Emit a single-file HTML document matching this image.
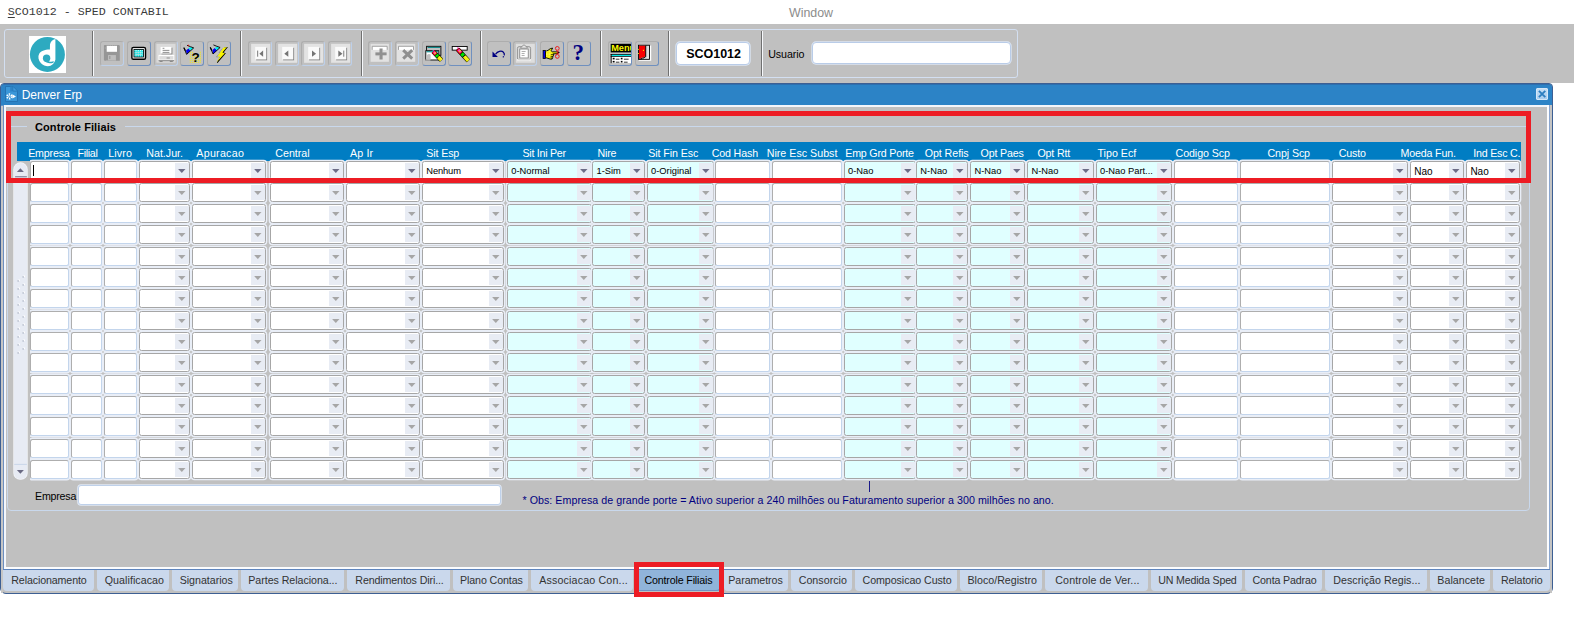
<!DOCTYPE html>
<html><head><meta charset="utf-8"><title>SCO1012 - SPED CONTABIL</title>
<style>
html,body{margin:0;padding:0;background:#fff}
body{width:1574px;height:630px;position:relative;overflow:hidden;font-family:"Liberation Sans",sans-serif}
.t{position:absolute;white-space:nowrap;line-height:20px;height:20px}
.s{font-family:"Liberation Sans",sans-serif}
.b{font-family:"Liberation Sans",sans-serif;font-weight:bold}
.m{font-family:"Liberation Mono",monospace}
</style></head><body>
<div class="t m" style="left:7.80px;top:1.91px;font-size:11.67px;color:#3a3a3a;"><u style="text-underline-offset:2px;text-decoration-thickness:1px">S</u>CO1012 - SPED CONTABIL</div>
<div class="t s" style="left:789.00px;top:2.72px;font-size:12.4px;color:#8c8c8c;">Window</div>
<div style="position:absolute;left:0.00px;top:24.00px;width:1574.00px;height:59.00px;background:#c0c0c0"></div>
<div style="position:absolute;left:3.70px;top:28.90px;width:1014.30px;height:49.00px;box-sizing:border-box;border:1.5px solid #d3dff1;border-radius:3px"></div>
<div style="position:absolute;left:29.00px;top:36.00px;width:37.00px;height:37.00px;"><svg width="37" height="37" viewBox="0 0 37 37" style="position:absolute;left:0;top:0">
<rect width="37" height="37" fill="#fff"/>
<circle cx="18.4" cy="18.4" r="17.5" fill="#2daac0"/>
<path d="M26.4 2.9 L26.4 23.8 C25.6 26.6 23.8 28.9 21.5 29.8 C18.4 30.9 14.6 29.9 12 27.2 C9.4 24.4 8.6 20.6 10.2 17.8 C11.8 15 15.2 13.6 20.9 13.5 L21 8.5 C21.3 5.8 23.4 3.6 26.4 2.9 Z" fill="#fff"/>
<circle cx="17.6" cy="22.3" r="3.7" fill="#2daac0"/>
<path d="M15.2 24.6 C17 27.6 21.5 27.6 24.4 26.7 L24.9 25.3 C22 26 20 25.7 18.6 24.4 Z" fill="#2daac0"/>
</svg></div>
<div style="position:absolute;left:91.50px;top:31.00px;width:1.00px;height:44.80px;background:#707070"></div>
<div style="position:absolute;left:92.50px;top:31.00px;width:1.20px;height:44.80px;background:#f6f8fb"></div>
<div style="position:absolute;left:239.70px;top:31.00px;width:1.00px;height:44.80px;background:#707070"></div>
<div style="position:absolute;left:240.70px;top:31.00px;width:1.20px;height:44.80px;background:#f6f8fb"></div>
<div style="position:absolute;left:360.70px;top:31.00px;width:1.00px;height:44.80px;background:#707070"></div>
<div style="position:absolute;left:361.70px;top:31.00px;width:1.20px;height:44.80px;background:#f6f8fb"></div>
<div style="position:absolute;left:480.00px;top:31.00px;width:1.00px;height:44.80px;background:#707070"></div>
<div style="position:absolute;left:481.00px;top:31.00px;width:1.20px;height:44.80px;background:#f6f8fb"></div>
<div style="position:absolute;left:600.00px;top:31.00px;width:1.00px;height:44.80px;background:#707070"></div>
<div style="position:absolute;left:601.00px;top:31.00px;width:1.20px;height:44.80px;background:#f6f8fb"></div>
<div style="position:absolute;left:667.80px;top:31.00px;width:1.00px;height:44.80px;background:#707070"></div>
<div style="position:absolute;left:668.80px;top:31.00px;width:1.20px;height:44.80px;background:#f6f8fb"></div>
<div style="position:absolute;left:760.80px;top:31.00px;width:1.00px;height:44.80px;background:#707070"></div>
<div style="position:absolute;left:761.80px;top:31.00px;width:1.20px;height:44.80px;background:#f6f8fb"></div>
<div style="position:absolute;left:100.20px;top:41.20px;width:24.00px;height:24.40px;box-sizing:border-box;border:1px solid #adadad;border-bottom-color:#bdd0ea;border-right-color:#bdd0ea;border-radius:3px;overflow:hidden"><svg width="22" height="22.4" viewBox="0 0 22 22.4" style="position:absolute;left:0;top:0"><path d="M3.6 2.9 H17.9 L18.8 3.8 V18.7 H3.6 L2.9 18 V3.6 Z" fill="#969696"/><path d="M5.6 3.2 H16.1" stroke="#c0c0c0" stroke-width="0.7" stroke-dasharray="0.9 0.9"/><rect x="5.7" y="3.9" width="10.3" height="5.9" fill="#fff"/><rect x="7" y="13.1" width="7.9" height="5.2" fill="#bdbdbd"/><rect x="8" y="14" width="1.5" height="3" fill="#a0a0a0"/><path d="M5.5 18.4 H15.5" stroke="#c0c0c0" stroke-width="0.8" stroke-dasharray="1 1"/><rect x="3.8" y="5.6" width="0.8" height="0.8" fill="#c6c6c6"/></svg></div>
<div style="position:absolute;left:126.80px;top:41.20px;width:24.00px;height:24.40px;box-sizing:border-box;border:1px solid #adadad;border-bottom-color:#6f90bf;border-right-color:#6f90bf;border-radius:3px;overflow:hidden"><svg width="22" height="22.4" viewBox="0 0 22 22.4" style="position:absolute;left:0;top:0"><rect x="3.85" y="5.35" width="13.7" height="11.9" rx="1.6" fill="#e4e4e4" stroke="#000" stroke-width="1.4"/><rect x="6.0" y="7.4" width="9.6" height="7.6" fill="#00e8e8" stroke="#000" stroke-width="0.8"/><rect x="6.60" y="8.00" width="0.9" height="0.9" fill="#fff"/><rect x="8.40" y="8.00" width="0.9" height="0.9" fill="#fff"/><rect x="10.20" y="8.00" width="0.9" height="0.9" fill="#fff"/><rect x="12.00" y="8.00" width="0.9" height="0.9" fill="#fff"/><rect x="13.80" y="8.00" width="0.9" height="0.9" fill="#fff"/><rect x="6.60" y="9.80" width="0.9" height="0.9" fill="#fff"/><rect x="8.40" y="9.80" width="0.9" height="0.9" fill="#fff"/><rect x="10.20" y="9.80" width="0.9" height="0.9" fill="#fff"/><rect x="12.00" y="9.80" width="0.9" height="0.9" fill="#fff"/><rect x="13.80" y="9.80" width="0.9" height="0.9" fill="#fff"/><rect x="6.60" y="11.60" width="0.9" height="0.9" fill="#fff"/><rect x="8.40" y="11.60" width="0.9" height="0.9" fill="#fff"/><rect x="10.20" y="11.60" width="0.9" height="0.9" fill="#fff"/><rect x="12.00" y="11.60" width="0.9" height="0.9" fill="#fff"/><rect x="13.80" y="11.60" width="0.9" height="0.9" fill="#fff"/><rect x="6.60" y="13.40" width="0.9" height="0.9" fill="#fff"/><rect x="8.40" y="13.40" width="0.9" height="0.9" fill="#fff"/><rect x="10.20" y="13.40" width="0.9" height="0.9" fill="#fff"/><rect x="12.00" y="13.40" width="0.9" height="0.9" fill="#fff"/><rect x="13.80" y="13.40" width="0.9" height="0.9" fill="#fff"/><path d="M7.4 10.2 H14 M7.4 12.4 H14" stroke="#c9d6d6" stroke-width="0.8"/></svg></div>
<div style="position:absolute;left:153.50px;top:41.20px;width:24.00px;height:24.40px;box-sizing:border-box;border:1px solid #adadad;border-bottom-color:#bdd0ea;border-right-color:#bdd0ea;border-radius:3px;overflow:hidden"><svg width="22" height="22.4" viewBox="0 0 22 22.4" style="position:absolute;left:0;top:0"><rect x="1.4" y="1.8" width="19.1" height="18.9" fill="#dadada"/><rect x="6.5" y="5.7" width="10.9" height="6.7" fill="#7e7e7e"/><rect x="5.6" y="4.9" width="10.9" height="6.7" fill="#fff"/><path d="M7.6 6.3 H9.4 M7.6 8.4 H14.4 M7.6 10.4 H14.4" stroke="#747474" stroke-width="0.8"/><rect x="3.5" y="12.9" width="15.7" height="5.4" fill="#fff"/><rect x="4.3" y="14.1" width="14.1" height="3.5" fill="#dcdcdc"/><path d="M11.6 16 h3.2" stroke="#8a8a8a" stroke-width="0.9"/><path d="M3.6 18.7 H19.1" stroke="#7e7e7e" stroke-width="0.9"/><path d="M4.6 19.5 h3 M14.8 19.5 h3" stroke="#8a8a8a" stroke-width="1"/></svg></div>
<div style="position:absolute;left:180.20px;top:41.20px;width:24.00px;height:24.40px;box-sizing:border-box;border:1px solid #adadad;border-bottom-color:#6f90bf;border-right-color:#6f90bf;border-radius:3px;overflow:hidden"><svg width="22" height="22.4" viewBox="0 0 22 22.4" style="position:absolute;left:0;top:0"><rect x="8.80" y="9.80" width="1.0" height="1.0" fill="#f8f000"/><rect x="10.80" y="9.80" width="1.0" height="1.0" fill="#f8f000"/><rect x="18.80" y="9.80" width="1.0" height="1.0" fill="#f8f000"/><rect x="8.80" y="11.80" width="1.0" height="1.0" fill="#f8f000"/><rect x="10.80" y="11.80" width="1.0" height="1.0" fill="#f8f000"/><rect x="12.80" y="11.80" width="1.0" height="1.0" fill="#f8f000"/><rect x="18.80" y="11.80" width="1.0" height="1.0" fill="#f8f000"/><rect x="8.80" y="13.80" width="1.0" height="1.0" fill="#f8f000"/><rect x="10.80" y="13.80" width="1.0" height="1.0" fill="#f8f000"/><rect x="12.80" y="13.80" width="1.0" height="1.0" fill="#f8f000"/><rect x="14.80" y="13.80" width="1.0" height="1.0" fill="#f8f000"/><rect x="16.80" y="13.80" width="1.0" height="1.0" fill="#f8f000"/><rect x="18.80" y="13.80" width="1.0" height="1.0" fill="#f8f000"/><rect x="8.80" y="15.80" width="1.0" height="1.0" fill="#f8f000"/><rect x="10.80" y="15.80" width="1.0" height="1.0" fill="#f8f000"/><rect x="12.80" y="15.80" width="1.0" height="1.0" fill="#f8f000"/><rect x="14.80" y="15.80" width="1.0" height="1.0" fill="#f8f000"/><rect x="16.80" y="15.80" width="1.0" height="1.0" fill="#f8f000"/><rect x="18.80" y="15.80" width="1.0" height="1.0" fill="#f8f000"/><rect x="8.80" y="17.80" width="1.0" height="1.0" fill="#f8f000"/><rect x="10.80" y="17.80" width="1.0" height="1.0" fill="#f8f000"/><rect x="12.80" y="17.80" width="1.0" height="1.0" fill="#f8f000"/><rect x="14.80" y="17.80" width="1.0" height="1.0" fill="#f8f000"/><rect x="16.80" y="17.80" width="1.0" height="1.0" fill="#f8f000"/><rect x="18.80" y="17.80" width="1.0" height="1.0" fill="#f8f000"/><rect x="8.80" y="19.80" width="1.0" height="1.0" fill="#f8f000"/><rect x="10.80" y="19.80" width="1.0" height="1.0" fill="#f8f000"/><rect x="12.80" y="19.80" width="1.0" height="1.0" fill="#f8f000"/><rect x="14.80" y="19.80" width="1.0" height="1.0" fill="#f8f000"/><rect x="16.80" y="19.80" width="1.0" height="1.0" fill="#f8f000"/><rect x="18.80" y="19.80" width="1.0" height="1.0" fill="#f8f000"/><g transform="translate(0,0)"><path d="M5 8.4 L5.7 12.3 L9.6 8.6 L7.4 6.4 Z" fill="#0000f0"/><path d="M7.4 6.4 L9.6 8.6 L12.4 6 L9.4 5.1 Z" fill="#00f0f0"/><path d="M2.9 5.6 L5.6 12.4 L12.7 5.9 L9.4 4.7 L6 3.3" fill="none" stroke="#000" stroke-width="0.9"/><path d="M2.9 5.8 L4.4 8.8" stroke="#000" stroke-width="1.2"/></g><rect x="6.8" y="2.8" width="1.3" height="1" fill="#f00000"/><text x="10.6" y="19.6" font-family="Liberation Sans" font-weight="bold" font-size="13.5" fill="#000">?</text></svg></div>
<div style="position:absolute;left:206.80px;top:41.20px;width:24.00px;height:24.40px;box-sizing:border-box;border:1px solid #adadad;border-bottom-color:#6f90bf;border-right-color:#6f90bf;border-radius:3px;overflow:hidden"><svg width="22" height="22.4" viewBox="0 0 22 22.4" style="position:absolute;left:0;top:0"><g transform="translate(-0.6,-0.4)"><path d="M5 8.4 L5.7 12.3 L9.6 8.6 L7.4 6.4 Z" fill="#0000f0"/><path d="M7.4 6.4 L9.6 8.6 L12.4 6 L9.4 5.1 Z" fill="#00f0f0"/><path d="M2.9 5.6 L5.6 12.4 L12.7 5.9 L9.4 4.7 L6 3.3" fill="none" stroke="#000" stroke-width="0.9"/><path d="M2.9 5.8 L4.4 8.8" stroke="#000" stroke-width="1.2"/></g><path d="M14.6 6.6 L11 10.6 L12.6 10.8 L8.4 14.8 L10.6 15" fill="none" stroke="#8f8f8f" stroke-width="0.9"/><path d="M16.6 5.6 L20 4.9 L15.6 10.6 L17.9 11.3 L9.5 20.9 L8.9 20.4 Z" fill="#000"/><path d="M15.4 5.7 L19 5.1 L14.4 10.6 L16.8 11.3 L8.5 20.6 L12 14.3 L9.3 14.5 Z" fill="#f8f400"/></svg></div>
<div style="position:absolute;left:247.80px;top:41.20px;width:24.00px;height:24.40px;box-sizing:border-box;border:1px solid #adadad;border-bottom-color:#bdd0ea;border-right-color:#bdd0ea;border-radius:3px;overflow:hidden"><svg width="22" height="22.4" viewBox="0 0 22 22.4" style="position:absolute;left:0;top:0"><rect x="2.1" y="1.8" width="19.1" height="19" fill="#e3e3e3"/><rect x="7.1" y="5.8" width="11" height="12.5" fill="#7a7a7a"/><rect x="6.2" y="4.9" width="11.1" height="12.6" fill="#fafafa"/><rect x="8.2" y="8.6" width="0.95" height="6.1" fill="#747474"/><path d="M10.4 11.65 L14.1 8.5 V14.8 Z" fill="#747474"/></svg></div>
<div style="position:absolute;left:274.50px;top:41.20px;width:24.00px;height:24.40px;box-sizing:border-box;border:1px solid #adadad;border-bottom-color:#bdd0ea;border-right-color:#bdd0ea;border-radius:3px;overflow:hidden"><svg width="22" height="22.4" viewBox="0 0 22 22.4" style="position:absolute;left:0;top:0"><rect x="2.1" y="1.8" width="19.1" height="19" fill="#e3e3e3"/><rect x="7.1" y="5.8" width="11" height="12.5" fill="#7a7a7a"/><rect x="6.2" y="4.9" width="11.1" height="12.6" fill="#fafafa"/><path d="M8.3 11.65 L12.3 8.5 V14.8 Z" fill="#747474"/></svg></div>
<div style="position:absolute;left:301.20px;top:41.20px;width:24.00px;height:24.40px;box-sizing:border-box;border:1px solid #adadad;border-bottom-color:#bdd0ea;border-right-color:#bdd0ea;border-radius:3px;overflow:hidden"><svg width="22" height="22.4" viewBox="0 0 22 22.4" style="position:absolute;left:0;top:0"><rect x="2.1" y="1.8" width="19.1" height="19" fill="#e3e3e3"/><rect x="7.1" y="5.8" width="11" height="12.5" fill="#7a7a7a"/><rect x="6.2" y="4.9" width="11.1" height="12.6" fill="#fafafa"/><path d="M14.1 11.65 L10 8.5 V14.8 Z" fill="#747474"/></svg></div>
<div style="position:absolute;left:327.80px;top:41.20px;width:24.00px;height:24.40px;box-sizing:border-box;border:1px solid #adadad;border-bottom-color:#bdd0ea;border-right-color:#bdd0ea;border-radius:3px;overflow:hidden"><svg width="22" height="22.4" viewBox="0 0 22 22.4" style="position:absolute;left:0;top:0"><rect x="2.1" y="1.8" width="19.1" height="19" fill="#e3e3e3"/><rect x="7.1" y="5.8" width="11" height="12.5" fill="#7a7a7a"/><rect x="6.2" y="4.9" width="11.1" height="12.6" fill="#fafafa"/><rect x="14.3" y="8.6" width="0.95" height="6.1" fill="#747474"/><path d="M13.5 11.65 L9.3 8.5 V14.8 Z" fill="#747474"/></svg></div>
<div style="position:absolute;left:368.30px;top:41.20px;width:24.00px;height:24.40px;box-sizing:border-box;border:1px solid #adadad;border-bottom-color:#bdd0ea;border-right-color:#bdd0ea;border-radius:3px;overflow:hidden"><svg width="22" height="22.4" viewBox="0 0 22 22.4" style="position:absolute;left:0;top:0"><rect x="1.6" y="1.8" width="18.3" height="18" fill="#e2e2e2"/><rect x="2.9" y="4" width="15.6" height="3.9" fill="#fff"/><path d="M3.2 7.9 V4.3 H18.2 V7.9" fill="none" stroke="#8c8c8c" stroke-width="0.8"/><rect x="10.5" y="6.5" width="3.1" height="11" fill="#909090"/><rect x="6.4" y="10.4" width="11.2" height="2.9" fill="#909090"/><path d="M13.6 7.2 V10.4 M6.8 13.6 H10.5" stroke="#bdbdbd" stroke-width="0.8"/></svg></div>
<div style="position:absolute;left:395.00px;top:41.20px;width:24.00px;height:24.40px;box-sizing:border-box;border:1px solid #adadad;border-bottom-color:#bdd0ea;border-right-color:#bdd0ea;border-radius:3px;overflow:hidden"><svg width="22" height="22.4" viewBox="0 0 22 22.4" style="position:absolute;left:0;top:0"><rect x="0.9" y="1.8" width="18.3" height="18" fill="#e2e2e2"/><rect x="2.2" y="4" width="15.6" height="3.9" fill="#fff"/><path d="M2.5 7.9 V4.3 H17.5 V7.9" fill="none" stroke="#8c8c8c" stroke-width="0.8"/><path d="M7.2 8.2 L16.2 16.6 M16.2 8.2 L7.2 16.6" stroke="#8e8e8e" stroke-width="3"/></svg></div>
<div style="position:absolute;left:421.70px;top:41.20px;width:24.00px;height:24.40px;box-sizing:border-box;border:1px solid #adadad;border-bottom-color:#6f90bf;border-right-color:#6f90bf;border-radius:3px;overflow:hidden"><svg width="22" height="22.4" viewBox="0 0 22 22.4" style="position:absolute;left:0;top:0"><rect x="3.6" y="4.3" width="14.3" height="9" fill="#c0c0c0" stroke="#000" stroke-width="0.9"/><rect x="4.6" y="4.9" width="12.4" height="1" fill="#008888"/><rect x="2.8" y="8.7" width="13" height="9.3" fill="#fff" stroke="#000" stroke-width="0.9"/><rect x="3.4" y="9.2" width="11.8" height="1.1" fill="#008888"/><path d="M3.4 17.4 V13.6 Q5 11 7.6 12.4 V17.4 Z" fill="#c0c0c0"/><rect x="2.4" y="17.4" width="5" height="1.2" fill="#c0c0c0"/><ellipse cx="10.6" cy="9.2" rx="2.2" ry="0.8" fill="#00e8e8"/><g transform="translate(10.2,9.6) rotate(46.4)"><rect x="-0.4" y="-2.3" width="12.48" height="4.6" rx="1" fill="#000"/><rect x="0" y="-1.8" width="3.92" height="3.6" fill="#f01010"/><rect x="0.71" y="-1.3" width="2.61" height="2.1" fill="#ff30e0"/><rect x="1.90" y="-1.5" width="1" height="2.3" fill="#f8e000"/><rect x="4.40" y="-1.8" width="2.38" height="3.6" fill="#00e000"/><rect x="7.37" y="-1.8" width="4.52" height="3.6" fill="#f4f000"/><path d="M7.60 -0.6000000000000001 H11.88" stroke="#fff8a0" stroke-width="0.7" stroke-dasharray="0.8 0.8"/></g><rect x="9.8" y="8.4" width="1.4" height="0.9" fill="#ff30e0"/></svg></div>
<div style="position:absolute;left:448.30px;top:41.20px;width:24.00px;height:24.40px;box-sizing:border-box;border:1px solid #adadad;border-bottom-color:#6f90bf;border-right-color:#6f90bf;border-radius:3px;overflow:hidden"><svg width="22" height="22.4" viewBox="0 0 22 22.4" style="position:absolute;left:0;top:0"><rect x="3.2" y="4.45" width="15" height="3.7" fill="#fff" stroke="#000" stroke-width="0.9"/><g transform="translate(8.6,7.2) rotate(47.3)"><rect x="-0.4" y="-2.3" width="16.38" height="4.6" rx="1" fill="#000"/><rect x="0" y="-1.8" width="5.21" height="3.6" fill="#f01010"/><rect x="0.95" y="-1.3" width="3.47" height="2.1" fill="#ff30e0"/><rect x="2.53" y="-1.5" width="1" height="2.3" fill="#f8e000"/><rect x="5.84" y="-1.8" width="3.16" height="3.6" fill="#00e000"/><rect x="9.78" y="-1.8" width="6.00" height="3.6" fill="#f4f000"/><path d="M10.10 -0.6000000000000001 H15.78" stroke="#fff8a0" stroke-width="0.7" stroke-dasharray="0.8 0.8"/></g><rect x="8" y="5.4" width="1.5" height="0.9" fill="#ff30e0"/></svg></div>
<div style="position:absolute;left:486.50px;top:41.20px;width:24.00px;height:24.40px;box-sizing:border-box;border:1px solid #adadad;border-bottom-color:#6f90bf;border-right-color:#6f90bf;border-radius:3px;overflow:hidden"><svg width="22" height="22.4" viewBox="0 0 22 22.4" style="position:absolute;left:0;top:0"><path d="M4.5 9.6 V15 H9.9 Z" fill="#000080"/><path d="M7.6 12.2 C9.5 9.6 13.2 8.2 15.4 10.2 C16.6 11.4 16.5 12.6 16.1 13.4" fill="none" stroke="#000080" stroke-width="1.25"/><path d="M15.6 14.2 L15.2 15.4" stroke="#000080" stroke-width="1.3"/></svg></div>
<div style="position:absolute;left:513.20px;top:41.20px;width:24.00px;height:24.40px;box-sizing:border-box;border:1px solid #adadad;border-bottom-color:#bdd0ea;border-right-color:#bdd0ea;border-radius:3px;overflow:hidden"><svg width="22" height="22.4" viewBox="0 0 22 22.4" style="position:absolute;left:0;top:0"><rect x="1.8" y="1.8" width="19" height="19" fill="#dedede"/><rect x="3.4" y="4.7" width="13.2" height="12.9" rx="1.6" fill="#dcdcdc" stroke="#8c8c8c" stroke-width="0.9"/><path d="M3 17.9 H17" stroke="#fff" stroke-width="1"/><path d="M6.6 6.2 Q6.6 4.6 8.2 4.5 Q8.6 3 10 3 Q11.4 3 11.8 4.5 Q13.4 4.6 13.4 6.2 Z" fill="#e6e6e6" stroke="#8c8c8c" stroke-width="0.8"/><rect x="5.7" y="7" width="8.6" height="9" fill="#e8e8e8" stroke="#8f8f8f" stroke-width="0.9"/><rect x="6.6" y="7.9" width="6.8" height="7.3" fill="#fff"/><path d="M7.6 9.5 H11.6 M7.6 11.5 H10.6 M7.6 13.5 H10.6" stroke="#9a9a9a" stroke-width="0.8"/></svg></div>
<div style="position:absolute;left:540.00px;top:41.20px;width:24.00px;height:24.40px;box-sizing:border-box;border:1px solid #adadad;border-bottom-color:#6f90bf;border-right-color:#6f90bf;border-radius:3px;overflow:hidden"><svg width="22" height="22.4" viewBox="0 0 22 22.4" style="position:absolute;left:0;top:0"><rect x="2.1" y="8.5" width="2.3" height="8" fill="#0000f8" stroke="#000" stroke-width="0.8"/><path d="M4.5 9.6 L7.2 8.2 L9.4 6.6 L11.6 6.1 L11 7.6 L9.8 8.6 L11.2 9.8 L16.8 9.9 L16.8 11.6 L12 11.9 L12.6 12.6 L12.4 13.8 L11.9 14.2 L12 15.4 L11.3 15.9 L11.2 17 L9.6 17.2 L7 16.4 L4.5 15.6 Z" fill="#f6ee00" stroke="#000" stroke-width="0.9" stroke-linejoin="round"/><rect x="5.20" y="9.40" width="0.7" height="0.7" fill="#fff8c0"/><rect x="6.65" y="9.40" width="0.7" height="0.7" fill="#fff8c0"/><rect x="8.10" y="9.40" width="0.7" height="0.7" fill="#fff8c0"/><rect x="9.55" y="9.40" width="0.7" height="0.7" fill="#fff8c0"/><rect x="5.20" y="10.85" width="0.7" height="0.7" fill="#fff8c0"/><rect x="6.65" y="10.85" width="0.7" height="0.7" fill="#fff8c0"/><rect x="8.10" y="10.85" width="0.7" height="0.7" fill="#fff8c0"/><rect x="9.55" y="10.85" width="0.7" height="0.7" fill="#fff8c0"/><rect x="5.20" y="12.30" width="0.7" height="0.7" fill="#fff8c0"/><rect x="6.65" y="12.30" width="0.7" height="0.7" fill="#fff8c0"/><rect x="8.10" y="12.30" width="0.7" height="0.7" fill="#fff8c0"/><rect x="9.55" y="12.30" width="0.7" height="0.7" fill="#fff8c0"/><rect x="5.20" y="13.75" width="0.7" height="0.7" fill="#fff8c0"/><rect x="6.65" y="13.75" width="0.7" height="0.7" fill="#fff8c0"/><rect x="8.10" y="13.75" width="0.7" height="0.7" fill="#fff8c0"/><rect x="9.55" y="13.75" width="0.7" height="0.7" fill="#fff8c0"/><path d="M9.8 12.6 H12.4 M9.6 14.4 H12 M9.4 16 H11.2" stroke="#000" stroke-width="0.7"/><circle cx="16.3" cy="6.4" r="1.9" fill="none" stroke="#f01010" stroke-width="0.9"/><circle cx="16.3" cy="14.4" r="1.9" fill="none" stroke="#f01010" stroke-width="0.9"/><path d="M15.4 8.2 L17.8 12.2 M15.4 12.6 L17.8 8.6" stroke="#f01010" stroke-width="0.8"/><path d="M17 10.4 L18.6 10.4" stroke="#000" stroke-width="0.9"/></svg></div>
<div style="position:absolute;left:566.70px;top:41.20px;width:24.00px;height:24.40px;box-sizing:border-box;border:1px solid #adadad;border-bottom-color:#6f90bf;border-right-color:#6f90bf;border-radius:3px;overflow:hidden"><svg width="22" height="22.4" viewBox="0 0 22 22.4" style="position:absolute;left:0;top:0"><text x="4.6" y="18.4" font-family="Liberation Serif" font-weight="bold" font-size="23" fill="#000080">?</text></svg></div>
<div style="position:absolute;left:608.30px;top:41.20px;width:24.00px;height:24.40px;box-sizing:border-box;border:1px solid #adadad;border-bottom-color:#6f90bf;border-right-color:#6f90bf;border-radius:3px;overflow:hidden"><svg width="22" height="22.4" viewBox="0 0 22 22.4" style="position:absolute;left:0;top:0"><rect x="1.7" y="1.8" width="20.3" height="8.6" fill="#000"/><text x="2.2" y="9.3" font-family="Liberation Sans" font-weight="bold" font-size="9.6" fill="#f8f800" textLength="24" lengthAdjust="spacingAndGlyphs">Menu</text><rect x="1.7" y="12" width="20.3" height="0.9" fill="#000"/><rect x="2.5" y="12.8" width="19.5" height="1.4" fill="#00e8e8"/><rect x="1.7" y="14.1" width="20.3" height="0.8" fill="#000"/><rect x="2.5" y="14.9" width="19.5" height="6.2" fill="#fff"/><rect x="1.7" y="12" width="0.9" height="9.2" fill="#000"/><rect x="3.7" y="15.8" width="1.9" height="1.6" fill="#000"/><rect x="11.8" y="15.8" width="1.7" height="1.6" fill="#000"/><rect x="3.7" y="18.9" width="1.9" height="1.6" fill="#000"/><rect x="11.8" y="18.9" width="1.7" height="1.6" fill="#000"/><path d="M6.8 17.2 H10.4 M14.9 17.2 H19.6 M6.8 20.2 H10.4 M14.9 20.2 H18.6" stroke="#000" stroke-width="0.8"/></svg></div>
<div style="position:absolute;left:635.00px;top:41.20px;width:24.00px;height:24.40px;box-sizing:border-box;border:1px solid #adadad;border-bottom-color:#6f90bf;border-right-color:#6f90bf;border-radius:3px;overflow:hidden"><svg width="22" height="22.4" viewBox="0 0 22 22.4" style="position:absolute;left:0;top:0"><rect x="2.8" y="3.6" width="12.4" height="15.2" fill="#fff"/><rect x="2.45" y="3.25" width="11.1" height="14.1" fill="#c0c0c0" stroke="#000" stroke-width="0.9"/><rect x="11.4" y="3.9" width="1.3" height="12.4" fill="#eee"/><path d="M6 15.9 H12.6" stroke="#eee" stroke-width="0.9"/><path d="M9.6 3.7 V14.6 H9 V15.3 H8 V16 H5.6 V17 H2.9" fill="none" stroke="#000" stroke-width="1"/><path d="M3 3.7 H9.2 V14.2 H8.6 V14.9 H7.6 V15.6 H5.4 V16.4 H3 Z" fill="#f80000"/><rect x="6.9" y="7.8" width="1.1" height="1.1" fill="#f8e000"/><rect x="2" y="6.9" width="1" height="0.9" fill="#f8e000"/><rect x="2" y="11" width="1" height="0.9" fill="#f8e000"/></svg></div>
<div style="position:absolute;left:675.70px;top:41.50px;width:74.40px;height:23.00px;box-sizing:border-box;background:#fff;border:1.5px solid #b9cce8;border-radius:4px;box-shadow:0 0 0 0.7px #dbe5f3"></div>
<div class="t b" style="left:686.30px;top:43.69px;font-size:12.5px;color:#000;letter-spacing:-0.042px;">SCO1012</div>
<div class="t s" style="left:768.20px;top:44.32px;font-size:10.67px;color:#000;letter-spacing:-0.067px;">Usuario</div>
<div style="position:absolute;left:812.00px;top:41.80px;width:199.00px;height:21.80px;box-sizing:border-box;background:#fff;border:1.5px solid #b9cce8;border-radius:4px;box-shadow:0 0 0 0.7px #dbe5f3"></div>
<div style="position:absolute;left:0.00px;top:83.00px;width:1553.00px;height:511.00px;box-sizing:border-box;background:#c0c0c0;border:1px solid #3d5f93;border-radius:4px 4px 6px 6px"></div>
<div style="position:absolute;left:0.80px;top:83.80px;width:1551.00px;height:21.00px;background:#2c83c6;border-radius:3px 3px 0 0;border-top:1px solid #2d6fae;box-sizing:border-box"></div>
<div style="position:absolute;left:5.20px;top:86.00px;width:13.00px;height:16.00px;"><svg width="13" height="16" viewBox="0 0 13 16" style="position:absolute;left:0;top:0">
<path d="M0.5 0.5 H8 L12.5 5 V15.5 H0.5 Z" fill="#3a96d8" stroke="#2573b3" stroke-width="1"/>
<path d="M5.2 0.5 H8 V5 H12.5 V5.6 H5.2 Z" fill="#2c83c6" />
<path d="M8 0.5 L12.5 5 H8 Z" fill="#3f9add" stroke="#2573b3" stroke-width="0.6"/>
<circle cx="4.3" cy="10.4" r="2.3" fill="none" stroke="#fff" stroke-width="1.5" stroke-dasharray="1.3 1.0"/>
<circle cx="4.3" cy="10.4" r="1.1" fill="#fff"/>
<circle cx="4.3" cy="10.4" r="0.5" fill="#2c83c6"/>
<path d="M7.3 8.3 L11 10.4 L7.3 12.5 Z" fill="#fff"/>
</svg></div>
<div class="t s" style="left:21.70px;top:84.86px;font-size:12px;color:#fff;letter-spacing:-0.039px;">Denver Erp</div>
<div style="position:absolute;left:1536.00px;top:88.10px;width:12.20px;height:12.00px;box-sizing:border-box;background:linear-gradient(#c6dff5,#a9cdee);border:1px solid #d4e7f8;border-radius:1px"><svg width="10.2" height="10" viewBox="0 0 10 10" style="position:absolute;left:0;top:0"><path d="M1.8 1.8 L8.2 8.2 M8.2 1.8 L1.8 8.2" stroke="#2e7fc0" stroke-width="1.9"/></svg></div>
<div style="position:absolute;left:1.00px;top:105.00px;width:1551.00px;height:0.60px;background:#5f95c9"></div>
<div style="position:absolute;left:1.00px;top:105.50px;width:2.20px;height:487.00px;background:#c6c6c6"></div>
<div style="position:absolute;left:3.10px;top:105.50px;width:1.00px;height:464.50px;background:#6d8fc0"></div>
<div style="position:absolute;left:4.00px;top:105.30px;width:1543.00px;height:1.70px;background:#f3f6fb"></div>
<div style="position:absolute;left:4.00px;top:105.30px;width:1.80px;height:464.00px;background:#f3f6fb"></div>
<div style="position:absolute;left:1546.80px;top:105.30px;width:2.10px;height:464.00px;background:#fbfcfe"></div>
<div style="position:absolute;left:4.00px;top:566.90px;width:1545.00px;height:2.20px;background:#fbfcfe"></div>
<div style="position:absolute;left:1548.90px;top:105.30px;width:0.90px;height:465.00px;background:#8aa6cf"></div>
<div style="position:absolute;left:1549.80px;top:105.30px;width:2.20px;height:487.50px;background:#c4c4c4"></div>
<div style="position:absolute;left:3.10px;top:569.10px;width:1547.00px;height:0.90px;background:#5d84bd"></div>
<div style="position:absolute;left:7.00px;top:126.30px;width:1522.50px;height:384.60px;box-sizing:border-box;border:1.2px solid #c9d8ec;border-radius:4px"></div>
<div style="position:absolute;left:27.00px;top:120.00px;width:97.50px;height:12.00px;background:#c0c0c0"></div>
<div class="t b" style="left:35.00px;top:117.21px;font-size:11px;color:#000;letter-spacing:0.097px;">Controle Filiais</div>
<div style="position:absolute;left:17.10px;top:142.00px;width:1504.30px;height:18.80px;background:#007dc3"></div>
<div class="t s" style="left:28.20px;top:143.32px;font-size:10.67px;color:#fff;letter-spacing:-0.185px;">Empresa</div>
<div class="t s" style="left:77.50px;top:143.32px;font-size:10.67px;color:#fff;letter-spacing:-0.322px;">Filial</div>
<div class="t s" style="left:108.30px;top:143.32px;font-size:10.67px;color:#fff;letter-spacing:0.115px;">Livro</div>
<div class="t s" style="left:146.30px;top:143.32px;font-size:10.67px;color:#fff;letter-spacing:-0.008px;">Nat.Jur.</div>
<div class="t s" style="left:196.30px;top:143.32px;font-size:10.67px;color:#fff;letter-spacing:0.278px;">Apuracao</div>
<div class="t s" style="left:275.30px;top:143.32px;font-size:10.67px;color:#fff;letter-spacing:0.001px;">Central</div>
<div class="t s" style="left:350.00px;top:143.32px;font-size:10.67px;color:#fff;letter-spacing:0.153px;">Ap Ir</div>
<div class="t s" style="left:426.30px;top:143.32px;font-size:10.67px;color:#fff;letter-spacing:-0.129px;">Sit Esp</div>
<div class="t s" style="left:522.50px;top:143.32px;font-size:10.67px;color:#fff;letter-spacing:-0.269px;">Sit Ini Per</div>
<div class="t s" style="left:597.50px;top:143.32px;font-size:10.67px;color:#fff;letter-spacing:-0.216px;">Nire</div>
<div class="t s" style="left:648.30px;top:143.32px;font-size:10.67px;color:#fff;letter-spacing:-0.090px;">Sit Fin Esc</div>
<div class="t s" style="left:711.70px;top:143.32px;font-size:10.67px;color:#fff;letter-spacing:-0.143px;">Cod Hash</div>
<div class="t s" style="left:766.70px;top:143.32px;font-size:10.67px;color:#fff;letter-spacing:0.017px;">Nire Esc Subst</div>
<div class="t s" style="left:845.30px;top:143.32px;font-size:10.67px;color:#fff;letter-spacing:-0.204px;">Emp Grd Porte</div>
<div class="t s" style="left:924.70px;top:143.32px;font-size:10.67px;color:#fff;letter-spacing:-0.052px;">Opt Refis</div>
<div class="t s" style="left:980.50px;top:143.32px;font-size:10.67px;color:#fff;letter-spacing:-0.148px;">Opt Paes</div>
<div class="t s" style="left:1037.50px;top:143.32px;font-size:10.67px;color:#fff;letter-spacing:-0.185px;">Opt Rtt</div>
<div class="t s" style="left:1097.50px;top:143.32px;font-size:10.67px;color:#fff;letter-spacing:0.007px;">Tipo Ecf</div>
<div class="t s" style="left:1175.50px;top:143.32px;font-size:10.67px;color:#fff;letter-spacing:-0.066px;">Codigo Scp</div>
<div class="t s" style="left:1267.50px;top:143.32px;font-size:10.67px;color:#fff;letter-spacing:-0.099px;">Cnpj Scp</div>
<div class="t s" style="left:1338.70px;top:143.32px;font-size:10.67px;color:#fff;letter-spacing:-0.155px;">Custo</div>
<div class="t s" style="left:1400.50px;top:143.32px;font-size:10.67px;color:#fff;letter-spacing:-0.164px;">Moeda Fun.</div>
<div class="t s" style="left:1473.30px;top:143.32px;font-size:10.67px;color:#fff;letter-spacing:-0.222px;">Ind Esc C.</div>
<div style="position:absolute;left:14.20px;top:162.70px;width:13.20px;height:316.50px;background:#e7ebf4;border-radius:6.5px 6.5px 6px 6px;box-shadow:0 0 0 0.7px #f4f6fa"></div>
<svg style="position:absolute;left:14.2px;top:162.7px" width="13.2" height="18" viewBox="0 0 13.2 18"><path d="M2.9 9.1 L6.4 5.2 L9.9 9.1 Z" fill="#6a6a84"/><path d="M1.1 13.8 H12.9" stroke="#6a6a84" stroke-width="0.95"/></svg>
<svg style="position:absolute;left:14.2px;top:461.2px" width="13.2" height="18" viewBox="0 0 13.2 18"><path d="M2.9 9.1 L9.9 9.1 L6.4 12.8 Z" fill="#6a6a84"/><path d="M0.3 3.4 H12.9" stroke="#c5d2e6" stroke-width="0.9"/></svg>
<svg style="position:absolute;left:14.3px;top:255px" width="13" height="110" viewBox="0 0 13 110"><rect x="9.3" y="20.5" width="1.6" height="1.6" fill="#fff"/><rect x="8.6" y="21.4" width="1.1" height="1.1" fill="#8d97ab"/><rect x="4.3" y="24.5" width="1.6" height="1.6" fill="#fff"/><rect x="3.6" y="25.4" width="1.1" height="1.1" fill="#8d97ab"/><rect x="9.3" y="28.5" width="1.6" height="1.6" fill="#fff"/><rect x="8.6" y="29.4" width="1.1" height="1.1" fill="#8d97ab"/><rect x="4.3" y="32.5" width="1.6" height="1.6" fill="#fff"/><rect x="3.6" y="33.4" width="1.1" height="1.1" fill="#8d97ab"/><rect x="9.3" y="36.5" width="1.6" height="1.6" fill="#fff"/><rect x="8.6" y="37.4" width="1.1" height="1.1" fill="#8d97ab"/><rect x="4.3" y="40.5" width="1.6" height="1.6" fill="#fff"/><rect x="3.6" y="41.4" width="1.1" height="1.1" fill="#8d97ab"/><rect x="9.3" y="44.5" width="1.6" height="1.6" fill="#fff"/><rect x="8.6" y="45.4" width="1.1" height="1.1" fill="#8d97ab"/><rect x="4.3" y="48.5" width="1.6" height="1.6" fill="#fff"/><rect x="3.6" y="49.4" width="1.1" height="1.1" fill="#8d97ab"/><rect x="9.3" y="52.5" width="1.6" height="1.6" fill="#fff"/><rect x="8.6" y="53.4" width="1.1" height="1.1" fill="#8d97ab"/><rect x="4.3" y="56.5" width="1.6" height="1.6" fill="#fff"/><rect x="3.6" y="57.4" width="1.1" height="1.1" fill="#8d97ab"/><rect x="9.3" y="60.5" width="1.6" height="1.6" fill="#fff"/><rect x="8.6" y="61.4" width="1.1" height="1.1" fill="#8d97ab"/><rect x="4.3" y="64.5" width="1.6" height="1.6" fill="#fff"/><rect x="3.6" y="65.4" width="1.1" height="1.1" fill="#8d97ab"/><rect x="9.3" y="68.5" width="1.6" height="1.6" fill="#fff"/><rect x="8.6" y="69.4" width="1.1" height="1.1" fill="#8d97ab"/><rect x="4.3" y="72.5" width="1.6" height="1.6" fill="#fff"/><rect x="3.6" y="73.4" width="1.1" height="1.1" fill="#8d97ab"/><rect x="9.3" y="76.5" width="1.6" height="1.6" fill="#fff"/><rect x="8.6" y="77.4" width="1.1" height="1.1" fill="#8d97ab"/><rect x="4.3" y="80.5" width="1.6" height="1.6" fill="#fff"/><rect x="3.6" y="81.4" width="1.1" height="1.1" fill="#8d97ab"/><rect x="9.3" y="84.5" width="1.6" height="1.6" fill="#fff"/><rect x="8.6" y="85.4" width="1.1" height="1.1" fill="#8d97ab"/><rect x="4.3" y="88.5" width="1.6" height="1.6" fill="#fff"/><rect x="3.6" y="89.4" width="1.1" height="1.1" fill="#8d97ab"/><rect x="9.3" y="92.5" width="1.6" height="1.6" fill="#fff"/><rect x="8.6" y="93.4" width="1.1" height="1.1" fill="#8d97ab"/><rect x="4.3" y="96.5" width="1.6" height="1.6" fill="#fff"/><rect x="3.6" y="97.4" width="1.1" height="1.1" fill="#8d97ab"/></svg>
<div style="position:absolute;left:30.30px;top:161.30px;width:38.60px;height:19.10px;box-sizing:border-box;background:#fff;border:1px solid #aeaeae;border-right-color:#c3d5ec;border-bottom-color:#c3d5ec;border-radius:2.5px;box-shadow:0 0 0 1.5px #e9eef7;clip-path:inset(-2px -2px -2px -0.3px)"></div>
<div style="position:absolute;left:70.80px;top:161.30px;width:31.10px;height:19.10px;box-sizing:border-box;background:#fff;border:1px solid #aeaeae;border-right-color:#c3d5ec;border-bottom-color:#c3d5ec;border-radius:2.5px;box-shadow:0 0 0 1.5px #e9eef7"></div>
<div style="position:absolute;left:103.70px;top:161.30px;width:33.20px;height:19.10px;box-sizing:border-box;background:#fff;border:1px solid #aeaeae;border-right-color:#c3d5ec;border-bottom-color:#c3d5ec;border-radius:2.5px;box-shadow:0 0 0 1.5px #e9eef7"></div>
<div style="position:absolute;left:138.90px;top:161.30px;width:51.10px;height:19.10px;box-sizing:border-box;background:#fff;border:1px solid #a6a6a6;border-radius:2.5px;box-shadow:0 0 0 1.3px #e9eef7;overflow:hidden"><div style="position:absolute;right:0;top:1px;width:13.8px;bottom:1px;background:#e8ecf4"><svg width="13.8" height="15" viewBox="0 0 13.8 15" style="position:absolute;left:0;top:0"><path d="M3.1 6.0 L10.5 6.0 L6.8 9.9 Z" fill="#6c6c86"/></svg></div></div>
<div style="position:absolute;left:191.70px;top:161.30px;width:74.60px;height:19.10px;box-sizing:border-box;background:#fff;border:1px solid #a6a6a6;border-radius:2.5px;box-shadow:0 0 0 1.3px #e9eef7;overflow:hidden"><div style="position:absolute;right:0;top:1px;width:13.8px;bottom:1px;background:#e8ecf4"><svg width="13.8" height="15" viewBox="0 0 13.8 15" style="position:absolute;left:0;top:0"><path d="M3.1 6.0 L10.5 6.0 L6.8 9.9 Z" fill="#6c6c86"/></svg></div></div>
<div style="position:absolute;left:269.70px;top:161.30px;width:74.10px;height:19.10px;box-sizing:border-box;background:#fff;border:1px solid #a6a6a6;border-radius:2.5px;box-shadow:0 0 0 1.3px #e9eef7;overflow:hidden"><div style="position:absolute;right:0;top:1px;width:13.8px;bottom:1px;background:#e8ecf4"><svg width="13.8" height="15" viewBox="0 0 13.8 15" style="position:absolute;left:0;top:0"><path d="M3.1 6.0 L10.5 6.0 L6.8 9.9 Z" fill="#6c6c86"/></svg></div></div>
<div style="position:absolute;left:345.90px;top:161.30px;width:74.10px;height:19.10px;box-sizing:border-box;background:#fff;border:1px solid #a6a6a6;border-radius:2.5px;box-shadow:0 0 0 1.3px #e9eef7;overflow:hidden"><div style="position:absolute;right:0;top:1px;width:13.8px;bottom:1px;background:#e8ecf4"><svg width="13.8" height="15" viewBox="0 0 13.8 15" style="position:absolute;left:0;top:0"><path d="M3.1 6.0 L10.5 6.0 L6.8 9.9 Z" fill="#6c6c86"/></svg></div></div>
<div style="position:absolute;left:421.70px;top:161.30px;width:82.10px;height:19.10px;box-sizing:border-box;background:#fff;border:1px solid #a6a6a6;border-radius:2.5px;box-shadow:0 0 0 1.3px #e9eef7;overflow:hidden"><div style="position:absolute;right:0;top:1px;width:13.8px;bottom:1px;background:#e8ecf4"><svg width="13.8" height="15" viewBox="0 0 13.8 15" style="position:absolute;left:0;top:0"><path d="M3.1 6.0 L10.5 6.0 L6.8 9.9 Z" fill="#6c6c86"/></svg></div></div>
<div style="position:absolute;left:506.90px;top:161.30px;width:85.10px;height:19.10px;box-sizing:border-box;background:#e0ffff;border:1px solid #a6a6a6;border-radius:2.5px;box-shadow:0 0 0 1.3px #e9eef7;overflow:hidden"><div style="position:absolute;right:0;top:1px;width:13.8px;bottom:1px;background:#e8ecf4"><svg width="13.8" height="15" viewBox="0 0 13.8 15" style="position:absolute;left:0;top:0"><path d="M3.1 6.0 L10.5 6.0 L6.8 9.9 Z" fill="#6c6c86"/></svg></div></div>
<div style="position:absolute;left:592.00px;top:161.30px;width:53.20px;height:19.10px;box-sizing:border-box;background:#e0ffff;border:1px solid #a6a6a6;border-radius:2.5px;box-shadow:0 0 0 1.3px #e9eef7;overflow:hidden"><div style="position:absolute;right:0;top:1px;width:13.8px;bottom:1px;background:#e8ecf4"><svg width="13.8" height="15" viewBox="0 0 13.8 15" style="position:absolute;left:0;top:0"><path d="M3.1 6.0 L10.5 6.0 L6.8 9.9 Z" fill="#6c6c86"/></svg></div></div>
<div style="position:absolute;left:646.90px;top:161.30px;width:66.90px;height:19.10px;box-sizing:border-box;background:#e0ffff;border:1px solid #a6a6a6;border-radius:2.5px;box-shadow:0 0 0 1.3px #e9eef7;overflow:hidden"><div style="position:absolute;right:0;top:1px;width:13.8px;bottom:1px;background:#e8ecf4"><svg width="13.8" height="15" viewBox="0 0 13.8 15" style="position:absolute;left:0;top:0"><path d="M3.1 6.0 L10.5 6.0 L6.8 9.9 Z" fill="#6c6c86"/></svg></div></div>
<div style="position:absolute;left:714.80px;top:161.30px;width:55.10px;height:19.10px;box-sizing:border-box;background:#fff;border:1px solid #aeaeae;border-right-color:#c3d5ec;border-bottom-color:#c3d5ec;border-radius:2.5px;box-shadow:0 0 0 1.5px #e9eef7"></div>
<div style="position:absolute;left:771.70px;top:161.30px;width:70.50px;height:19.10px;box-sizing:border-box;background:#fff;border:1px solid #aeaeae;border-right-color:#c3d5ec;border-bottom-color:#c3d5ec;border-radius:2.5px;box-shadow:0 0 0 1.5px #e9eef7"></div>
<div style="position:absolute;left:844.00px;top:161.30px;width:72.10px;height:19.10px;box-sizing:border-box;background:#e0ffff;border:1px solid #a6a6a6;border-radius:2.5px;box-shadow:0 0 0 1.3px #e9eef7;overflow:hidden"><div style="position:absolute;right:0;top:1px;width:13.8px;bottom:1px;background:#e8ecf4"><svg width="13.8" height="15" viewBox="0 0 13.8 15" style="position:absolute;left:0;top:0"><path d="M3.1 6.0 L10.5 6.0 L6.8 9.9 Z" fill="#6c6c86"/></svg></div></div>
<div style="position:absolute;left:916.10px;top:161.30px;width:51.90px;height:19.10px;box-sizing:border-box;background:#e0ffff;border:1px solid #a6a6a6;border-radius:2.5px;box-shadow:0 0 0 1.3px #e9eef7;overflow:hidden"><div style="position:absolute;right:0;top:1px;width:13.8px;bottom:1px;background:#e8ecf4"><svg width="13.8" height="15" viewBox="0 0 13.8 15" style="position:absolute;left:0;top:0"><path d="M3.1 6.0 L10.5 6.0 L6.8 9.9 Z" fill="#6c6c86"/></svg></div></div>
<div style="position:absolute;left:970.20px;top:161.30px;width:55.00px;height:19.10px;box-sizing:border-box;background:#e0ffff;border:1px solid #a6a6a6;border-radius:2.5px;box-shadow:0 0 0 1.3px #e9eef7;overflow:hidden"><div style="position:absolute;right:0;top:1px;width:13.8px;bottom:1px;background:#e8ecf4"><svg width="13.8" height="15" viewBox="0 0 13.8 15" style="position:absolute;left:0;top:0"><path d="M3.1 6.0 L10.5 6.0 L6.8 9.9 Z" fill="#6c6c86"/></svg></div></div>
<div style="position:absolute;left:1027.20px;top:161.30px;width:67.00px;height:19.10px;box-sizing:border-box;background:#e0ffff;border:1px solid #a6a6a6;border-radius:2.5px;box-shadow:0 0 0 1.3px #e9eef7;overflow:hidden"><div style="position:absolute;right:0;top:1px;width:13.8px;bottom:1px;background:#e8ecf4"><svg width="13.8" height="15" viewBox="0 0 13.8 15" style="position:absolute;left:0;top:0"><path d="M3.1 6.0 L10.5 6.0 L6.8 9.9 Z" fill="#6c6c86"/></svg></div></div>
<div style="position:absolute;left:1096.00px;top:161.30px;width:75.80px;height:19.10px;box-sizing:border-box;background:#e0ffff;border:1px solid #a6a6a6;border-radius:2.5px;box-shadow:0 0 0 1.3px #e9eef7;overflow:hidden"><div style="position:absolute;right:0;top:1px;width:13.8px;bottom:1px;background:#e8ecf4"><svg width="13.8" height="15" viewBox="0 0 13.8 15" style="position:absolute;left:0;top:0"><path d="M3.1 6.0 L10.5 6.0 L6.8 9.9 Z" fill="#6c6c86"/></svg></div></div>
<div style="position:absolute;left:1173.70px;top:161.30px;width:64.00px;height:19.10px;box-sizing:border-box;background:#fff;border:1px solid #aeaeae;border-right-color:#c3d5ec;border-bottom-color:#c3d5ec;border-radius:2.5px;box-shadow:0 0 0 1.5px #e9eef7"></div>
<div style="position:absolute;left:1239.80px;top:161.30px;width:90.10px;height:19.10px;box-sizing:border-box;background:#fff;border:1px solid #aeaeae;border-right-color:#c3d5ec;border-bottom-color:#c3d5ec;border-radius:2.5px;box-shadow:0 0 0 1.5px #e9eef7"></div>
<div style="position:absolute;left:1332.20px;top:161.30px;width:75.50px;height:19.10px;box-sizing:border-box;background:#fff;border:1px solid #a6a6a6;border-radius:2.5px;box-shadow:0 0 0 1.3px #e9eef7;overflow:hidden"><div style="position:absolute;right:0;top:1px;width:13.8px;bottom:1px;background:#e8ecf4"><svg width="13.8" height="15" viewBox="0 0 13.8 15" style="position:absolute;left:0;top:0"><path d="M3.1 6.0 L10.5 6.0 L6.8 9.9 Z" fill="#6c6c86"/></svg></div></div>
<div style="position:absolute;left:1409.70px;top:161.30px;width:54.10px;height:19.10px;box-sizing:border-box;background:#fff;border:1px solid #a6a6a6;border-radius:2.5px;box-shadow:0 0 0 1.3px #e9eef7;overflow:hidden"><div style="position:absolute;right:0;top:1px;width:13.8px;bottom:1px;background:#e8ecf4"><svg width="13.8" height="15" viewBox="0 0 13.8 15" style="position:absolute;left:0;top:0"><path d="M3.1 6.0 L10.5 6.0 L6.8 9.9 Z" fill="#6c6c86"/></svg></div></div>
<div style="position:absolute;left:1465.90px;top:161.30px;width:54.30px;height:19.10px;box-sizing:border-box;background:#fff;border:1px solid #a6a6a6;border-radius:2.5px;box-shadow:0 0 0 1.3px #e9eef7;overflow:hidden"><div style="position:absolute;right:0;top:1px;width:13.8px;bottom:1px;background:#e8ecf4"><svg width="13.8" height="15" viewBox="0 0 13.8 15" style="position:absolute;left:0;top:0"><path d="M3.1 6.0 L10.5 6.0 L6.8 9.9 Z" fill="#6c6c86"/></svg></div></div>
<div style="position:absolute;left:30.30px;top:182.63px;width:38.60px;height:19.10px;box-sizing:border-box;background:#fff;border:1px solid #aeaeae;border-right-color:#c3d5ec;border-bottom-color:#c3d5ec;border-radius:2.5px;box-shadow:0 0 0 1.5px #e9eef7;clip-path:inset(-2px -2px -2px -0.3px)"></div>
<div style="position:absolute;left:70.80px;top:182.63px;width:31.10px;height:19.10px;box-sizing:border-box;background:#fff;border:1px solid #aeaeae;border-right-color:#c3d5ec;border-bottom-color:#c3d5ec;border-radius:2.5px;box-shadow:0 0 0 1.5px #e9eef7"></div>
<div style="position:absolute;left:103.70px;top:182.63px;width:33.20px;height:19.10px;box-sizing:border-box;background:#fff;border:1px solid #aeaeae;border-right-color:#c3d5ec;border-bottom-color:#c3d5ec;border-radius:2.5px;box-shadow:0 0 0 1.5px #e9eef7"></div>
<div style="position:absolute;left:138.90px;top:182.63px;width:51.10px;height:19.10px;box-sizing:border-box;background:#fff;border:1px solid #a6a6a6;border-radius:2.5px;box-shadow:0 0 0 1.3px #e9eef7;overflow:hidden"><div style="position:absolute;right:0;top:1px;width:13.8px;bottom:1px;background:#e8ecf4"><svg width="13.8" height="15" viewBox="0 0 13.8 15" style="position:absolute;left:0;top:0"><path d="M3.1 6.0 L10.5 6.0 L6.8 9.9 Z" fill="#a6a6a6"/></svg></div></div>
<div style="position:absolute;left:191.70px;top:182.63px;width:74.60px;height:19.10px;box-sizing:border-box;background:#fff;border:1px solid #a6a6a6;border-radius:2.5px;box-shadow:0 0 0 1.3px #e9eef7;overflow:hidden"><div style="position:absolute;right:0;top:1px;width:13.8px;bottom:1px;background:#e8ecf4"><svg width="13.8" height="15" viewBox="0 0 13.8 15" style="position:absolute;left:0;top:0"><path d="M3.1 6.0 L10.5 6.0 L6.8 9.9 Z" fill="#a6a6a6"/></svg></div></div>
<div style="position:absolute;left:269.70px;top:182.63px;width:74.10px;height:19.10px;box-sizing:border-box;background:#fff;border:1px solid #a6a6a6;border-radius:2.5px;box-shadow:0 0 0 1.3px #e9eef7;overflow:hidden"><div style="position:absolute;right:0;top:1px;width:13.8px;bottom:1px;background:#e8ecf4"><svg width="13.8" height="15" viewBox="0 0 13.8 15" style="position:absolute;left:0;top:0"><path d="M3.1 6.0 L10.5 6.0 L6.8 9.9 Z" fill="#a6a6a6"/></svg></div></div>
<div style="position:absolute;left:345.90px;top:182.63px;width:74.10px;height:19.10px;box-sizing:border-box;background:#fff;border:1px solid #a6a6a6;border-radius:2.5px;box-shadow:0 0 0 1.3px #e9eef7;overflow:hidden"><div style="position:absolute;right:0;top:1px;width:13.8px;bottom:1px;background:#e8ecf4"><svg width="13.8" height="15" viewBox="0 0 13.8 15" style="position:absolute;left:0;top:0"><path d="M3.1 6.0 L10.5 6.0 L6.8 9.9 Z" fill="#a6a6a6"/></svg></div></div>
<div style="position:absolute;left:421.70px;top:182.63px;width:82.10px;height:19.10px;box-sizing:border-box;background:#fff;border:1px solid #a6a6a6;border-radius:2.5px;box-shadow:0 0 0 1.3px #e9eef7;overflow:hidden"><div style="position:absolute;right:0;top:1px;width:13.8px;bottom:1px;background:#e8ecf4"><svg width="13.8" height="15" viewBox="0 0 13.8 15" style="position:absolute;left:0;top:0"><path d="M3.1 6.0 L10.5 6.0 L6.8 9.9 Z" fill="#a6a6a6"/></svg></div></div>
<div style="position:absolute;left:506.90px;top:182.63px;width:85.10px;height:19.10px;box-sizing:border-box;background:#e0ffff;border:1px solid #a6a6a6;border-radius:2.5px;box-shadow:0 0 0 1.3px #e9eef7;overflow:hidden"><div style="position:absolute;right:0;top:1px;width:13.8px;bottom:1px;background:#e8ecf4"><svg width="13.8" height="15" viewBox="0 0 13.8 15" style="position:absolute;left:0;top:0"><path d="M3.1 6.0 L10.5 6.0 L6.8 9.9 Z" fill="#a6a6a6"/></svg></div></div>
<div style="position:absolute;left:592.00px;top:182.63px;width:53.20px;height:19.10px;box-sizing:border-box;background:#e0ffff;border:1px solid #a6a6a6;border-radius:2.5px;box-shadow:0 0 0 1.3px #e9eef7;overflow:hidden"><div style="position:absolute;right:0;top:1px;width:13.8px;bottom:1px;background:#e8ecf4"><svg width="13.8" height="15" viewBox="0 0 13.8 15" style="position:absolute;left:0;top:0"><path d="M3.1 6.0 L10.5 6.0 L6.8 9.9 Z" fill="#a6a6a6"/></svg></div></div>
<div style="position:absolute;left:646.90px;top:182.63px;width:66.90px;height:19.10px;box-sizing:border-box;background:#e0ffff;border:1px solid #a6a6a6;border-radius:2.5px;box-shadow:0 0 0 1.3px #e9eef7;overflow:hidden"><div style="position:absolute;right:0;top:1px;width:13.8px;bottom:1px;background:#e8ecf4"><svg width="13.8" height="15" viewBox="0 0 13.8 15" style="position:absolute;left:0;top:0"><path d="M3.1 6.0 L10.5 6.0 L6.8 9.9 Z" fill="#a6a6a6"/></svg></div></div>
<div style="position:absolute;left:714.80px;top:182.63px;width:55.10px;height:19.10px;box-sizing:border-box;background:#fff;border:1px solid #aeaeae;border-right-color:#c3d5ec;border-bottom-color:#c3d5ec;border-radius:2.5px;box-shadow:0 0 0 1.5px #e9eef7"></div>
<div style="position:absolute;left:771.70px;top:182.63px;width:70.50px;height:19.10px;box-sizing:border-box;background:#fff;border:1px solid #aeaeae;border-right-color:#c3d5ec;border-bottom-color:#c3d5ec;border-radius:2.5px;box-shadow:0 0 0 1.5px #e9eef7"></div>
<div style="position:absolute;left:844.00px;top:182.63px;width:72.10px;height:19.10px;box-sizing:border-box;background:#e0ffff;border:1px solid #a6a6a6;border-radius:2.5px;box-shadow:0 0 0 1.3px #e9eef7;overflow:hidden"><div style="position:absolute;right:0;top:1px;width:13.8px;bottom:1px;background:#e8ecf4"><svg width="13.8" height="15" viewBox="0 0 13.8 15" style="position:absolute;left:0;top:0"><path d="M3.1 6.0 L10.5 6.0 L6.8 9.9 Z" fill="#a6a6a6"/></svg></div></div>
<div style="position:absolute;left:916.10px;top:182.63px;width:51.90px;height:19.10px;box-sizing:border-box;background:#e0ffff;border:1px solid #a6a6a6;border-radius:2.5px;box-shadow:0 0 0 1.3px #e9eef7;overflow:hidden"><div style="position:absolute;right:0;top:1px;width:13.8px;bottom:1px;background:#e8ecf4"><svg width="13.8" height="15" viewBox="0 0 13.8 15" style="position:absolute;left:0;top:0"><path d="M3.1 6.0 L10.5 6.0 L6.8 9.9 Z" fill="#a6a6a6"/></svg></div></div>
<div style="position:absolute;left:970.20px;top:182.63px;width:55.00px;height:19.10px;box-sizing:border-box;background:#e0ffff;border:1px solid #a6a6a6;border-radius:2.5px;box-shadow:0 0 0 1.3px #e9eef7;overflow:hidden"><div style="position:absolute;right:0;top:1px;width:13.8px;bottom:1px;background:#e8ecf4"><svg width="13.8" height="15" viewBox="0 0 13.8 15" style="position:absolute;left:0;top:0"><path d="M3.1 6.0 L10.5 6.0 L6.8 9.9 Z" fill="#a6a6a6"/></svg></div></div>
<div style="position:absolute;left:1027.20px;top:182.63px;width:67.00px;height:19.10px;box-sizing:border-box;background:#e0ffff;border:1px solid #a6a6a6;border-radius:2.5px;box-shadow:0 0 0 1.3px #e9eef7;overflow:hidden"><div style="position:absolute;right:0;top:1px;width:13.8px;bottom:1px;background:#e8ecf4"><svg width="13.8" height="15" viewBox="0 0 13.8 15" style="position:absolute;left:0;top:0"><path d="M3.1 6.0 L10.5 6.0 L6.8 9.9 Z" fill="#a6a6a6"/></svg></div></div>
<div style="position:absolute;left:1096.00px;top:182.63px;width:75.80px;height:19.10px;box-sizing:border-box;background:#e0ffff;border:1px solid #a6a6a6;border-radius:2.5px;box-shadow:0 0 0 1.3px #e9eef7;overflow:hidden"><div style="position:absolute;right:0;top:1px;width:13.8px;bottom:1px;background:#e8ecf4"><svg width="13.8" height="15" viewBox="0 0 13.8 15" style="position:absolute;left:0;top:0"><path d="M3.1 6.0 L10.5 6.0 L6.8 9.9 Z" fill="#a6a6a6"/></svg></div></div>
<div style="position:absolute;left:1173.70px;top:182.63px;width:64.00px;height:19.10px;box-sizing:border-box;background:#fff;border:1px solid #aeaeae;border-right-color:#c3d5ec;border-bottom-color:#c3d5ec;border-radius:2.5px;box-shadow:0 0 0 1.5px #e9eef7"></div>
<div style="position:absolute;left:1239.80px;top:182.63px;width:90.10px;height:19.10px;box-sizing:border-box;background:#fff;border:1px solid #aeaeae;border-right-color:#c3d5ec;border-bottom-color:#c3d5ec;border-radius:2.5px;box-shadow:0 0 0 1.5px #e9eef7"></div>
<div style="position:absolute;left:1332.20px;top:182.63px;width:75.50px;height:19.10px;box-sizing:border-box;background:#fff;border:1px solid #a6a6a6;border-radius:2.5px;box-shadow:0 0 0 1.3px #e9eef7;overflow:hidden"><div style="position:absolute;right:0;top:1px;width:13.8px;bottom:1px;background:#e8ecf4"><svg width="13.8" height="15" viewBox="0 0 13.8 15" style="position:absolute;left:0;top:0"><path d="M3.1 6.0 L10.5 6.0 L6.8 9.9 Z" fill="#a6a6a6"/></svg></div></div>
<div style="position:absolute;left:1409.70px;top:182.63px;width:54.10px;height:19.10px;box-sizing:border-box;background:#fff;border:1px solid #a6a6a6;border-radius:2.5px;box-shadow:0 0 0 1.3px #e9eef7;overflow:hidden"><div style="position:absolute;right:0;top:1px;width:13.8px;bottom:1px;background:#e8ecf4"><svg width="13.8" height="15" viewBox="0 0 13.8 15" style="position:absolute;left:0;top:0"><path d="M3.1 6.0 L10.5 6.0 L6.8 9.9 Z" fill="#a6a6a6"/></svg></div></div>
<div style="position:absolute;left:1465.90px;top:182.63px;width:54.30px;height:19.10px;box-sizing:border-box;background:#fff;border:1px solid #a6a6a6;border-radius:2.5px;box-shadow:0 0 0 1.3px #e9eef7;overflow:hidden"><div style="position:absolute;right:0;top:1px;width:13.8px;bottom:1px;background:#e8ecf4"><svg width="13.8" height="15" viewBox="0 0 13.8 15" style="position:absolute;left:0;top:0"><path d="M3.1 6.0 L10.5 6.0 L6.8 9.9 Z" fill="#a6a6a6"/></svg></div></div>
<div style="position:absolute;left:30.30px;top:203.97px;width:38.60px;height:19.10px;box-sizing:border-box;background:#fff;border:1px solid #aeaeae;border-right-color:#c3d5ec;border-bottom-color:#c3d5ec;border-radius:2.5px;box-shadow:0 0 0 1.5px #e9eef7;clip-path:inset(-2px -2px -2px -0.3px)"></div>
<div style="position:absolute;left:70.80px;top:203.97px;width:31.10px;height:19.10px;box-sizing:border-box;background:#fff;border:1px solid #aeaeae;border-right-color:#c3d5ec;border-bottom-color:#c3d5ec;border-radius:2.5px;box-shadow:0 0 0 1.5px #e9eef7"></div>
<div style="position:absolute;left:103.70px;top:203.97px;width:33.20px;height:19.10px;box-sizing:border-box;background:#fff;border:1px solid #aeaeae;border-right-color:#c3d5ec;border-bottom-color:#c3d5ec;border-radius:2.5px;box-shadow:0 0 0 1.5px #e9eef7"></div>
<div style="position:absolute;left:138.90px;top:203.97px;width:51.10px;height:19.10px;box-sizing:border-box;background:#fff;border:1px solid #a6a6a6;border-radius:2.5px;box-shadow:0 0 0 1.3px #e9eef7;overflow:hidden"><div style="position:absolute;right:0;top:1px;width:13.8px;bottom:1px;background:#e8ecf4"><svg width="13.8" height="15" viewBox="0 0 13.8 15" style="position:absolute;left:0;top:0"><path d="M3.1 6.0 L10.5 6.0 L6.8 9.9 Z" fill="#a6a6a6"/></svg></div></div>
<div style="position:absolute;left:191.70px;top:203.97px;width:74.60px;height:19.10px;box-sizing:border-box;background:#fff;border:1px solid #a6a6a6;border-radius:2.5px;box-shadow:0 0 0 1.3px #e9eef7;overflow:hidden"><div style="position:absolute;right:0;top:1px;width:13.8px;bottom:1px;background:#e8ecf4"><svg width="13.8" height="15" viewBox="0 0 13.8 15" style="position:absolute;left:0;top:0"><path d="M3.1 6.0 L10.5 6.0 L6.8 9.9 Z" fill="#a6a6a6"/></svg></div></div>
<div style="position:absolute;left:269.70px;top:203.97px;width:74.10px;height:19.10px;box-sizing:border-box;background:#fff;border:1px solid #a6a6a6;border-radius:2.5px;box-shadow:0 0 0 1.3px #e9eef7;overflow:hidden"><div style="position:absolute;right:0;top:1px;width:13.8px;bottom:1px;background:#e8ecf4"><svg width="13.8" height="15" viewBox="0 0 13.8 15" style="position:absolute;left:0;top:0"><path d="M3.1 6.0 L10.5 6.0 L6.8 9.9 Z" fill="#a6a6a6"/></svg></div></div>
<div style="position:absolute;left:345.90px;top:203.97px;width:74.10px;height:19.10px;box-sizing:border-box;background:#fff;border:1px solid #a6a6a6;border-radius:2.5px;box-shadow:0 0 0 1.3px #e9eef7;overflow:hidden"><div style="position:absolute;right:0;top:1px;width:13.8px;bottom:1px;background:#e8ecf4"><svg width="13.8" height="15" viewBox="0 0 13.8 15" style="position:absolute;left:0;top:0"><path d="M3.1 6.0 L10.5 6.0 L6.8 9.9 Z" fill="#a6a6a6"/></svg></div></div>
<div style="position:absolute;left:421.70px;top:203.97px;width:82.10px;height:19.10px;box-sizing:border-box;background:#fff;border:1px solid #a6a6a6;border-radius:2.5px;box-shadow:0 0 0 1.3px #e9eef7;overflow:hidden"><div style="position:absolute;right:0;top:1px;width:13.8px;bottom:1px;background:#e8ecf4"><svg width="13.8" height="15" viewBox="0 0 13.8 15" style="position:absolute;left:0;top:0"><path d="M3.1 6.0 L10.5 6.0 L6.8 9.9 Z" fill="#a6a6a6"/></svg></div></div>
<div style="position:absolute;left:506.90px;top:203.97px;width:85.10px;height:19.10px;box-sizing:border-box;background:#e0ffff;border:1px solid #a6a6a6;border-radius:2.5px;box-shadow:0 0 0 1.3px #e9eef7;overflow:hidden"><div style="position:absolute;right:0;top:1px;width:13.8px;bottom:1px;background:#e8ecf4"><svg width="13.8" height="15" viewBox="0 0 13.8 15" style="position:absolute;left:0;top:0"><path d="M3.1 6.0 L10.5 6.0 L6.8 9.9 Z" fill="#a6a6a6"/></svg></div></div>
<div style="position:absolute;left:592.00px;top:203.97px;width:53.20px;height:19.10px;box-sizing:border-box;background:#e0ffff;border:1px solid #a6a6a6;border-radius:2.5px;box-shadow:0 0 0 1.3px #e9eef7;overflow:hidden"><div style="position:absolute;right:0;top:1px;width:13.8px;bottom:1px;background:#e8ecf4"><svg width="13.8" height="15" viewBox="0 0 13.8 15" style="position:absolute;left:0;top:0"><path d="M3.1 6.0 L10.5 6.0 L6.8 9.9 Z" fill="#a6a6a6"/></svg></div></div>
<div style="position:absolute;left:646.90px;top:203.97px;width:66.90px;height:19.10px;box-sizing:border-box;background:#e0ffff;border:1px solid #a6a6a6;border-radius:2.5px;box-shadow:0 0 0 1.3px #e9eef7;overflow:hidden"><div style="position:absolute;right:0;top:1px;width:13.8px;bottom:1px;background:#e8ecf4"><svg width="13.8" height="15" viewBox="0 0 13.8 15" style="position:absolute;left:0;top:0"><path d="M3.1 6.0 L10.5 6.0 L6.8 9.9 Z" fill="#a6a6a6"/></svg></div></div>
<div style="position:absolute;left:714.80px;top:203.97px;width:55.10px;height:19.10px;box-sizing:border-box;background:#fff;border:1px solid #aeaeae;border-right-color:#c3d5ec;border-bottom-color:#c3d5ec;border-radius:2.5px;box-shadow:0 0 0 1.5px #e9eef7"></div>
<div style="position:absolute;left:771.70px;top:203.97px;width:70.50px;height:19.10px;box-sizing:border-box;background:#fff;border:1px solid #aeaeae;border-right-color:#c3d5ec;border-bottom-color:#c3d5ec;border-radius:2.5px;box-shadow:0 0 0 1.5px #e9eef7"></div>
<div style="position:absolute;left:844.00px;top:203.97px;width:72.10px;height:19.10px;box-sizing:border-box;background:#e0ffff;border:1px solid #a6a6a6;border-radius:2.5px;box-shadow:0 0 0 1.3px #e9eef7;overflow:hidden"><div style="position:absolute;right:0;top:1px;width:13.8px;bottom:1px;background:#e8ecf4"><svg width="13.8" height="15" viewBox="0 0 13.8 15" style="position:absolute;left:0;top:0"><path d="M3.1 6.0 L10.5 6.0 L6.8 9.9 Z" fill="#a6a6a6"/></svg></div></div>
<div style="position:absolute;left:916.10px;top:203.97px;width:51.90px;height:19.10px;box-sizing:border-box;background:#e0ffff;border:1px solid #a6a6a6;border-radius:2.5px;box-shadow:0 0 0 1.3px #e9eef7;overflow:hidden"><div style="position:absolute;right:0;top:1px;width:13.8px;bottom:1px;background:#e8ecf4"><svg width="13.8" height="15" viewBox="0 0 13.8 15" style="position:absolute;left:0;top:0"><path d="M3.1 6.0 L10.5 6.0 L6.8 9.9 Z" fill="#a6a6a6"/></svg></div></div>
<div style="position:absolute;left:970.20px;top:203.97px;width:55.00px;height:19.10px;box-sizing:border-box;background:#e0ffff;border:1px solid #a6a6a6;border-radius:2.5px;box-shadow:0 0 0 1.3px #e9eef7;overflow:hidden"><div style="position:absolute;right:0;top:1px;width:13.8px;bottom:1px;background:#e8ecf4"><svg width="13.8" height="15" viewBox="0 0 13.8 15" style="position:absolute;left:0;top:0"><path d="M3.1 6.0 L10.5 6.0 L6.8 9.9 Z" fill="#a6a6a6"/></svg></div></div>
<div style="position:absolute;left:1027.20px;top:203.97px;width:67.00px;height:19.10px;box-sizing:border-box;background:#e0ffff;border:1px solid #a6a6a6;border-radius:2.5px;box-shadow:0 0 0 1.3px #e9eef7;overflow:hidden"><div style="position:absolute;right:0;top:1px;width:13.8px;bottom:1px;background:#e8ecf4"><svg width="13.8" height="15" viewBox="0 0 13.8 15" style="position:absolute;left:0;top:0"><path d="M3.1 6.0 L10.5 6.0 L6.8 9.9 Z" fill="#a6a6a6"/></svg></div></div>
<div style="position:absolute;left:1096.00px;top:203.97px;width:75.80px;height:19.10px;box-sizing:border-box;background:#e0ffff;border:1px solid #a6a6a6;border-radius:2.5px;box-shadow:0 0 0 1.3px #e9eef7;overflow:hidden"><div style="position:absolute;right:0;top:1px;width:13.8px;bottom:1px;background:#e8ecf4"><svg width="13.8" height="15" viewBox="0 0 13.8 15" style="position:absolute;left:0;top:0"><path d="M3.1 6.0 L10.5 6.0 L6.8 9.9 Z" fill="#a6a6a6"/></svg></div></div>
<div style="position:absolute;left:1173.70px;top:203.97px;width:64.00px;height:19.10px;box-sizing:border-box;background:#fff;border:1px solid #aeaeae;border-right-color:#c3d5ec;border-bottom-color:#c3d5ec;border-radius:2.5px;box-shadow:0 0 0 1.5px #e9eef7"></div>
<div style="position:absolute;left:1239.80px;top:203.97px;width:90.10px;height:19.10px;box-sizing:border-box;background:#fff;border:1px solid #aeaeae;border-right-color:#c3d5ec;border-bottom-color:#c3d5ec;border-radius:2.5px;box-shadow:0 0 0 1.5px #e9eef7"></div>
<div style="position:absolute;left:1332.20px;top:203.97px;width:75.50px;height:19.10px;box-sizing:border-box;background:#fff;border:1px solid #a6a6a6;border-radius:2.5px;box-shadow:0 0 0 1.3px #e9eef7;overflow:hidden"><div style="position:absolute;right:0;top:1px;width:13.8px;bottom:1px;background:#e8ecf4"><svg width="13.8" height="15" viewBox="0 0 13.8 15" style="position:absolute;left:0;top:0"><path d="M3.1 6.0 L10.5 6.0 L6.8 9.9 Z" fill="#a6a6a6"/></svg></div></div>
<div style="position:absolute;left:1409.70px;top:203.97px;width:54.10px;height:19.10px;box-sizing:border-box;background:#fff;border:1px solid #a6a6a6;border-radius:2.5px;box-shadow:0 0 0 1.3px #e9eef7;overflow:hidden"><div style="position:absolute;right:0;top:1px;width:13.8px;bottom:1px;background:#e8ecf4"><svg width="13.8" height="15" viewBox="0 0 13.8 15" style="position:absolute;left:0;top:0"><path d="M3.1 6.0 L10.5 6.0 L6.8 9.9 Z" fill="#a6a6a6"/></svg></div></div>
<div style="position:absolute;left:1465.90px;top:203.97px;width:54.30px;height:19.10px;box-sizing:border-box;background:#fff;border:1px solid #a6a6a6;border-radius:2.5px;box-shadow:0 0 0 1.3px #e9eef7;overflow:hidden"><div style="position:absolute;right:0;top:1px;width:13.8px;bottom:1px;background:#e8ecf4"><svg width="13.8" height="15" viewBox="0 0 13.8 15" style="position:absolute;left:0;top:0"><path d="M3.1 6.0 L10.5 6.0 L6.8 9.9 Z" fill="#a6a6a6"/></svg></div></div>
<div style="position:absolute;left:30.30px;top:225.30px;width:38.60px;height:19.10px;box-sizing:border-box;background:#fff;border:1px solid #aeaeae;border-right-color:#c3d5ec;border-bottom-color:#c3d5ec;border-radius:2.5px;box-shadow:0 0 0 1.5px #e9eef7;clip-path:inset(-2px -2px -2px -0.3px)"></div>
<div style="position:absolute;left:70.80px;top:225.30px;width:31.10px;height:19.10px;box-sizing:border-box;background:#fff;border:1px solid #aeaeae;border-right-color:#c3d5ec;border-bottom-color:#c3d5ec;border-radius:2.5px;box-shadow:0 0 0 1.5px #e9eef7"></div>
<div style="position:absolute;left:103.70px;top:225.30px;width:33.20px;height:19.10px;box-sizing:border-box;background:#fff;border:1px solid #aeaeae;border-right-color:#c3d5ec;border-bottom-color:#c3d5ec;border-radius:2.5px;box-shadow:0 0 0 1.5px #e9eef7"></div>
<div style="position:absolute;left:138.90px;top:225.30px;width:51.10px;height:19.10px;box-sizing:border-box;background:#fff;border:1px solid #a6a6a6;border-radius:2.5px;box-shadow:0 0 0 1.3px #e9eef7;overflow:hidden"><div style="position:absolute;right:0;top:1px;width:13.8px;bottom:1px;background:#e8ecf4"><svg width="13.8" height="15" viewBox="0 0 13.8 15" style="position:absolute;left:0;top:0"><path d="M3.1 6.0 L10.5 6.0 L6.8 9.9 Z" fill="#a6a6a6"/></svg></div></div>
<div style="position:absolute;left:191.70px;top:225.30px;width:74.60px;height:19.10px;box-sizing:border-box;background:#fff;border:1px solid #a6a6a6;border-radius:2.5px;box-shadow:0 0 0 1.3px #e9eef7;overflow:hidden"><div style="position:absolute;right:0;top:1px;width:13.8px;bottom:1px;background:#e8ecf4"><svg width="13.8" height="15" viewBox="0 0 13.8 15" style="position:absolute;left:0;top:0"><path d="M3.1 6.0 L10.5 6.0 L6.8 9.9 Z" fill="#a6a6a6"/></svg></div></div>
<div style="position:absolute;left:269.70px;top:225.30px;width:74.10px;height:19.10px;box-sizing:border-box;background:#fff;border:1px solid #a6a6a6;border-radius:2.5px;box-shadow:0 0 0 1.3px #e9eef7;overflow:hidden"><div style="position:absolute;right:0;top:1px;width:13.8px;bottom:1px;background:#e8ecf4"><svg width="13.8" height="15" viewBox="0 0 13.8 15" style="position:absolute;left:0;top:0"><path d="M3.1 6.0 L10.5 6.0 L6.8 9.9 Z" fill="#a6a6a6"/></svg></div></div>
<div style="position:absolute;left:345.90px;top:225.30px;width:74.10px;height:19.10px;box-sizing:border-box;background:#fff;border:1px solid #a6a6a6;border-radius:2.5px;box-shadow:0 0 0 1.3px #e9eef7;overflow:hidden"><div style="position:absolute;right:0;top:1px;width:13.8px;bottom:1px;background:#e8ecf4"><svg width="13.8" height="15" viewBox="0 0 13.8 15" style="position:absolute;left:0;top:0"><path d="M3.1 6.0 L10.5 6.0 L6.8 9.9 Z" fill="#a6a6a6"/></svg></div></div>
<div style="position:absolute;left:421.70px;top:225.30px;width:82.10px;height:19.10px;box-sizing:border-box;background:#fff;border:1px solid #a6a6a6;border-radius:2.5px;box-shadow:0 0 0 1.3px #e9eef7;overflow:hidden"><div style="position:absolute;right:0;top:1px;width:13.8px;bottom:1px;background:#e8ecf4"><svg width="13.8" height="15" viewBox="0 0 13.8 15" style="position:absolute;left:0;top:0"><path d="M3.1 6.0 L10.5 6.0 L6.8 9.9 Z" fill="#a6a6a6"/></svg></div></div>
<div style="position:absolute;left:506.90px;top:225.30px;width:85.10px;height:19.10px;box-sizing:border-box;background:#e0ffff;border:1px solid #a6a6a6;border-radius:2.5px;box-shadow:0 0 0 1.3px #e9eef7;overflow:hidden"><div style="position:absolute;right:0;top:1px;width:13.8px;bottom:1px;background:#e8ecf4"><svg width="13.8" height="15" viewBox="0 0 13.8 15" style="position:absolute;left:0;top:0"><path d="M3.1 6.0 L10.5 6.0 L6.8 9.9 Z" fill="#a6a6a6"/></svg></div></div>
<div style="position:absolute;left:592.00px;top:225.30px;width:53.20px;height:19.10px;box-sizing:border-box;background:#e0ffff;border:1px solid #a6a6a6;border-radius:2.5px;box-shadow:0 0 0 1.3px #e9eef7;overflow:hidden"><div style="position:absolute;right:0;top:1px;width:13.8px;bottom:1px;background:#e8ecf4"><svg width="13.8" height="15" viewBox="0 0 13.8 15" style="position:absolute;left:0;top:0"><path d="M3.1 6.0 L10.5 6.0 L6.8 9.9 Z" fill="#a6a6a6"/></svg></div></div>
<div style="position:absolute;left:646.90px;top:225.30px;width:66.90px;height:19.10px;box-sizing:border-box;background:#e0ffff;border:1px solid #a6a6a6;border-radius:2.5px;box-shadow:0 0 0 1.3px #e9eef7;overflow:hidden"><div style="position:absolute;right:0;top:1px;width:13.8px;bottom:1px;background:#e8ecf4"><svg width="13.8" height="15" viewBox="0 0 13.8 15" style="position:absolute;left:0;top:0"><path d="M3.1 6.0 L10.5 6.0 L6.8 9.9 Z" fill="#a6a6a6"/></svg></div></div>
<div style="position:absolute;left:714.80px;top:225.30px;width:55.10px;height:19.10px;box-sizing:border-box;background:#fff;border:1px solid #aeaeae;border-right-color:#c3d5ec;border-bottom-color:#c3d5ec;border-radius:2.5px;box-shadow:0 0 0 1.5px #e9eef7"></div>
<div style="position:absolute;left:771.70px;top:225.30px;width:70.50px;height:19.10px;box-sizing:border-box;background:#fff;border:1px solid #aeaeae;border-right-color:#c3d5ec;border-bottom-color:#c3d5ec;border-radius:2.5px;box-shadow:0 0 0 1.5px #e9eef7"></div>
<div style="position:absolute;left:844.00px;top:225.30px;width:72.10px;height:19.10px;box-sizing:border-box;background:#e0ffff;border:1px solid #a6a6a6;border-radius:2.5px;box-shadow:0 0 0 1.3px #e9eef7;overflow:hidden"><div style="position:absolute;right:0;top:1px;width:13.8px;bottom:1px;background:#e8ecf4"><svg width="13.8" height="15" viewBox="0 0 13.8 15" style="position:absolute;left:0;top:0"><path d="M3.1 6.0 L10.5 6.0 L6.8 9.9 Z" fill="#a6a6a6"/></svg></div></div>
<div style="position:absolute;left:916.10px;top:225.30px;width:51.90px;height:19.10px;box-sizing:border-box;background:#e0ffff;border:1px solid #a6a6a6;border-radius:2.5px;box-shadow:0 0 0 1.3px #e9eef7;overflow:hidden"><div style="position:absolute;right:0;top:1px;width:13.8px;bottom:1px;background:#e8ecf4"><svg width="13.8" height="15" viewBox="0 0 13.8 15" style="position:absolute;left:0;top:0"><path d="M3.1 6.0 L10.5 6.0 L6.8 9.9 Z" fill="#a6a6a6"/></svg></div></div>
<div style="position:absolute;left:970.20px;top:225.30px;width:55.00px;height:19.10px;box-sizing:border-box;background:#e0ffff;border:1px solid #a6a6a6;border-radius:2.5px;box-shadow:0 0 0 1.3px #e9eef7;overflow:hidden"><div style="position:absolute;right:0;top:1px;width:13.8px;bottom:1px;background:#e8ecf4"><svg width="13.8" height="15" viewBox="0 0 13.8 15" style="position:absolute;left:0;top:0"><path d="M3.1 6.0 L10.5 6.0 L6.8 9.9 Z" fill="#a6a6a6"/></svg></div></div>
<div style="position:absolute;left:1027.20px;top:225.30px;width:67.00px;height:19.10px;box-sizing:border-box;background:#e0ffff;border:1px solid #a6a6a6;border-radius:2.5px;box-shadow:0 0 0 1.3px #e9eef7;overflow:hidden"><div style="position:absolute;right:0;top:1px;width:13.8px;bottom:1px;background:#e8ecf4"><svg width="13.8" height="15" viewBox="0 0 13.8 15" style="position:absolute;left:0;top:0"><path d="M3.1 6.0 L10.5 6.0 L6.8 9.9 Z" fill="#a6a6a6"/></svg></div></div>
<div style="position:absolute;left:1096.00px;top:225.30px;width:75.80px;height:19.10px;box-sizing:border-box;background:#e0ffff;border:1px solid #a6a6a6;border-radius:2.5px;box-shadow:0 0 0 1.3px #e9eef7;overflow:hidden"><div style="position:absolute;right:0;top:1px;width:13.8px;bottom:1px;background:#e8ecf4"><svg width="13.8" height="15" viewBox="0 0 13.8 15" style="position:absolute;left:0;top:0"><path d="M3.1 6.0 L10.5 6.0 L6.8 9.9 Z" fill="#a6a6a6"/></svg></div></div>
<div style="position:absolute;left:1173.70px;top:225.30px;width:64.00px;height:19.10px;box-sizing:border-box;background:#fff;border:1px solid #aeaeae;border-right-color:#c3d5ec;border-bottom-color:#c3d5ec;border-radius:2.5px;box-shadow:0 0 0 1.5px #e9eef7"></div>
<div style="position:absolute;left:1239.80px;top:225.30px;width:90.10px;height:19.10px;box-sizing:border-box;background:#fff;border:1px solid #aeaeae;border-right-color:#c3d5ec;border-bottom-color:#c3d5ec;border-radius:2.5px;box-shadow:0 0 0 1.5px #e9eef7"></div>
<div style="position:absolute;left:1332.20px;top:225.30px;width:75.50px;height:19.10px;box-sizing:border-box;background:#fff;border:1px solid #a6a6a6;border-radius:2.5px;box-shadow:0 0 0 1.3px #e9eef7;overflow:hidden"><div style="position:absolute;right:0;top:1px;width:13.8px;bottom:1px;background:#e8ecf4"><svg width="13.8" height="15" viewBox="0 0 13.8 15" style="position:absolute;left:0;top:0"><path d="M3.1 6.0 L10.5 6.0 L6.8 9.9 Z" fill="#a6a6a6"/></svg></div></div>
<div style="position:absolute;left:1409.70px;top:225.30px;width:54.10px;height:19.10px;box-sizing:border-box;background:#fff;border:1px solid #a6a6a6;border-radius:2.5px;box-shadow:0 0 0 1.3px #e9eef7;overflow:hidden"><div style="position:absolute;right:0;top:1px;width:13.8px;bottom:1px;background:#e8ecf4"><svg width="13.8" height="15" viewBox="0 0 13.8 15" style="position:absolute;left:0;top:0"><path d="M3.1 6.0 L10.5 6.0 L6.8 9.9 Z" fill="#a6a6a6"/></svg></div></div>
<div style="position:absolute;left:1465.90px;top:225.30px;width:54.30px;height:19.10px;box-sizing:border-box;background:#fff;border:1px solid #a6a6a6;border-radius:2.5px;box-shadow:0 0 0 1.3px #e9eef7;overflow:hidden"><div style="position:absolute;right:0;top:1px;width:13.8px;bottom:1px;background:#e8ecf4"><svg width="13.8" height="15" viewBox="0 0 13.8 15" style="position:absolute;left:0;top:0"><path d="M3.1 6.0 L10.5 6.0 L6.8 9.9 Z" fill="#a6a6a6"/></svg></div></div>
<div style="position:absolute;left:30.30px;top:246.63px;width:38.60px;height:19.10px;box-sizing:border-box;background:#fff;border:1px solid #aeaeae;border-right-color:#c3d5ec;border-bottom-color:#c3d5ec;border-radius:2.5px;box-shadow:0 0 0 1.5px #e9eef7;clip-path:inset(-2px -2px -2px -0.3px)"></div>
<div style="position:absolute;left:70.80px;top:246.63px;width:31.10px;height:19.10px;box-sizing:border-box;background:#fff;border:1px solid #aeaeae;border-right-color:#c3d5ec;border-bottom-color:#c3d5ec;border-radius:2.5px;box-shadow:0 0 0 1.5px #e9eef7"></div>
<div style="position:absolute;left:103.70px;top:246.63px;width:33.20px;height:19.10px;box-sizing:border-box;background:#fff;border:1px solid #aeaeae;border-right-color:#c3d5ec;border-bottom-color:#c3d5ec;border-radius:2.5px;box-shadow:0 0 0 1.5px #e9eef7"></div>
<div style="position:absolute;left:138.90px;top:246.63px;width:51.10px;height:19.10px;box-sizing:border-box;background:#fff;border:1px solid #a6a6a6;border-radius:2.5px;box-shadow:0 0 0 1.3px #e9eef7;overflow:hidden"><div style="position:absolute;right:0;top:1px;width:13.8px;bottom:1px;background:#e8ecf4"><svg width="13.8" height="15" viewBox="0 0 13.8 15" style="position:absolute;left:0;top:0"><path d="M3.1 6.0 L10.5 6.0 L6.8 9.9 Z" fill="#a6a6a6"/></svg></div></div>
<div style="position:absolute;left:191.70px;top:246.63px;width:74.60px;height:19.10px;box-sizing:border-box;background:#fff;border:1px solid #a6a6a6;border-radius:2.5px;box-shadow:0 0 0 1.3px #e9eef7;overflow:hidden"><div style="position:absolute;right:0;top:1px;width:13.8px;bottom:1px;background:#e8ecf4"><svg width="13.8" height="15" viewBox="0 0 13.8 15" style="position:absolute;left:0;top:0"><path d="M3.1 6.0 L10.5 6.0 L6.8 9.9 Z" fill="#a6a6a6"/></svg></div></div>
<div style="position:absolute;left:269.70px;top:246.63px;width:74.10px;height:19.10px;box-sizing:border-box;background:#fff;border:1px solid #a6a6a6;border-radius:2.5px;box-shadow:0 0 0 1.3px #e9eef7;overflow:hidden"><div style="position:absolute;right:0;top:1px;width:13.8px;bottom:1px;background:#e8ecf4"><svg width="13.8" height="15" viewBox="0 0 13.8 15" style="position:absolute;left:0;top:0"><path d="M3.1 6.0 L10.5 6.0 L6.8 9.9 Z" fill="#a6a6a6"/></svg></div></div>
<div style="position:absolute;left:345.90px;top:246.63px;width:74.10px;height:19.10px;box-sizing:border-box;background:#fff;border:1px solid #a6a6a6;border-radius:2.5px;box-shadow:0 0 0 1.3px #e9eef7;overflow:hidden"><div style="position:absolute;right:0;top:1px;width:13.8px;bottom:1px;background:#e8ecf4"><svg width="13.8" height="15" viewBox="0 0 13.8 15" style="position:absolute;left:0;top:0"><path d="M3.1 6.0 L10.5 6.0 L6.8 9.9 Z" fill="#a6a6a6"/></svg></div></div>
<div style="position:absolute;left:421.70px;top:246.63px;width:82.10px;height:19.10px;box-sizing:border-box;background:#fff;border:1px solid #a6a6a6;border-radius:2.5px;box-shadow:0 0 0 1.3px #e9eef7;overflow:hidden"><div style="position:absolute;right:0;top:1px;width:13.8px;bottom:1px;background:#e8ecf4"><svg width="13.8" height="15" viewBox="0 0 13.8 15" style="position:absolute;left:0;top:0"><path d="M3.1 6.0 L10.5 6.0 L6.8 9.9 Z" fill="#a6a6a6"/></svg></div></div>
<div style="position:absolute;left:506.90px;top:246.63px;width:85.10px;height:19.10px;box-sizing:border-box;background:#e0ffff;border:1px solid #a6a6a6;border-radius:2.5px;box-shadow:0 0 0 1.3px #e9eef7;overflow:hidden"><div style="position:absolute;right:0;top:1px;width:13.8px;bottom:1px;background:#e8ecf4"><svg width="13.8" height="15" viewBox="0 0 13.8 15" style="position:absolute;left:0;top:0"><path d="M3.1 6.0 L10.5 6.0 L6.8 9.9 Z" fill="#a6a6a6"/></svg></div></div>
<div style="position:absolute;left:592.00px;top:246.63px;width:53.20px;height:19.10px;box-sizing:border-box;background:#e0ffff;border:1px solid #a6a6a6;border-radius:2.5px;box-shadow:0 0 0 1.3px #e9eef7;overflow:hidden"><div style="position:absolute;right:0;top:1px;width:13.8px;bottom:1px;background:#e8ecf4"><svg width="13.8" height="15" viewBox="0 0 13.8 15" style="position:absolute;left:0;top:0"><path d="M3.1 6.0 L10.5 6.0 L6.8 9.9 Z" fill="#a6a6a6"/></svg></div></div>
<div style="position:absolute;left:646.90px;top:246.63px;width:66.90px;height:19.10px;box-sizing:border-box;background:#e0ffff;border:1px solid #a6a6a6;border-radius:2.5px;box-shadow:0 0 0 1.3px #e9eef7;overflow:hidden"><div style="position:absolute;right:0;top:1px;width:13.8px;bottom:1px;background:#e8ecf4"><svg width="13.8" height="15" viewBox="0 0 13.8 15" style="position:absolute;left:0;top:0"><path d="M3.1 6.0 L10.5 6.0 L6.8 9.9 Z" fill="#a6a6a6"/></svg></div></div>
<div style="position:absolute;left:714.80px;top:246.63px;width:55.10px;height:19.10px;box-sizing:border-box;background:#fff;border:1px solid #aeaeae;border-right-color:#c3d5ec;border-bottom-color:#c3d5ec;border-radius:2.5px;box-shadow:0 0 0 1.5px #e9eef7"></div>
<div style="position:absolute;left:771.70px;top:246.63px;width:70.50px;height:19.10px;box-sizing:border-box;background:#fff;border:1px solid #aeaeae;border-right-color:#c3d5ec;border-bottom-color:#c3d5ec;border-radius:2.5px;box-shadow:0 0 0 1.5px #e9eef7"></div>
<div style="position:absolute;left:844.00px;top:246.63px;width:72.10px;height:19.10px;box-sizing:border-box;background:#e0ffff;border:1px solid #a6a6a6;border-radius:2.5px;box-shadow:0 0 0 1.3px #e9eef7;overflow:hidden"><div style="position:absolute;right:0;top:1px;width:13.8px;bottom:1px;background:#e8ecf4"><svg width="13.8" height="15" viewBox="0 0 13.8 15" style="position:absolute;left:0;top:0"><path d="M3.1 6.0 L10.5 6.0 L6.8 9.9 Z" fill="#a6a6a6"/></svg></div></div>
<div style="position:absolute;left:916.10px;top:246.63px;width:51.90px;height:19.10px;box-sizing:border-box;background:#e0ffff;border:1px solid #a6a6a6;border-radius:2.5px;box-shadow:0 0 0 1.3px #e9eef7;overflow:hidden"><div style="position:absolute;right:0;top:1px;width:13.8px;bottom:1px;background:#e8ecf4"><svg width="13.8" height="15" viewBox="0 0 13.8 15" style="position:absolute;left:0;top:0"><path d="M3.1 6.0 L10.5 6.0 L6.8 9.9 Z" fill="#a6a6a6"/></svg></div></div>
<div style="position:absolute;left:970.20px;top:246.63px;width:55.00px;height:19.10px;box-sizing:border-box;background:#e0ffff;border:1px solid #a6a6a6;border-radius:2.5px;box-shadow:0 0 0 1.3px #e9eef7;overflow:hidden"><div style="position:absolute;right:0;top:1px;width:13.8px;bottom:1px;background:#e8ecf4"><svg width="13.8" height="15" viewBox="0 0 13.8 15" style="position:absolute;left:0;top:0"><path d="M3.1 6.0 L10.5 6.0 L6.8 9.9 Z" fill="#a6a6a6"/></svg></div></div>
<div style="position:absolute;left:1027.20px;top:246.63px;width:67.00px;height:19.10px;box-sizing:border-box;background:#e0ffff;border:1px solid #a6a6a6;border-radius:2.5px;box-shadow:0 0 0 1.3px #e9eef7;overflow:hidden"><div style="position:absolute;right:0;top:1px;width:13.8px;bottom:1px;background:#e8ecf4"><svg width="13.8" height="15" viewBox="0 0 13.8 15" style="position:absolute;left:0;top:0"><path d="M3.1 6.0 L10.5 6.0 L6.8 9.9 Z" fill="#a6a6a6"/></svg></div></div>
<div style="position:absolute;left:1096.00px;top:246.63px;width:75.80px;height:19.10px;box-sizing:border-box;background:#e0ffff;border:1px solid #a6a6a6;border-radius:2.5px;box-shadow:0 0 0 1.3px #e9eef7;overflow:hidden"><div style="position:absolute;right:0;top:1px;width:13.8px;bottom:1px;background:#e8ecf4"><svg width="13.8" height="15" viewBox="0 0 13.8 15" style="position:absolute;left:0;top:0"><path d="M3.1 6.0 L10.5 6.0 L6.8 9.9 Z" fill="#a6a6a6"/></svg></div></div>
<div style="position:absolute;left:1173.70px;top:246.63px;width:64.00px;height:19.10px;box-sizing:border-box;background:#fff;border:1px solid #aeaeae;border-right-color:#c3d5ec;border-bottom-color:#c3d5ec;border-radius:2.5px;box-shadow:0 0 0 1.5px #e9eef7"></div>
<div style="position:absolute;left:1239.80px;top:246.63px;width:90.10px;height:19.10px;box-sizing:border-box;background:#fff;border:1px solid #aeaeae;border-right-color:#c3d5ec;border-bottom-color:#c3d5ec;border-radius:2.5px;box-shadow:0 0 0 1.5px #e9eef7"></div>
<div style="position:absolute;left:1332.20px;top:246.63px;width:75.50px;height:19.10px;box-sizing:border-box;background:#fff;border:1px solid #a6a6a6;border-radius:2.5px;box-shadow:0 0 0 1.3px #e9eef7;overflow:hidden"><div style="position:absolute;right:0;top:1px;width:13.8px;bottom:1px;background:#e8ecf4"><svg width="13.8" height="15" viewBox="0 0 13.8 15" style="position:absolute;left:0;top:0"><path d="M3.1 6.0 L10.5 6.0 L6.8 9.9 Z" fill="#a6a6a6"/></svg></div></div>
<div style="position:absolute;left:1409.70px;top:246.63px;width:54.10px;height:19.10px;box-sizing:border-box;background:#fff;border:1px solid #a6a6a6;border-radius:2.5px;box-shadow:0 0 0 1.3px #e9eef7;overflow:hidden"><div style="position:absolute;right:0;top:1px;width:13.8px;bottom:1px;background:#e8ecf4"><svg width="13.8" height="15" viewBox="0 0 13.8 15" style="position:absolute;left:0;top:0"><path d="M3.1 6.0 L10.5 6.0 L6.8 9.9 Z" fill="#a6a6a6"/></svg></div></div>
<div style="position:absolute;left:1465.90px;top:246.63px;width:54.30px;height:19.10px;box-sizing:border-box;background:#fff;border:1px solid #a6a6a6;border-radius:2.5px;box-shadow:0 0 0 1.3px #e9eef7;overflow:hidden"><div style="position:absolute;right:0;top:1px;width:13.8px;bottom:1px;background:#e8ecf4"><svg width="13.8" height="15" viewBox="0 0 13.8 15" style="position:absolute;left:0;top:0"><path d="M3.1 6.0 L10.5 6.0 L6.8 9.9 Z" fill="#a6a6a6"/></svg></div></div>
<div style="position:absolute;left:30.30px;top:267.97px;width:38.60px;height:19.10px;box-sizing:border-box;background:#fff;border:1px solid #aeaeae;border-right-color:#c3d5ec;border-bottom-color:#c3d5ec;border-radius:2.5px;box-shadow:0 0 0 1.5px #e9eef7;clip-path:inset(-2px -2px -2px -0.3px)"></div>
<div style="position:absolute;left:70.80px;top:267.97px;width:31.10px;height:19.10px;box-sizing:border-box;background:#fff;border:1px solid #aeaeae;border-right-color:#c3d5ec;border-bottom-color:#c3d5ec;border-radius:2.5px;box-shadow:0 0 0 1.5px #e9eef7"></div>
<div style="position:absolute;left:103.70px;top:267.97px;width:33.20px;height:19.10px;box-sizing:border-box;background:#fff;border:1px solid #aeaeae;border-right-color:#c3d5ec;border-bottom-color:#c3d5ec;border-radius:2.5px;box-shadow:0 0 0 1.5px #e9eef7"></div>
<div style="position:absolute;left:138.90px;top:267.97px;width:51.10px;height:19.10px;box-sizing:border-box;background:#fff;border:1px solid #a6a6a6;border-radius:2.5px;box-shadow:0 0 0 1.3px #e9eef7;overflow:hidden"><div style="position:absolute;right:0;top:1px;width:13.8px;bottom:1px;background:#e8ecf4"><svg width="13.8" height="15" viewBox="0 0 13.8 15" style="position:absolute;left:0;top:0"><path d="M3.1 6.0 L10.5 6.0 L6.8 9.9 Z" fill="#a6a6a6"/></svg></div></div>
<div style="position:absolute;left:191.70px;top:267.97px;width:74.60px;height:19.10px;box-sizing:border-box;background:#fff;border:1px solid #a6a6a6;border-radius:2.5px;box-shadow:0 0 0 1.3px #e9eef7;overflow:hidden"><div style="position:absolute;right:0;top:1px;width:13.8px;bottom:1px;background:#e8ecf4"><svg width="13.8" height="15" viewBox="0 0 13.8 15" style="position:absolute;left:0;top:0"><path d="M3.1 6.0 L10.5 6.0 L6.8 9.9 Z" fill="#a6a6a6"/></svg></div></div>
<div style="position:absolute;left:269.70px;top:267.97px;width:74.10px;height:19.10px;box-sizing:border-box;background:#fff;border:1px solid #a6a6a6;border-radius:2.5px;box-shadow:0 0 0 1.3px #e9eef7;overflow:hidden"><div style="position:absolute;right:0;top:1px;width:13.8px;bottom:1px;background:#e8ecf4"><svg width="13.8" height="15" viewBox="0 0 13.8 15" style="position:absolute;left:0;top:0"><path d="M3.1 6.0 L10.5 6.0 L6.8 9.9 Z" fill="#a6a6a6"/></svg></div></div>
<div style="position:absolute;left:345.90px;top:267.97px;width:74.10px;height:19.10px;box-sizing:border-box;background:#fff;border:1px solid #a6a6a6;border-radius:2.5px;box-shadow:0 0 0 1.3px #e9eef7;overflow:hidden"><div style="position:absolute;right:0;top:1px;width:13.8px;bottom:1px;background:#e8ecf4"><svg width="13.8" height="15" viewBox="0 0 13.8 15" style="position:absolute;left:0;top:0"><path d="M3.1 6.0 L10.5 6.0 L6.8 9.9 Z" fill="#a6a6a6"/></svg></div></div>
<div style="position:absolute;left:421.70px;top:267.97px;width:82.10px;height:19.10px;box-sizing:border-box;background:#fff;border:1px solid #a6a6a6;border-radius:2.5px;box-shadow:0 0 0 1.3px #e9eef7;overflow:hidden"><div style="position:absolute;right:0;top:1px;width:13.8px;bottom:1px;background:#e8ecf4"><svg width="13.8" height="15" viewBox="0 0 13.8 15" style="position:absolute;left:0;top:0"><path d="M3.1 6.0 L10.5 6.0 L6.8 9.9 Z" fill="#a6a6a6"/></svg></div></div>
<div style="position:absolute;left:506.90px;top:267.97px;width:85.10px;height:19.10px;box-sizing:border-box;background:#e0ffff;border:1px solid #a6a6a6;border-radius:2.5px;box-shadow:0 0 0 1.3px #e9eef7;overflow:hidden"><div style="position:absolute;right:0;top:1px;width:13.8px;bottom:1px;background:#e8ecf4"><svg width="13.8" height="15" viewBox="0 0 13.8 15" style="position:absolute;left:0;top:0"><path d="M3.1 6.0 L10.5 6.0 L6.8 9.9 Z" fill="#a6a6a6"/></svg></div></div>
<div style="position:absolute;left:592.00px;top:267.97px;width:53.20px;height:19.10px;box-sizing:border-box;background:#e0ffff;border:1px solid #a6a6a6;border-radius:2.5px;box-shadow:0 0 0 1.3px #e9eef7;overflow:hidden"><div style="position:absolute;right:0;top:1px;width:13.8px;bottom:1px;background:#e8ecf4"><svg width="13.8" height="15" viewBox="0 0 13.8 15" style="position:absolute;left:0;top:0"><path d="M3.1 6.0 L10.5 6.0 L6.8 9.9 Z" fill="#a6a6a6"/></svg></div></div>
<div style="position:absolute;left:646.90px;top:267.97px;width:66.90px;height:19.10px;box-sizing:border-box;background:#e0ffff;border:1px solid #a6a6a6;border-radius:2.5px;box-shadow:0 0 0 1.3px #e9eef7;overflow:hidden"><div style="position:absolute;right:0;top:1px;width:13.8px;bottom:1px;background:#e8ecf4"><svg width="13.8" height="15" viewBox="0 0 13.8 15" style="position:absolute;left:0;top:0"><path d="M3.1 6.0 L10.5 6.0 L6.8 9.9 Z" fill="#a6a6a6"/></svg></div></div>
<div style="position:absolute;left:714.80px;top:267.97px;width:55.10px;height:19.10px;box-sizing:border-box;background:#fff;border:1px solid #aeaeae;border-right-color:#c3d5ec;border-bottom-color:#c3d5ec;border-radius:2.5px;box-shadow:0 0 0 1.5px #e9eef7"></div>
<div style="position:absolute;left:771.70px;top:267.97px;width:70.50px;height:19.10px;box-sizing:border-box;background:#fff;border:1px solid #aeaeae;border-right-color:#c3d5ec;border-bottom-color:#c3d5ec;border-radius:2.5px;box-shadow:0 0 0 1.5px #e9eef7"></div>
<div style="position:absolute;left:844.00px;top:267.97px;width:72.10px;height:19.10px;box-sizing:border-box;background:#e0ffff;border:1px solid #a6a6a6;border-radius:2.5px;box-shadow:0 0 0 1.3px #e9eef7;overflow:hidden"><div style="position:absolute;right:0;top:1px;width:13.8px;bottom:1px;background:#e8ecf4"><svg width="13.8" height="15" viewBox="0 0 13.8 15" style="position:absolute;left:0;top:0"><path d="M3.1 6.0 L10.5 6.0 L6.8 9.9 Z" fill="#a6a6a6"/></svg></div></div>
<div style="position:absolute;left:916.10px;top:267.97px;width:51.90px;height:19.10px;box-sizing:border-box;background:#e0ffff;border:1px solid #a6a6a6;border-radius:2.5px;box-shadow:0 0 0 1.3px #e9eef7;overflow:hidden"><div style="position:absolute;right:0;top:1px;width:13.8px;bottom:1px;background:#e8ecf4"><svg width="13.8" height="15" viewBox="0 0 13.8 15" style="position:absolute;left:0;top:0"><path d="M3.1 6.0 L10.5 6.0 L6.8 9.9 Z" fill="#a6a6a6"/></svg></div></div>
<div style="position:absolute;left:970.20px;top:267.97px;width:55.00px;height:19.10px;box-sizing:border-box;background:#e0ffff;border:1px solid #a6a6a6;border-radius:2.5px;box-shadow:0 0 0 1.3px #e9eef7;overflow:hidden"><div style="position:absolute;right:0;top:1px;width:13.8px;bottom:1px;background:#e8ecf4"><svg width="13.8" height="15" viewBox="0 0 13.8 15" style="position:absolute;left:0;top:0"><path d="M3.1 6.0 L10.5 6.0 L6.8 9.9 Z" fill="#a6a6a6"/></svg></div></div>
<div style="position:absolute;left:1027.20px;top:267.97px;width:67.00px;height:19.10px;box-sizing:border-box;background:#e0ffff;border:1px solid #a6a6a6;border-radius:2.5px;box-shadow:0 0 0 1.3px #e9eef7;overflow:hidden"><div style="position:absolute;right:0;top:1px;width:13.8px;bottom:1px;background:#e8ecf4"><svg width="13.8" height="15" viewBox="0 0 13.8 15" style="position:absolute;left:0;top:0"><path d="M3.1 6.0 L10.5 6.0 L6.8 9.9 Z" fill="#a6a6a6"/></svg></div></div>
<div style="position:absolute;left:1096.00px;top:267.97px;width:75.80px;height:19.10px;box-sizing:border-box;background:#e0ffff;border:1px solid #a6a6a6;border-radius:2.5px;box-shadow:0 0 0 1.3px #e9eef7;overflow:hidden"><div style="position:absolute;right:0;top:1px;width:13.8px;bottom:1px;background:#e8ecf4"><svg width="13.8" height="15" viewBox="0 0 13.8 15" style="position:absolute;left:0;top:0"><path d="M3.1 6.0 L10.5 6.0 L6.8 9.9 Z" fill="#a6a6a6"/></svg></div></div>
<div style="position:absolute;left:1173.70px;top:267.97px;width:64.00px;height:19.10px;box-sizing:border-box;background:#fff;border:1px solid #aeaeae;border-right-color:#c3d5ec;border-bottom-color:#c3d5ec;border-radius:2.5px;box-shadow:0 0 0 1.5px #e9eef7"></div>
<div style="position:absolute;left:1239.80px;top:267.97px;width:90.10px;height:19.10px;box-sizing:border-box;background:#fff;border:1px solid #aeaeae;border-right-color:#c3d5ec;border-bottom-color:#c3d5ec;border-radius:2.5px;box-shadow:0 0 0 1.5px #e9eef7"></div>
<div style="position:absolute;left:1332.20px;top:267.97px;width:75.50px;height:19.10px;box-sizing:border-box;background:#fff;border:1px solid #a6a6a6;border-radius:2.5px;box-shadow:0 0 0 1.3px #e9eef7;overflow:hidden"><div style="position:absolute;right:0;top:1px;width:13.8px;bottom:1px;background:#e8ecf4"><svg width="13.8" height="15" viewBox="0 0 13.8 15" style="position:absolute;left:0;top:0"><path d="M3.1 6.0 L10.5 6.0 L6.8 9.9 Z" fill="#a6a6a6"/></svg></div></div>
<div style="position:absolute;left:1409.70px;top:267.97px;width:54.10px;height:19.10px;box-sizing:border-box;background:#fff;border:1px solid #a6a6a6;border-radius:2.5px;box-shadow:0 0 0 1.3px #e9eef7;overflow:hidden"><div style="position:absolute;right:0;top:1px;width:13.8px;bottom:1px;background:#e8ecf4"><svg width="13.8" height="15" viewBox="0 0 13.8 15" style="position:absolute;left:0;top:0"><path d="M3.1 6.0 L10.5 6.0 L6.8 9.9 Z" fill="#a6a6a6"/></svg></div></div>
<div style="position:absolute;left:1465.90px;top:267.97px;width:54.30px;height:19.10px;box-sizing:border-box;background:#fff;border:1px solid #a6a6a6;border-radius:2.5px;box-shadow:0 0 0 1.3px #e9eef7;overflow:hidden"><div style="position:absolute;right:0;top:1px;width:13.8px;bottom:1px;background:#e8ecf4"><svg width="13.8" height="15" viewBox="0 0 13.8 15" style="position:absolute;left:0;top:0"><path d="M3.1 6.0 L10.5 6.0 L6.8 9.9 Z" fill="#a6a6a6"/></svg></div></div>
<div style="position:absolute;left:30.30px;top:289.30px;width:38.60px;height:19.10px;box-sizing:border-box;background:#fff;border:1px solid #aeaeae;border-right-color:#c3d5ec;border-bottom-color:#c3d5ec;border-radius:2.5px;box-shadow:0 0 0 1.5px #e9eef7;clip-path:inset(-2px -2px -2px -0.3px)"></div>
<div style="position:absolute;left:70.80px;top:289.30px;width:31.10px;height:19.10px;box-sizing:border-box;background:#fff;border:1px solid #aeaeae;border-right-color:#c3d5ec;border-bottom-color:#c3d5ec;border-radius:2.5px;box-shadow:0 0 0 1.5px #e9eef7"></div>
<div style="position:absolute;left:103.70px;top:289.30px;width:33.20px;height:19.10px;box-sizing:border-box;background:#fff;border:1px solid #aeaeae;border-right-color:#c3d5ec;border-bottom-color:#c3d5ec;border-radius:2.5px;box-shadow:0 0 0 1.5px #e9eef7"></div>
<div style="position:absolute;left:138.90px;top:289.30px;width:51.10px;height:19.10px;box-sizing:border-box;background:#fff;border:1px solid #a6a6a6;border-radius:2.5px;box-shadow:0 0 0 1.3px #e9eef7;overflow:hidden"><div style="position:absolute;right:0;top:1px;width:13.8px;bottom:1px;background:#e8ecf4"><svg width="13.8" height="15" viewBox="0 0 13.8 15" style="position:absolute;left:0;top:0"><path d="M3.1 6.0 L10.5 6.0 L6.8 9.9 Z" fill="#a6a6a6"/></svg></div></div>
<div style="position:absolute;left:191.70px;top:289.30px;width:74.60px;height:19.10px;box-sizing:border-box;background:#fff;border:1px solid #a6a6a6;border-radius:2.5px;box-shadow:0 0 0 1.3px #e9eef7;overflow:hidden"><div style="position:absolute;right:0;top:1px;width:13.8px;bottom:1px;background:#e8ecf4"><svg width="13.8" height="15" viewBox="0 0 13.8 15" style="position:absolute;left:0;top:0"><path d="M3.1 6.0 L10.5 6.0 L6.8 9.9 Z" fill="#a6a6a6"/></svg></div></div>
<div style="position:absolute;left:269.70px;top:289.30px;width:74.10px;height:19.10px;box-sizing:border-box;background:#fff;border:1px solid #a6a6a6;border-radius:2.5px;box-shadow:0 0 0 1.3px #e9eef7;overflow:hidden"><div style="position:absolute;right:0;top:1px;width:13.8px;bottom:1px;background:#e8ecf4"><svg width="13.8" height="15" viewBox="0 0 13.8 15" style="position:absolute;left:0;top:0"><path d="M3.1 6.0 L10.5 6.0 L6.8 9.9 Z" fill="#a6a6a6"/></svg></div></div>
<div style="position:absolute;left:345.90px;top:289.30px;width:74.10px;height:19.10px;box-sizing:border-box;background:#fff;border:1px solid #a6a6a6;border-radius:2.5px;box-shadow:0 0 0 1.3px #e9eef7;overflow:hidden"><div style="position:absolute;right:0;top:1px;width:13.8px;bottom:1px;background:#e8ecf4"><svg width="13.8" height="15" viewBox="0 0 13.8 15" style="position:absolute;left:0;top:0"><path d="M3.1 6.0 L10.5 6.0 L6.8 9.9 Z" fill="#a6a6a6"/></svg></div></div>
<div style="position:absolute;left:421.70px;top:289.30px;width:82.10px;height:19.10px;box-sizing:border-box;background:#fff;border:1px solid #a6a6a6;border-radius:2.5px;box-shadow:0 0 0 1.3px #e9eef7;overflow:hidden"><div style="position:absolute;right:0;top:1px;width:13.8px;bottom:1px;background:#e8ecf4"><svg width="13.8" height="15" viewBox="0 0 13.8 15" style="position:absolute;left:0;top:0"><path d="M3.1 6.0 L10.5 6.0 L6.8 9.9 Z" fill="#a6a6a6"/></svg></div></div>
<div style="position:absolute;left:506.90px;top:289.30px;width:85.10px;height:19.10px;box-sizing:border-box;background:#e0ffff;border:1px solid #a6a6a6;border-radius:2.5px;box-shadow:0 0 0 1.3px #e9eef7;overflow:hidden"><div style="position:absolute;right:0;top:1px;width:13.8px;bottom:1px;background:#e8ecf4"><svg width="13.8" height="15" viewBox="0 0 13.8 15" style="position:absolute;left:0;top:0"><path d="M3.1 6.0 L10.5 6.0 L6.8 9.9 Z" fill="#a6a6a6"/></svg></div></div>
<div style="position:absolute;left:592.00px;top:289.30px;width:53.20px;height:19.10px;box-sizing:border-box;background:#e0ffff;border:1px solid #a6a6a6;border-radius:2.5px;box-shadow:0 0 0 1.3px #e9eef7;overflow:hidden"><div style="position:absolute;right:0;top:1px;width:13.8px;bottom:1px;background:#e8ecf4"><svg width="13.8" height="15" viewBox="0 0 13.8 15" style="position:absolute;left:0;top:0"><path d="M3.1 6.0 L10.5 6.0 L6.8 9.9 Z" fill="#a6a6a6"/></svg></div></div>
<div style="position:absolute;left:646.90px;top:289.30px;width:66.90px;height:19.10px;box-sizing:border-box;background:#e0ffff;border:1px solid #a6a6a6;border-radius:2.5px;box-shadow:0 0 0 1.3px #e9eef7;overflow:hidden"><div style="position:absolute;right:0;top:1px;width:13.8px;bottom:1px;background:#e8ecf4"><svg width="13.8" height="15" viewBox="0 0 13.8 15" style="position:absolute;left:0;top:0"><path d="M3.1 6.0 L10.5 6.0 L6.8 9.9 Z" fill="#a6a6a6"/></svg></div></div>
<div style="position:absolute;left:714.80px;top:289.30px;width:55.10px;height:19.10px;box-sizing:border-box;background:#fff;border:1px solid #aeaeae;border-right-color:#c3d5ec;border-bottom-color:#c3d5ec;border-radius:2.5px;box-shadow:0 0 0 1.5px #e9eef7"></div>
<div style="position:absolute;left:771.70px;top:289.30px;width:70.50px;height:19.10px;box-sizing:border-box;background:#fff;border:1px solid #aeaeae;border-right-color:#c3d5ec;border-bottom-color:#c3d5ec;border-radius:2.5px;box-shadow:0 0 0 1.5px #e9eef7"></div>
<div style="position:absolute;left:844.00px;top:289.30px;width:72.10px;height:19.10px;box-sizing:border-box;background:#e0ffff;border:1px solid #a6a6a6;border-radius:2.5px;box-shadow:0 0 0 1.3px #e9eef7;overflow:hidden"><div style="position:absolute;right:0;top:1px;width:13.8px;bottom:1px;background:#e8ecf4"><svg width="13.8" height="15" viewBox="0 0 13.8 15" style="position:absolute;left:0;top:0"><path d="M3.1 6.0 L10.5 6.0 L6.8 9.9 Z" fill="#a6a6a6"/></svg></div></div>
<div style="position:absolute;left:916.10px;top:289.30px;width:51.90px;height:19.10px;box-sizing:border-box;background:#e0ffff;border:1px solid #a6a6a6;border-radius:2.5px;box-shadow:0 0 0 1.3px #e9eef7;overflow:hidden"><div style="position:absolute;right:0;top:1px;width:13.8px;bottom:1px;background:#e8ecf4"><svg width="13.8" height="15" viewBox="0 0 13.8 15" style="position:absolute;left:0;top:0"><path d="M3.1 6.0 L10.5 6.0 L6.8 9.9 Z" fill="#a6a6a6"/></svg></div></div>
<div style="position:absolute;left:970.20px;top:289.30px;width:55.00px;height:19.10px;box-sizing:border-box;background:#e0ffff;border:1px solid #a6a6a6;border-radius:2.5px;box-shadow:0 0 0 1.3px #e9eef7;overflow:hidden"><div style="position:absolute;right:0;top:1px;width:13.8px;bottom:1px;background:#e8ecf4"><svg width="13.8" height="15" viewBox="0 0 13.8 15" style="position:absolute;left:0;top:0"><path d="M3.1 6.0 L10.5 6.0 L6.8 9.9 Z" fill="#a6a6a6"/></svg></div></div>
<div style="position:absolute;left:1027.20px;top:289.30px;width:67.00px;height:19.10px;box-sizing:border-box;background:#e0ffff;border:1px solid #a6a6a6;border-radius:2.5px;box-shadow:0 0 0 1.3px #e9eef7;overflow:hidden"><div style="position:absolute;right:0;top:1px;width:13.8px;bottom:1px;background:#e8ecf4"><svg width="13.8" height="15" viewBox="0 0 13.8 15" style="position:absolute;left:0;top:0"><path d="M3.1 6.0 L10.5 6.0 L6.8 9.9 Z" fill="#a6a6a6"/></svg></div></div>
<div style="position:absolute;left:1096.00px;top:289.30px;width:75.80px;height:19.10px;box-sizing:border-box;background:#e0ffff;border:1px solid #a6a6a6;border-radius:2.5px;box-shadow:0 0 0 1.3px #e9eef7;overflow:hidden"><div style="position:absolute;right:0;top:1px;width:13.8px;bottom:1px;background:#e8ecf4"><svg width="13.8" height="15" viewBox="0 0 13.8 15" style="position:absolute;left:0;top:0"><path d="M3.1 6.0 L10.5 6.0 L6.8 9.9 Z" fill="#a6a6a6"/></svg></div></div>
<div style="position:absolute;left:1173.70px;top:289.30px;width:64.00px;height:19.10px;box-sizing:border-box;background:#fff;border:1px solid #aeaeae;border-right-color:#c3d5ec;border-bottom-color:#c3d5ec;border-radius:2.5px;box-shadow:0 0 0 1.5px #e9eef7"></div>
<div style="position:absolute;left:1239.80px;top:289.30px;width:90.10px;height:19.10px;box-sizing:border-box;background:#fff;border:1px solid #aeaeae;border-right-color:#c3d5ec;border-bottom-color:#c3d5ec;border-radius:2.5px;box-shadow:0 0 0 1.5px #e9eef7"></div>
<div style="position:absolute;left:1332.20px;top:289.30px;width:75.50px;height:19.10px;box-sizing:border-box;background:#fff;border:1px solid #a6a6a6;border-radius:2.5px;box-shadow:0 0 0 1.3px #e9eef7;overflow:hidden"><div style="position:absolute;right:0;top:1px;width:13.8px;bottom:1px;background:#e8ecf4"><svg width="13.8" height="15" viewBox="0 0 13.8 15" style="position:absolute;left:0;top:0"><path d="M3.1 6.0 L10.5 6.0 L6.8 9.9 Z" fill="#a6a6a6"/></svg></div></div>
<div style="position:absolute;left:1409.70px;top:289.30px;width:54.10px;height:19.10px;box-sizing:border-box;background:#fff;border:1px solid #a6a6a6;border-radius:2.5px;box-shadow:0 0 0 1.3px #e9eef7;overflow:hidden"><div style="position:absolute;right:0;top:1px;width:13.8px;bottom:1px;background:#e8ecf4"><svg width="13.8" height="15" viewBox="0 0 13.8 15" style="position:absolute;left:0;top:0"><path d="M3.1 6.0 L10.5 6.0 L6.8 9.9 Z" fill="#a6a6a6"/></svg></div></div>
<div style="position:absolute;left:1465.90px;top:289.30px;width:54.30px;height:19.10px;box-sizing:border-box;background:#fff;border:1px solid #a6a6a6;border-radius:2.5px;box-shadow:0 0 0 1.3px #e9eef7;overflow:hidden"><div style="position:absolute;right:0;top:1px;width:13.8px;bottom:1px;background:#e8ecf4"><svg width="13.8" height="15" viewBox="0 0 13.8 15" style="position:absolute;left:0;top:0"><path d="M3.1 6.0 L10.5 6.0 L6.8 9.9 Z" fill="#a6a6a6"/></svg></div></div>
<div style="position:absolute;left:30.30px;top:310.63px;width:38.60px;height:19.10px;box-sizing:border-box;background:#fff;border:1px solid #aeaeae;border-right-color:#c3d5ec;border-bottom-color:#c3d5ec;border-radius:2.5px;box-shadow:0 0 0 1.5px #e9eef7;clip-path:inset(-2px -2px -2px -0.3px)"></div>
<div style="position:absolute;left:70.80px;top:310.63px;width:31.10px;height:19.10px;box-sizing:border-box;background:#fff;border:1px solid #aeaeae;border-right-color:#c3d5ec;border-bottom-color:#c3d5ec;border-radius:2.5px;box-shadow:0 0 0 1.5px #e9eef7"></div>
<div style="position:absolute;left:103.70px;top:310.63px;width:33.20px;height:19.10px;box-sizing:border-box;background:#fff;border:1px solid #aeaeae;border-right-color:#c3d5ec;border-bottom-color:#c3d5ec;border-radius:2.5px;box-shadow:0 0 0 1.5px #e9eef7"></div>
<div style="position:absolute;left:138.90px;top:310.63px;width:51.10px;height:19.10px;box-sizing:border-box;background:#fff;border:1px solid #a6a6a6;border-radius:2.5px;box-shadow:0 0 0 1.3px #e9eef7;overflow:hidden"><div style="position:absolute;right:0;top:1px;width:13.8px;bottom:1px;background:#e8ecf4"><svg width="13.8" height="15" viewBox="0 0 13.8 15" style="position:absolute;left:0;top:0"><path d="M3.1 6.0 L10.5 6.0 L6.8 9.9 Z" fill="#a6a6a6"/></svg></div></div>
<div style="position:absolute;left:191.70px;top:310.63px;width:74.60px;height:19.10px;box-sizing:border-box;background:#fff;border:1px solid #a6a6a6;border-radius:2.5px;box-shadow:0 0 0 1.3px #e9eef7;overflow:hidden"><div style="position:absolute;right:0;top:1px;width:13.8px;bottom:1px;background:#e8ecf4"><svg width="13.8" height="15" viewBox="0 0 13.8 15" style="position:absolute;left:0;top:0"><path d="M3.1 6.0 L10.5 6.0 L6.8 9.9 Z" fill="#a6a6a6"/></svg></div></div>
<div style="position:absolute;left:269.70px;top:310.63px;width:74.10px;height:19.10px;box-sizing:border-box;background:#fff;border:1px solid #a6a6a6;border-radius:2.5px;box-shadow:0 0 0 1.3px #e9eef7;overflow:hidden"><div style="position:absolute;right:0;top:1px;width:13.8px;bottom:1px;background:#e8ecf4"><svg width="13.8" height="15" viewBox="0 0 13.8 15" style="position:absolute;left:0;top:0"><path d="M3.1 6.0 L10.5 6.0 L6.8 9.9 Z" fill="#a6a6a6"/></svg></div></div>
<div style="position:absolute;left:345.90px;top:310.63px;width:74.10px;height:19.10px;box-sizing:border-box;background:#fff;border:1px solid #a6a6a6;border-radius:2.5px;box-shadow:0 0 0 1.3px #e9eef7;overflow:hidden"><div style="position:absolute;right:0;top:1px;width:13.8px;bottom:1px;background:#e8ecf4"><svg width="13.8" height="15" viewBox="0 0 13.8 15" style="position:absolute;left:0;top:0"><path d="M3.1 6.0 L10.5 6.0 L6.8 9.9 Z" fill="#a6a6a6"/></svg></div></div>
<div style="position:absolute;left:421.70px;top:310.63px;width:82.10px;height:19.10px;box-sizing:border-box;background:#fff;border:1px solid #a6a6a6;border-radius:2.5px;box-shadow:0 0 0 1.3px #e9eef7;overflow:hidden"><div style="position:absolute;right:0;top:1px;width:13.8px;bottom:1px;background:#e8ecf4"><svg width="13.8" height="15" viewBox="0 0 13.8 15" style="position:absolute;left:0;top:0"><path d="M3.1 6.0 L10.5 6.0 L6.8 9.9 Z" fill="#a6a6a6"/></svg></div></div>
<div style="position:absolute;left:506.90px;top:310.63px;width:85.10px;height:19.10px;box-sizing:border-box;background:#e0ffff;border:1px solid #a6a6a6;border-radius:2.5px;box-shadow:0 0 0 1.3px #e9eef7;overflow:hidden"><div style="position:absolute;right:0;top:1px;width:13.8px;bottom:1px;background:#e8ecf4"><svg width="13.8" height="15" viewBox="0 0 13.8 15" style="position:absolute;left:0;top:0"><path d="M3.1 6.0 L10.5 6.0 L6.8 9.9 Z" fill="#a6a6a6"/></svg></div></div>
<div style="position:absolute;left:592.00px;top:310.63px;width:53.20px;height:19.10px;box-sizing:border-box;background:#e0ffff;border:1px solid #a6a6a6;border-radius:2.5px;box-shadow:0 0 0 1.3px #e9eef7;overflow:hidden"><div style="position:absolute;right:0;top:1px;width:13.8px;bottom:1px;background:#e8ecf4"><svg width="13.8" height="15" viewBox="0 0 13.8 15" style="position:absolute;left:0;top:0"><path d="M3.1 6.0 L10.5 6.0 L6.8 9.9 Z" fill="#a6a6a6"/></svg></div></div>
<div style="position:absolute;left:646.90px;top:310.63px;width:66.90px;height:19.10px;box-sizing:border-box;background:#e0ffff;border:1px solid #a6a6a6;border-radius:2.5px;box-shadow:0 0 0 1.3px #e9eef7;overflow:hidden"><div style="position:absolute;right:0;top:1px;width:13.8px;bottom:1px;background:#e8ecf4"><svg width="13.8" height="15" viewBox="0 0 13.8 15" style="position:absolute;left:0;top:0"><path d="M3.1 6.0 L10.5 6.0 L6.8 9.9 Z" fill="#a6a6a6"/></svg></div></div>
<div style="position:absolute;left:714.80px;top:310.63px;width:55.10px;height:19.10px;box-sizing:border-box;background:#fff;border:1px solid #aeaeae;border-right-color:#c3d5ec;border-bottom-color:#c3d5ec;border-radius:2.5px;box-shadow:0 0 0 1.5px #e9eef7"></div>
<div style="position:absolute;left:771.70px;top:310.63px;width:70.50px;height:19.10px;box-sizing:border-box;background:#fff;border:1px solid #aeaeae;border-right-color:#c3d5ec;border-bottom-color:#c3d5ec;border-radius:2.5px;box-shadow:0 0 0 1.5px #e9eef7"></div>
<div style="position:absolute;left:844.00px;top:310.63px;width:72.10px;height:19.10px;box-sizing:border-box;background:#e0ffff;border:1px solid #a6a6a6;border-radius:2.5px;box-shadow:0 0 0 1.3px #e9eef7;overflow:hidden"><div style="position:absolute;right:0;top:1px;width:13.8px;bottom:1px;background:#e8ecf4"><svg width="13.8" height="15" viewBox="0 0 13.8 15" style="position:absolute;left:0;top:0"><path d="M3.1 6.0 L10.5 6.0 L6.8 9.9 Z" fill="#a6a6a6"/></svg></div></div>
<div style="position:absolute;left:916.10px;top:310.63px;width:51.90px;height:19.10px;box-sizing:border-box;background:#e0ffff;border:1px solid #a6a6a6;border-radius:2.5px;box-shadow:0 0 0 1.3px #e9eef7;overflow:hidden"><div style="position:absolute;right:0;top:1px;width:13.8px;bottom:1px;background:#e8ecf4"><svg width="13.8" height="15" viewBox="0 0 13.8 15" style="position:absolute;left:0;top:0"><path d="M3.1 6.0 L10.5 6.0 L6.8 9.9 Z" fill="#a6a6a6"/></svg></div></div>
<div style="position:absolute;left:970.20px;top:310.63px;width:55.00px;height:19.10px;box-sizing:border-box;background:#e0ffff;border:1px solid #a6a6a6;border-radius:2.5px;box-shadow:0 0 0 1.3px #e9eef7;overflow:hidden"><div style="position:absolute;right:0;top:1px;width:13.8px;bottom:1px;background:#e8ecf4"><svg width="13.8" height="15" viewBox="0 0 13.8 15" style="position:absolute;left:0;top:0"><path d="M3.1 6.0 L10.5 6.0 L6.8 9.9 Z" fill="#a6a6a6"/></svg></div></div>
<div style="position:absolute;left:1027.20px;top:310.63px;width:67.00px;height:19.10px;box-sizing:border-box;background:#e0ffff;border:1px solid #a6a6a6;border-radius:2.5px;box-shadow:0 0 0 1.3px #e9eef7;overflow:hidden"><div style="position:absolute;right:0;top:1px;width:13.8px;bottom:1px;background:#e8ecf4"><svg width="13.8" height="15" viewBox="0 0 13.8 15" style="position:absolute;left:0;top:0"><path d="M3.1 6.0 L10.5 6.0 L6.8 9.9 Z" fill="#a6a6a6"/></svg></div></div>
<div style="position:absolute;left:1096.00px;top:310.63px;width:75.80px;height:19.10px;box-sizing:border-box;background:#e0ffff;border:1px solid #a6a6a6;border-radius:2.5px;box-shadow:0 0 0 1.3px #e9eef7;overflow:hidden"><div style="position:absolute;right:0;top:1px;width:13.8px;bottom:1px;background:#e8ecf4"><svg width="13.8" height="15" viewBox="0 0 13.8 15" style="position:absolute;left:0;top:0"><path d="M3.1 6.0 L10.5 6.0 L6.8 9.9 Z" fill="#a6a6a6"/></svg></div></div>
<div style="position:absolute;left:1173.70px;top:310.63px;width:64.00px;height:19.10px;box-sizing:border-box;background:#fff;border:1px solid #aeaeae;border-right-color:#c3d5ec;border-bottom-color:#c3d5ec;border-radius:2.5px;box-shadow:0 0 0 1.5px #e9eef7"></div>
<div style="position:absolute;left:1239.80px;top:310.63px;width:90.10px;height:19.10px;box-sizing:border-box;background:#fff;border:1px solid #aeaeae;border-right-color:#c3d5ec;border-bottom-color:#c3d5ec;border-radius:2.5px;box-shadow:0 0 0 1.5px #e9eef7"></div>
<div style="position:absolute;left:1332.20px;top:310.63px;width:75.50px;height:19.10px;box-sizing:border-box;background:#fff;border:1px solid #a6a6a6;border-radius:2.5px;box-shadow:0 0 0 1.3px #e9eef7;overflow:hidden"><div style="position:absolute;right:0;top:1px;width:13.8px;bottom:1px;background:#e8ecf4"><svg width="13.8" height="15" viewBox="0 0 13.8 15" style="position:absolute;left:0;top:0"><path d="M3.1 6.0 L10.5 6.0 L6.8 9.9 Z" fill="#a6a6a6"/></svg></div></div>
<div style="position:absolute;left:1409.70px;top:310.63px;width:54.10px;height:19.10px;box-sizing:border-box;background:#fff;border:1px solid #a6a6a6;border-radius:2.5px;box-shadow:0 0 0 1.3px #e9eef7;overflow:hidden"><div style="position:absolute;right:0;top:1px;width:13.8px;bottom:1px;background:#e8ecf4"><svg width="13.8" height="15" viewBox="0 0 13.8 15" style="position:absolute;left:0;top:0"><path d="M3.1 6.0 L10.5 6.0 L6.8 9.9 Z" fill="#a6a6a6"/></svg></div></div>
<div style="position:absolute;left:1465.90px;top:310.63px;width:54.30px;height:19.10px;box-sizing:border-box;background:#fff;border:1px solid #a6a6a6;border-radius:2.5px;box-shadow:0 0 0 1.3px #e9eef7;overflow:hidden"><div style="position:absolute;right:0;top:1px;width:13.8px;bottom:1px;background:#e8ecf4"><svg width="13.8" height="15" viewBox="0 0 13.8 15" style="position:absolute;left:0;top:0"><path d="M3.1 6.0 L10.5 6.0 L6.8 9.9 Z" fill="#a6a6a6"/></svg></div></div>
<div style="position:absolute;left:30.30px;top:331.97px;width:38.60px;height:19.10px;box-sizing:border-box;background:#fff;border:1px solid #aeaeae;border-right-color:#c3d5ec;border-bottom-color:#c3d5ec;border-radius:2.5px;box-shadow:0 0 0 1.5px #e9eef7;clip-path:inset(-2px -2px -2px -0.3px)"></div>
<div style="position:absolute;left:70.80px;top:331.97px;width:31.10px;height:19.10px;box-sizing:border-box;background:#fff;border:1px solid #aeaeae;border-right-color:#c3d5ec;border-bottom-color:#c3d5ec;border-radius:2.5px;box-shadow:0 0 0 1.5px #e9eef7"></div>
<div style="position:absolute;left:103.70px;top:331.97px;width:33.20px;height:19.10px;box-sizing:border-box;background:#fff;border:1px solid #aeaeae;border-right-color:#c3d5ec;border-bottom-color:#c3d5ec;border-radius:2.5px;box-shadow:0 0 0 1.5px #e9eef7"></div>
<div style="position:absolute;left:138.90px;top:331.97px;width:51.10px;height:19.10px;box-sizing:border-box;background:#fff;border:1px solid #a6a6a6;border-radius:2.5px;box-shadow:0 0 0 1.3px #e9eef7;overflow:hidden"><div style="position:absolute;right:0;top:1px;width:13.8px;bottom:1px;background:#e8ecf4"><svg width="13.8" height="15" viewBox="0 0 13.8 15" style="position:absolute;left:0;top:0"><path d="M3.1 6.0 L10.5 6.0 L6.8 9.9 Z" fill="#a6a6a6"/></svg></div></div>
<div style="position:absolute;left:191.70px;top:331.97px;width:74.60px;height:19.10px;box-sizing:border-box;background:#fff;border:1px solid #a6a6a6;border-radius:2.5px;box-shadow:0 0 0 1.3px #e9eef7;overflow:hidden"><div style="position:absolute;right:0;top:1px;width:13.8px;bottom:1px;background:#e8ecf4"><svg width="13.8" height="15" viewBox="0 0 13.8 15" style="position:absolute;left:0;top:0"><path d="M3.1 6.0 L10.5 6.0 L6.8 9.9 Z" fill="#a6a6a6"/></svg></div></div>
<div style="position:absolute;left:269.70px;top:331.97px;width:74.10px;height:19.10px;box-sizing:border-box;background:#fff;border:1px solid #a6a6a6;border-radius:2.5px;box-shadow:0 0 0 1.3px #e9eef7;overflow:hidden"><div style="position:absolute;right:0;top:1px;width:13.8px;bottom:1px;background:#e8ecf4"><svg width="13.8" height="15" viewBox="0 0 13.8 15" style="position:absolute;left:0;top:0"><path d="M3.1 6.0 L10.5 6.0 L6.8 9.9 Z" fill="#a6a6a6"/></svg></div></div>
<div style="position:absolute;left:345.90px;top:331.97px;width:74.10px;height:19.10px;box-sizing:border-box;background:#fff;border:1px solid #a6a6a6;border-radius:2.5px;box-shadow:0 0 0 1.3px #e9eef7;overflow:hidden"><div style="position:absolute;right:0;top:1px;width:13.8px;bottom:1px;background:#e8ecf4"><svg width="13.8" height="15" viewBox="0 0 13.8 15" style="position:absolute;left:0;top:0"><path d="M3.1 6.0 L10.5 6.0 L6.8 9.9 Z" fill="#a6a6a6"/></svg></div></div>
<div style="position:absolute;left:421.70px;top:331.97px;width:82.10px;height:19.10px;box-sizing:border-box;background:#fff;border:1px solid #a6a6a6;border-radius:2.5px;box-shadow:0 0 0 1.3px #e9eef7;overflow:hidden"><div style="position:absolute;right:0;top:1px;width:13.8px;bottom:1px;background:#e8ecf4"><svg width="13.8" height="15" viewBox="0 0 13.8 15" style="position:absolute;left:0;top:0"><path d="M3.1 6.0 L10.5 6.0 L6.8 9.9 Z" fill="#a6a6a6"/></svg></div></div>
<div style="position:absolute;left:506.90px;top:331.97px;width:85.10px;height:19.10px;box-sizing:border-box;background:#e0ffff;border:1px solid #a6a6a6;border-radius:2.5px;box-shadow:0 0 0 1.3px #e9eef7;overflow:hidden"><div style="position:absolute;right:0;top:1px;width:13.8px;bottom:1px;background:#e8ecf4"><svg width="13.8" height="15" viewBox="0 0 13.8 15" style="position:absolute;left:0;top:0"><path d="M3.1 6.0 L10.5 6.0 L6.8 9.9 Z" fill="#a6a6a6"/></svg></div></div>
<div style="position:absolute;left:592.00px;top:331.97px;width:53.20px;height:19.10px;box-sizing:border-box;background:#e0ffff;border:1px solid #a6a6a6;border-radius:2.5px;box-shadow:0 0 0 1.3px #e9eef7;overflow:hidden"><div style="position:absolute;right:0;top:1px;width:13.8px;bottom:1px;background:#e8ecf4"><svg width="13.8" height="15" viewBox="0 0 13.8 15" style="position:absolute;left:0;top:0"><path d="M3.1 6.0 L10.5 6.0 L6.8 9.9 Z" fill="#a6a6a6"/></svg></div></div>
<div style="position:absolute;left:646.90px;top:331.97px;width:66.90px;height:19.10px;box-sizing:border-box;background:#e0ffff;border:1px solid #a6a6a6;border-radius:2.5px;box-shadow:0 0 0 1.3px #e9eef7;overflow:hidden"><div style="position:absolute;right:0;top:1px;width:13.8px;bottom:1px;background:#e8ecf4"><svg width="13.8" height="15" viewBox="0 0 13.8 15" style="position:absolute;left:0;top:0"><path d="M3.1 6.0 L10.5 6.0 L6.8 9.9 Z" fill="#a6a6a6"/></svg></div></div>
<div style="position:absolute;left:714.80px;top:331.97px;width:55.10px;height:19.10px;box-sizing:border-box;background:#fff;border:1px solid #aeaeae;border-right-color:#c3d5ec;border-bottom-color:#c3d5ec;border-radius:2.5px;box-shadow:0 0 0 1.5px #e9eef7"></div>
<div style="position:absolute;left:771.70px;top:331.97px;width:70.50px;height:19.10px;box-sizing:border-box;background:#fff;border:1px solid #aeaeae;border-right-color:#c3d5ec;border-bottom-color:#c3d5ec;border-radius:2.5px;box-shadow:0 0 0 1.5px #e9eef7"></div>
<div style="position:absolute;left:844.00px;top:331.97px;width:72.10px;height:19.10px;box-sizing:border-box;background:#e0ffff;border:1px solid #a6a6a6;border-radius:2.5px;box-shadow:0 0 0 1.3px #e9eef7;overflow:hidden"><div style="position:absolute;right:0;top:1px;width:13.8px;bottom:1px;background:#e8ecf4"><svg width="13.8" height="15" viewBox="0 0 13.8 15" style="position:absolute;left:0;top:0"><path d="M3.1 6.0 L10.5 6.0 L6.8 9.9 Z" fill="#a6a6a6"/></svg></div></div>
<div style="position:absolute;left:916.10px;top:331.97px;width:51.90px;height:19.10px;box-sizing:border-box;background:#e0ffff;border:1px solid #a6a6a6;border-radius:2.5px;box-shadow:0 0 0 1.3px #e9eef7;overflow:hidden"><div style="position:absolute;right:0;top:1px;width:13.8px;bottom:1px;background:#e8ecf4"><svg width="13.8" height="15" viewBox="0 0 13.8 15" style="position:absolute;left:0;top:0"><path d="M3.1 6.0 L10.5 6.0 L6.8 9.9 Z" fill="#a6a6a6"/></svg></div></div>
<div style="position:absolute;left:970.20px;top:331.97px;width:55.00px;height:19.10px;box-sizing:border-box;background:#e0ffff;border:1px solid #a6a6a6;border-radius:2.5px;box-shadow:0 0 0 1.3px #e9eef7;overflow:hidden"><div style="position:absolute;right:0;top:1px;width:13.8px;bottom:1px;background:#e8ecf4"><svg width="13.8" height="15" viewBox="0 0 13.8 15" style="position:absolute;left:0;top:0"><path d="M3.1 6.0 L10.5 6.0 L6.8 9.9 Z" fill="#a6a6a6"/></svg></div></div>
<div style="position:absolute;left:1027.20px;top:331.97px;width:67.00px;height:19.10px;box-sizing:border-box;background:#e0ffff;border:1px solid #a6a6a6;border-radius:2.5px;box-shadow:0 0 0 1.3px #e9eef7;overflow:hidden"><div style="position:absolute;right:0;top:1px;width:13.8px;bottom:1px;background:#e8ecf4"><svg width="13.8" height="15" viewBox="0 0 13.8 15" style="position:absolute;left:0;top:0"><path d="M3.1 6.0 L10.5 6.0 L6.8 9.9 Z" fill="#a6a6a6"/></svg></div></div>
<div style="position:absolute;left:1096.00px;top:331.97px;width:75.80px;height:19.10px;box-sizing:border-box;background:#e0ffff;border:1px solid #a6a6a6;border-radius:2.5px;box-shadow:0 0 0 1.3px #e9eef7;overflow:hidden"><div style="position:absolute;right:0;top:1px;width:13.8px;bottom:1px;background:#e8ecf4"><svg width="13.8" height="15" viewBox="0 0 13.8 15" style="position:absolute;left:0;top:0"><path d="M3.1 6.0 L10.5 6.0 L6.8 9.9 Z" fill="#a6a6a6"/></svg></div></div>
<div style="position:absolute;left:1173.70px;top:331.97px;width:64.00px;height:19.10px;box-sizing:border-box;background:#fff;border:1px solid #aeaeae;border-right-color:#c3d5ec;border-bottom-color:#c3d5ec;border-radius:2.5px;box-shadow:0 0 0 1.5px #e9eef7"></div>
<div style="position:absolute;left:1239.80px;top:331.97px;width:90.10px;height:19.10px;box-sizing:border-box;background:#fff;border:1px solid #aeaeae;border-right-color:#c3d5ec;border-bottom-color:#c3d5ec;border-radius:2.5px;box-shadow:0 0 0 1.5px #e9eef7"></div>
<div style="position:absolute;left:1332.20px;top:331.97px;width:75.50px;height:19.10px;box-sizing:border-box;background:#fff;border:1px solid #a6a6a6;border-radius:2.5px;box-shadow:0 0 0 1.3px #e9eef7;overflow:hidden"><div style="position:absolute;right:0;top:1px;width:13.8px;bottom:1px;background:#e8ecf4"><svg width="13.8" height="15" viewBox="0 0 13.8 15" style="position:absolute;left:0;top:0"><path d="M3.1 6.0 L10.5 6.0 L6.8 9.9 Z" fill="#a6a6a6"/></svg></div></div>
<div style="position:absolute;left:1409.70px;top:331.97px;width:54.10px;height:19.10px;box-sizing:border-box;background:#fff;border:1px solid #a6a6a6;border-radius:2.5px;box-shadow:0 0 0 1.3px #e9eef7;overflow:hidden"><div style="position:absolute;right:0;top:1px;width:13.8px;bottom:1px;background:#e8ecf4"><svg width="13.8" height="15" viewBox="0 0 13.8 15" style="position:absolute;left:0;top:0"><path d="M3.1 6.0 L10.5 6.0 L6.8 9.9 Z" fill="#a6a6a6"/></svg></div></div>
<div style="position:absolute;left:1465.90px;top:331.97px;width:54.30px;height:19.10px;box-sizing:border-box;background:#fff;border:1px solid #a6a6a6;border-radius:2.5px;box-shadow:0 0 0 1.3px #e9eef7;overflow:hidden"><div style="position:absolute;right:0;top:1px;width:13.8px;bottom:1px;background:#e8ecf4"><svg width="13.8" height="15" viewBox="0 0 13.8 15" style="position:absolute;left:0;top:0"><path d="M3.1 6.0 L10.5 6.0 L6.8 9.9 Z" fill="#a6a6a6"/></svg></div></div>
<div style="position:absolute;left:30.30px;top:353.30px;width:38.60px;height:19.10px;box-sizing:border-box;background:#fff;border:1px solid #aeaeae;border-right-color:#c3d5ec;border-bottom-color:#c3d5ec;border-radius:2.5px;box-shadow:0 0 0 1.5px #e9eef7;clip-path:inset(-2px -2px -2px -0.3px)"></div>
<div style="position:absolute;left:70.80px;top:353.30px;width:31.10px;height:19.10px;box-sizing:border-box;background:#fff;border:1px solid #aeaeae;border-right-color:#c3d5ec;border-bottom-color:#c3d5ec;border-radius:2.5px;box-shadow:0 0 0 1.5px #e9eef7"></div>
<div style="position:absolute;left:103.70px;top:353.30px;width:33.20px;height:19.10px;box-sizing:border-box;background:#fff;border:1px solid #aeaeae;border-right-color:#c3d5ec;border-bottom-color:#c3d5ec;border-radius:2.5px;box-shadow:0 0 0 1.5px #e9eef7"></div>
<div style="position:absolute;left:138.90px;top:353.30px;width:51.10px;height:19.10px;box-sizing:border-box;background:#fff;border:1px solid #a6a6a6;border-radius:2.5px;box-shadow:0 0 0 1.3px #e9eef7;overflow:hidden"><div style="position:absolute;right:0;top:1px;width:13.8px;bottom:1px;background:#e8ecf4"><svg width="13.8" height="15" viewBox="0 0 13.8 15" style="position:absolute;left:0;top:0"><path d="M3.1 6.0 L10.5 6.0 L6.8 9.9 Z" fill="#a6a6a6"/></svg></div></div>
<div style="position:absolute;left:191.70px;top:353.30px;width:74.60px;height:19.10px;box-sizing:border-box;background:#fff;border:1px solid #a6a6a6;border-radius:2.5px;box-shadow:0 0 0 1.3px #e9eef7;overflow:hidden"><div style="position:absolute;right:0;top:1px;width:13.8px;bottom:1px;background:#e8ecf4"><svg width="13.8" height="15" viewBox="0 0 13.8 15" style="position:absolute;left:0;top:0"><path d="M3.1 6.0 L10.5 6.0 L6.8 9.9 Z" fill="#a6a6a6"/></svg></div></div>
<div style="position:absolute;left:269.70px;top:353.30px;width:74.10px;height:19.10px;box-sizing:border-box;background:#fff;border:1px solid #a6a6a6;border-radius:2.5px;box-shadow:0 0 0 1.3px #e9eef7;overflow:hidden"><div style="position:absolute;right:0;top:1px;width:13.8px;bottom:1px;background:#e8ecf4"><svg width="13.8" height="15" viewBox="0 0 13.8 15" style="position:absolute;left:0;top:0"><path d="M3.1 6.0 L10.5 6.0 L6.8 9.9 Z" fill="#a6a6a6"/></svg></div></div>
<div style="position:absolute;left:345.90px;top:353.30px;width:74.10px;height:19.10px;box-sizing:border-box;background:#fff;border:1px solid #a6a6a6;border-radius:2.5px;box-shadow:0 0 0 1.3px #e9eef7;overflow:hidden"><div style="position:absolute;right:0;top:1px;width:13.8px;bottom:1px;background:#e8ecf4"><svg width="13.8" height="15" viewBox="0 0 13.8 15" style="position:absolute;left:0;top:0"><path d="M3.1 6.0 L10.5 6.0 L6.8 9.9 Z" fill="#a6a6a6"/></svg></div></div>
<div style="position:absolute;left:421.70px;top:353.30px;width:82.10px;height:19.10px;box-sizing:border-box;background:#fff;border:1px solid #a6a6a6;border-radius:2.5px;box-shadow:0 0 0 1.3px #e9eef7;overflow:hidden"><div style="position:absolute;right:0;top:1px;width:13.8px;bottom:1px;background:#e8ecf4"><svg width="13.8" height="15" viewBox="0 0 13.8 15" style="position:absolute;left:0;top:0"><path d="M3.1 6.0 L10.5 6.0 L6.8 9.9 Z" fill="#a6a6a6"/></svg></div></div>
<div style="position:absolute;left:506.90px;top:353.30px;width:85.10px;height:19.10px;box-sizing:border-box;background:#e0ffff;border:1px solid #a6a6a6;border-radius:2.5px;box-shadow:0 0 0 1.3px #e9eef7;overflow:hidden"><div style="position:absolute;right:0;top:1px;width:13.8px;bottom:1px;background:#e8ecf4"><svg width="13.8" height="15" viewBox="0 0 13.8 15" style="position:absolute;left:0;top:0"><path d="M3.1 6.0 L10.5 6.0 L6.8 9.9 Z" fill="#a6a6a6"/></svg></div></div>
<div style="position:absolute;left:592.00px;top:353.30px;width:53.20px;height:19.10px;box-sizing:border-box;background:#e0ffff;border:1px solid #a6a6a6;border-radius:2.5px;box-shadow:0 0 0 1.3px #e9eef7;overflow:hidden"><div style="position:absolute;right:0;top:1px;width:13.8px;bottom:1px;background:#e8ecf4"><svg width="13.8" height="15" viewBox="0 0 13.8 15" style="position:absolute;left:0;top:0"><path d="M3.1 6.0 L10.5 6.0 L6.8 9.9 Z" fill="#a6a6a6"/></svg></div></div>
<div style="position:absolute;left:646.90px;top:353.30px;width:66.90px;height:19.10px;box-sizing:border-box;background:#e0ffff;border:1px solid #a6a6a6;border-radius:2.5px;box-shadow:0 0 0 1.3px #e9eef7;overflow:hidden"><div style="position:absolute;right:0;top:1px;width:13.8px;bottom:1px;background:#e8ecf4"><svg width="13.8" height="15" viewBox="0 0 13.8 15" style="position:absolute;left:0;top:0"><path d="M3.1 6.0 L10.5 6.0 L6.8 9.9 Z" fill="#a6a6a6"/></svg></div></div>
<div style="position:absolute;left:714.80px;top:353.30px;width:55.10px;height:19.10px;box-sizing:border-box;background:#fff;border:1px solid #aeaeae;border-right-color:#c3d5ec;border-bottom-color:#c3d5ec;border-radius:2.5px;box-shadow:0 0 0 1.5px #e9eef7"></div>
<div style="position:absolute;left:771.70px;top:353.30px;width:70.50px;height:19.10px;box-sizing:border-box;background:#fff;border:1px solid #aeaeae;border-right-color:#c3d5ec;border-bottom-color:#c3d5ec;border-radius:2.5px;box-shadow:0 0 0 1.5px #e9eef7"></div>
<div style="position:absolute;left:844.00px;top:353.30px;width:72.10px;height:19.10px;box-sizing:border-box;background:#e0ffff;border:1px solid #a6a6a6;border-radius:2.5px;box-shadow:0 0 0 1.3px #e9eef7;overflow:hidden"><div style="position:absolute;right:0;top:1px;width:13.8px;bottom:1px;background:#e8ecf4"><svg width="13.8" height="15" viewBox="0 0 13.8 15" style="position:absolute;left:0;top:0"><path d="M3.1 6.0 L10.5 6.0 L6.8 9.9 Z" fill="#a6a6a6"/></svg></div></div>
<div style="position:absolute;left:916.10px;top:353.30px;width:51.90px;height:19.10px;box-sizing:border-box;background:#e0ffff;border:1px solid #a6a6a6;border-radius:2.5px;box-shadow:0 0 0 1.3px #e9eef7;overflow:hidden"><div style="position:absolute;right:0;top:1px;width:13.8px;bottom:1px;background:#e8ecf4"><svg width="13.8" height="15" viewBox="0 0 13.8 15" style="position:absolute;left:0;top:0"><path d="M3.1 6.0 L10.5 6.0 L6.8 9.9 Z" fill="#a6a6a6"/></svg></div></div>
<div style="position:absolute;left:970.20px;top:353.30px;width:55.00px;height:19.10px;box-sizing:border-box;background:#e0ffff;border:1px solid #a6a6a6;border-radius:2.5px;box-shadow:0 0 0 1.3px #e9eef7;overflow:hidden"><div style="position:absolute;right:0;top:1px;width:13.8px;bottom:1px;background:#e8ecf4"><svg width="13.8" height="15" viewBox="0 0 13.8 15" style="position:absolute;left:0;top:0"><path d="M3.1 6.0 L10.5 6.0 L6.8 9.9 Z" fill="#a6a6a6"/></svg></div></div>
<div style="position:absolute;left:1027.20px;top:353.30px;width:67.00px;height:19.10px;box-sizing:border-box;background:#e0ffff;border:1px solid #a6a6a6;border-radius:2.5px;box-shadow:0 0 0 1.3px #e9eef7;overflow:hidden"><div style="position:absolute;right:0;top:1px;width:13.8px;bottom:1px;background:#e8ecf4"><svg width="13.8" height="15" viewBox="0 0 13.8 15" style="position:absolute;left:0;top:0"><path d="M3.1 6.0 L10.5 6.0 L6.8 9.9 Z" fill="#a6a6a6"/></svg></div></div>
<div style="position:absolute;left:1096.00px;top:353.30px;width:75.80px;height:19.10px;box-sizing:border-box;background:#e0ffff;border:1px solid #a6a6a6;border-radius:2.5px;box-shadow:0 0 0 1.3px #e9eef7;overflow:hidden"><div style="position:absolute;right:0;top:1px;width:13.8px;bottom:1px;background:#e8ecf4"><svg width="13.8" height="15" viewBox="0 0 13.8 15" style="position:absolute;left:0;top:0"><path d="M3.1 6.0 L10.5 6.0 L6.8 9.9 Z" fill="#a6a6a6"/></svg></div></div>
<div style="position:absolute;left:1173.70px;top:353.30px;width:64.00px;height:19.10px;box-sizing:border-box;background:#fff;border:1px solid #aeaeae;border-right-color:#c3d5ec;border-bottom-color:#c3d5ec;border-radius:2.5px;box-shadow:0 0 0 1.5px #e9eef7"></div>
<div style="position:absolute;left:1239.80px;top:353.30px;width:90.10px;height:19.10px;box-sizing:border-box;background:#fff;border:1px solid #aeaeae;border-right-color:#c3d5ec;border-bottom-color:#c3d5ec;border-radius:2.5px;box-shadow:0 0 0 1.5px #e9eef7"></div>
<div style="position:absolute;left:1332.20px;top:353.30px;width:75.50px;height:19.10px;box-sizing:border-box;background:#fff;border:1px solid #a6a6a6;border-radius:2.5px;box-shadow:0 0 0 1.3px #e9eef7;overflow:hidden"><div style="position:absolute;right:0;top:1px;width:13.8px;bottom:1px;background:#e8ecf4"><svg width="13.8" height="15" viewBox="0 0 13.8 15" style="position:absolute;left:0;top:0"><path d="M3.1 6.0 L10.5 6.0 L6.8 9.9 Z" fill="#a6a6a6"/></svg></div></div>
<div style="position:absolute;left:1409.70px;top:353.30px;width:54.10px;height:19.10px;box-sizing:border-box;background:#fff;border:1px solid #a6a6a6;border-radius:2.5px;box-shadow:0 0 0 1.3px #e9eef7;overflow:hidden"><div style="position:absolute;right:0;top:1px;width:13.8px;bottom:1px;background:#e8ecf4"><svg width="13.8" height="15" viewBox="0 0 13.8 15" style="position:absolute;left:0;top:0"><path d="M3.1 6.0 L10.5 6.0 L6.8 9.9 Z" fill="#a6a6a6"/></svg></div></div>
<div style="position:absolute;left:1465.90px;top:353.30px;width:54.30px;height:19.10px;box-sizing:border-box;background:#fff;border:1px solid #a6a6a6;border-radius:2.5px;box-shadow:0 0 0 1.3px #e9eef7;overflow:hidden"><div style="position:absolute;right:0;top:1px;width:13.8px;bottom:1px;background:#e8ecf4"><svg width="13.8" height="15" viewBox="0 0 13.8 15" style="position:absolute;left:0;top:0"><path d="M3.1 6.0 L10.5 6.0 L6.8 9.9 Z" fill="#a6a6a6"/></svg></div></div>
<div style="position:absolute;left:30.30px;top:374.63px;width:38.60px;height:19.10px;box-sizing:border-box;background:#fff;border:1px solid #aeaeae;border-right-color:#c3d5ec;border-bottom-color:#c3d5ec;border-radius:2.5px;box-shadow:0 0 0 1.5px #e9eef7;clip-path:inset(-2px -2px -2px -0.3px)"></div>
<div style="position:absolute;left:70.80px;top:374.63px;width:31.10px;height:19.10px;box-sizing:border-box;background:#fff;border:1px solid #aeaeae;border-right-color:#c3d5ec;border-bottom-color:#c3d5ec;border-radius:2.5px;box-shadow:0 0 0 1.5px #e9eef7"></div>
<div style="position:absolute;left:103.70px;top:374.63px;width:33.20px;height:19.10px;box-sizing:border-box;background:#fff;border:1px solid #aeaeae;border-right-color:#c3d5ec;border-bottom-color:#c3d5ec;border-radius:2.5px;box-shadow:0 0 0 1.5px #e9eef7"></div>
<div style="position:absolute;left:138.90px;top:374.63px;width:51.10px;height:19.10px;box-sizing:border-box;background:#fff;border:1px solid #a6a6a6;border-radius:2.5px;box-shadow:0 0 0 1.3px #e9eef7;overflow:hidden"><div style="position:absolute;right:0;top:1px;width:13.8px;bottom:1px;background:#e8ecf4"><svg width="13.8" height="15" viewBox="0 0 13.8 15" style="position:absolute;left:0;top:0"><path d="M3.1 6.0 L10.5 6.0 L6.8 9.9 Z" fill="#a6a6a6"/></svg></div></div>
<div style="position:absolute;left:191.70px;top:374.63px;width:74.60px;height:19.10px;box-sizing:border-box;background:#fff;border:1px solid #a6a6a6;border-radius:2.5px;box-shadow:0 0 0 1.3px #e9eef7;overflow:hidden"><div style="position:absolute;right:0;top:1px;width:13.8px;bottom:1px;background:#e8ecf4"><svg width="13.8" height="15" viewBox="0 0 13.8 15" style="position:absolute;left:0;top:0"><path d="M3.1 6.0 L10.5 6.0 L6.8 9.9 Z" fill="#a6a6a6"/></svg></div></div>
<div style="position:absolute;left:269.70px;top:374.63px;width:74.10px;height:19.10px;box-sizing:border-box;background:#fff;border:1px solid #a6a6a6;border-radius:2.5px;box-shadow:0 0 0 1.3px #e9eef7;overflow:hidden"><div style="position:absolute;right:0;top:1px;width:13.8px;bottom:1px;background:#e8ecf4"><svg width="13.8" height="15" viewBox="0 0 13.8 15" style="position:absolute;left:0;top:0"><path d="M3.1 6.0 L10.5 6.0 L6.8 9.9 Z" fill="#a6a6a6"/></svg></div></div>
<div style="position:absolute;left:345.90px;top:374.63px;width:74.10px;height:19.10px;box-sizing:border-box;background:#fff;border:1px solid #a6a6a6;border-radius:2.5px;box-shadow:0 0 0 1.3px #e9eef7;overflow:hidden"><div style="position:absolute;right:0;top:1px;width:13.8px;bottom:1px;background:#e8ecf4"><svg width="13.8" height="15" viewBox="0 0 13.8 15" style="position:absolute;left:0;top:0"><path d="M3.1 6.0 L10.5 6.0 L6.8 9.9 Z" fill="#a6a6a6"/></svg></div></div>
<div style="position:absolute;left:421.70px;top:374.63px;width:82.10px;height:19.10px;box-sizing:border-box;background:#fff;border:1px solid #a6a6a6;border-radius:2.5px;box-shadow:0 0 0 1.3px #e9eef7;overflow:hidden"><div style="position:absolute;right:0;top:1px;width:13.8px;bottom:1px;background:#e8ecf4"><svg width="13.8" height="15" viewBox="0 0 13.8 15" style="position:absolute;left:0;top:0"><path d="M3.1 6.0 L10.5 6.0 L6.8 9.9 Z" fill="#a6a6a6"/></svg></div></div>
<div style="position:absolute;left:506.90px;top:374.63px;width:85.10px;height:19.10px;box-sizing:border-box;background:#e0ffff;border:1px solid #a6a6a6;border-radius:2.5px;box-shadow:0 0 0 1.3px #e9eef7;overflow:hidden"><div style="position:absolute;right:0;top:1px;width:13.8px;bottom:1px;background:#e8ecf4"><svg width="13.8" height="15" viewBox="0 0 13.8 15" style="position:absolute;left:0;top:0"><path d="M3.1 6.0 L10.5 6.0 L6.8 9.9 Z" fill="#a6a6a6"/></svg></div></div>
<div style="position:absolute;left:592.00px;top:374.63px;width:53.20px;height:19.10px;box-sizing:border-box;background:#e0ffff;border:1px solid #a6a6a6;border-radius:2.5px;box-shadow:0 0 0 1.3px #e9eef7;overflow:hidden"><div style="position:absolute;right:0;top:1px;width:13.8px;bottom:1px;background:#e8ecf4"><svg width="13.8" height="15" viewBox="0 0 13.8 15" style="position:absolute;left:0;top:0"><path d="M3.1 6.0 L10.5 6.0 L6.8 9.9 Z" fill="#a6a6a6"/></svg></div></div>
<div style="position:absolute;left:646.90px;top:374.63px;width:66.90px;height:19.10px;box-sizing:border-box;background:#e0ffff;border:1px solid #a6a6a6;border-radius:2.5px;box-shadow:0 0 0 1.3px #e9eef7;overflow:hidden"><div style="position:absolute;right:0;top:1px;width:13.8px;bottom:1px;background:#e8ecf4"><svg width="13.8" height="15" viewBox="0 0 13.8 15" style="position:absolute;left:0;top:0"><path d="M3.1 6.0 L10.5 6.0 L6.8 9.9 Z" fill="#a6a6a6"/></svg></div></div>
<div style="position:absolute;left:714.80px;top:374.63px;width:55.10px;height:19.10px;box-sizing:border-box;background:#fff;border:1px solid #aeaeae;border-right-color:#c3d5ec;border-bottom-color:#c3d5ec;border-radius:2.5px;box-shadow:0 0 0 1.5px #e9eef7"></div>
<div style="position:absolute;left:771.70px;top:374.63px;width:70.50px;height:19.10px;box-sizing:border-box;background:#fff;border:1px solid #aeaeae;border-right-color:#c3d5ec;border-bottom-color:#c3d5ec;border-radius:2.5px;box-shadow:0 0 0 1.5px #e9eef7"></div>
<div style="position:absolute;left:844.00px;top:374.63px;width:72.10px;height:19.10px;box-sizing:border-box;background:#e0ffff;border:1px solid #a6a6a6;border-radius:2.5px;box-shadow:0 0 0 1.3px #e9eef7;overflow:hidden"><div style="position:absolute;right:0;top:1px;width:13.8px;bottom:1px;background:#e8ecf4"><svg width="13.8" height="15" viewBox="0 0 13.8 15" style="position:absolute;left:0;top:0"><path d="M3.1 6.0 L10.5 6.0 L6.8 9.9 Z" fill="#a6a6a6"/></svg></div></div>
<div style="position:absolute;left:916.10px;top:374.63px;width:51.90px;height:19.10px;box-sizing:border-box;background:#e0ffff;border:1px solid #a6a6a6;border-radius:2.5px;box-shadow:0 0 0 1.3px #e9eef7;overflow:hidden"><div style="position:absolute;right:0;top:1px;width:13.8px;bottom:1px;background:#e8ecf4"><svg width="13.8" height="15" viewBox="0 0 13.8 15" style="position:absolute;left:0;top:0"><path d="M3.1 6.0 L10.5 6.0 L6.8 9.9 Z" fill="#a6a6a6"/></svg></div></div>
<div style="position:absolute;left:970.20px;top:374.63px;width:55.00px;height:19.10px;box-sizing:border-box;background:#e0ffff;border:1px solid #a6a6a6;border-radius:2.5px;box-shadow:0 0 0 1.3px #e9eef7;overflow:hidden"><div style="position:absolute;right:0;top:1px;width:13.8px;bottom:1px;background:#e8ecf4"><svg width="13.8" height="15" viewBox="0 0 13.8 15" style="position:absolute;left:0;top:0"><path d="M3.1 6.0 L10.5 6.0 L6.8 9.9 Z" fill="#a6a6a6"/></svg></div></div>
<div style="position:absolute;left:1027.20px;top:374.63px;width:67.00px;height:19.10px;box-sizing:border-box;background:#e0ffff;border:1px solid #a6a6a6;border-radius:2.5px;box-shadow:0 0 0 1.3px #e9eef7;overflow:hidden"><div style="position:absolute;right:0;top:1px;width:13.8px;bottom:1px;background:#e8ecf4"><svg width="13.8" height="15" viewBox="0 0 13.8 15" style="position:absolute;left:0;top:0"><path d="M3.1 6.0 L10.5 6.0 L6.8 9.9 Z" fill="#a6a6a6"/></svg></div></div>
<div style="position:absolute;left:1096.00px;top:374.63px;width:75.80px;height:19.10px;box-sizing:border-box;background:#e0ffff;border:1px solid #a6a6a6;border-radius:2.5px;box-shadow:0 0 0 1.3px #e9eef7;overflow:hidden"><div style="position:absolute;right:0;top:1px;width:13.8px;bottom:1px;background:#e8ecf4"><svg width="13.8" height="15" viewBox="0 0 13.8 15" style="position:absolute;left:0;top:0"><path d="M3.1 6.0 L10.5 6.0 L6.8 9.9 Z" fill="#a6a6a6"/></svg></div></div>
<div style="position:absolute;left:1173.70px;top:374.63px;width:64.00px;height:19.10px;box-sizing:border-box;background:#fff;border:1px solid #aeaeae;border-right-color:#c3d5ec;border-bottom-color:#c3d5ec;border-radius:2.5px;box-shadow:0 0 0 1.5px #e9eef7"></div>
<div style="position:absolute;left:1239.80px;top:374.63px;width:90.10px;height:19.10px;box-sizing:border-box;background:#fff;border:1px solid #aeaeae;border-right-color:#c3d5ec;border-bottom-color:#c3d5ec;border-radius:2.5px;box-shadow:0 0 0 1.5px #e9eef7"></div>
<div style="position:absolute;left:1332.20px;top:374.63px;width:75.50px;height:19.10px;box-sizing:border-box;background:#fff;border:1px solid #a6a6a6;border-radius:2.5px;box-shadow:0 0 0 1.3px #e9eef7;overflow:hidden"><div style="position:absolute;right:0;top:1px;width:13.8px;bottom:1px;background:#e8ecf4"><svg width="13.8" height="15" viewBox="0 0 13.8 15" style="position:absolute;left:0;top:0"><path d="M3.1 6.0 L10.5 6.0 L6.8 9.9 Z" fill="#a6a6a6"/></svg></div></div>
<div style="position:absolute;left:1409.70px;top:374.63px;width:54.10px;height:19.10px;box-sizing:border-box;background:#fff;border:1px solid #a6a6a6;border-radius:2.5px;box-shadow:0 0 0 1.3px #e9eef7;overflow:hidden"><div style="position:absolute;right:0;top:1px;width:13.8px;bottom:1px;background:#e8ecf4"><svg width="13.8" height="15" viewBox="0 0 13.8 15" style="position:absolute;left:0;top:0"><path d="M3.1 6.0 L10.5 6.0 L6.8 9.9 Z" fill="#a6a6a6"/></svg></div></div>
<div style="position:absolute;left:1465.90px;top:374.63px;width:54.30px;height:19.10px;box-sizing:border-box;background:#fff;border:1px solid #a6a6a6;border-radius:2.5px;box-shadow:0 0 0 1.3px #e9eef7;overflow:hidden"><div style="position:absolute;right:0;top:1px;width:13.8px;bottom:1px;background:#e8ecf4"><svg width="13.8" height="15" viewBox="0 0 13.8 15" style="position:absolute;left:0;top:0"><path d="M3.1 6.0 L10.5 6.0 L6.8 9.9 Z" fill="#a6a6a6"/></svg></div></div>
<div style="position:absolute;left:30.30px;top:395.97px;width:38.60px;height:19.10px;box-sizing:border-box;background:#fff;border:1px solid #aeaeae;border-right-color:#c3d5ec;border-bottom-color:#c3d5ec;border-radius:2.5px;box-shadow:0 0 0 1.5px #e9eef7;clip-path:inset(-2px -2px -2px -0.3px)"></div>
<div style="position:absolute;left:70.80px;top:395.97px;width:31.10px;height:19.10px;box-sizing:border-box;background:#fff;border:1px solid #aeaeae;border-right-color:#c3d5ec;border-bottom-color:#c3d5ec;border-radius:2.5px;box-shadow:0 0 0 1.5px #e9eef7"></div>
<div style="position:absolute;left:103.70px;top:395.97px;width:33.20px;height:19.10px;box-sizing:border-box;background:#fff;border:1px solid #aeaeae;border-right-color:#c3d5ec;border-bottom-color:#c3d5ec;border-radius:2.5px;box-shadow:0 0 0 1.5px #e9eef7"></div>
<div style="position:absolute;left:138.90px;top:395.97px;width:51.10px;height:19.10px;box-sizing:border-box;background:#fff;border:1px solid #a6a6a6;border-radius:2.5px;box-shadow:0 0 0 1.3px #e9eef7;overflow:hidden"><div style="position:absolute;right:0;top:1px;width:13.8px;bottom:1px;background:#e8ecf4"><svg width="13.8" height="15" viewBox="0 0 13.8 15" style="position:absolute;left:0;top:0"><path d="M3.1 6.0 L10.5 6.0 L6.8 9.9 Z" fill="#a6a6a6"/></svg></div></div>
<div style="position:absolute;left:191.70px;top:395.97px;width:74.60px;height:19.10px;box-sizing:border-box;background:#fff;border:1px solid #a6a6a6;border-radius:2.5px;box-shadow:0 0 0 1.3px #e9eef7;overflow:hidden"><div style="position:absolute;right:0;top:1px;width:13.8px;bottom:1px;background:#e8ecf4"><svg width="13.8" height="15" viewBox="0 0 13.8 15" style="position:absolute;left:0;top:0"><path d="M3.1 6.0 L10.5 6.0 L6.8 9.9 Z" fill="#a6a6a6"/></svg></div></div>
<div style="position:absolute;left:269.70px;top:395.97px;width:74.10px;height:19.10px;box-sizing:border-box;background:#fff;border:1px solid #a6a6a6;border-radius:2.5px;box-shadow:0 0 0 1.3px #e9eef7;overflow:hidden"><div style="position:absolute;right:0;top:1px;width:13.8px;bottom:1px;background:#e8ecf4"><svg width="13.8" height="15" viewBox="0 0 13.8 15" style="position:absolute;left:0;top:0"><path d="M3.1 6.0 L10.5 6.0 L6.8 9.9 Z" fill="#a6a6a6"/></svg></div></div>
<div style="position:absolute;left:345.90px;top:395.97px;width:74.10px;height:19.10px;box-sizing:border-box;background:#fff;border:1px solid #a6a6a6;border-radius:2.5px;box-shadow:0 0 0 1.3px #e9eef7;overflow:hidden"><div style="position:absolute;right:0;top:1px;width:13.8px;bottom:1px;background:#e8ecf4"><svg width="13.8" height="15" viewBox="0 0 13.8 15" style="position:absolute;left:0;top:0"><path d="M3.1 6.0 L10.5 6.0 L6.8 9.9 Z" fill="#a6a6a6"/></svg></div></div>
<div style="position:absolute;left:421.70px;top:395.97px;width:82.10px;height:19.10px;box-sizing:border-box;background:#fff;border:1px solid #a6a6a6;border-radius:2.5px;box-shadow:0 0 0 1.3px #e9eef7;overflow:hidden"><div style="position:absolute;right:0;top:1px;width:13.8px;bottom:1px;background:#e8ecf4"><svg width="13.8" height="15" viewBox="0 0 13.8 15" style="position:absolute;left:0;top:0"><path d="M3.1 6.0 L10.5 6.0 L6.8 9.9 Z" fill="#a6a6a6"/></svg></div></div>
<div style="position:absolute;left:506.90px;top:395.97px;width:85.10px;height:19.10px;box-sizing:border-box;background:#e0ffff;border:1px solid #a6a6a6;border-radius:2.5px;box-shadow:0 0 0 1.3px #e9eef7;overflow:hidden"><div style="position:absolute;right:0;top:1px;width:13.8px;bottom:1px;background:#e8ecf4"><svg width="13.8" height="15" viewBox="0 0 13.8 15" style="position:absolute;left:0;top:0"><path d="M3.1 6.0 L10.5 6.0 L6.8 9.9 Z" fill="#a6a6a6"/></svg></div></div>
<div style="position:absolute;left:592.00px;top:395.97px;width:53.20px;height:19.10px;box-sizing:border-box;background:#e0ffff;border:1px solid #a6a6a6;border-radius:2.5px;box-shadow:0 0 0 1.3px #e9eef7;overflow:hidden"><div style="position:absolute;right:0;top:1px;width:13.8px;bottom:1px;background:#e8ecf4"><svg width="13.8" height="15" viewBox="0 0 13.8 15" style="position:absolute;left:0;top:0"><path d="M3.1 6.0 L10.5 6.0 L6.8 9.9 Z" fill="#a6a6a6"/></svg></div></div>
<div style="position:absolute;left:646.90px;top:395.97px;width:66.90px;height:19.10px;box-sizing:border-box;background:#e0ffff;border:1px solid #a6a6a6;border-radius:2.5px;box-shadow:0 0 0 1.3px #e9eef7;overflow:hidden"><div style="position:absolute;right:0;top:1px;width:13.8px;bottom:1px;background:#e8ecf4"><svg width="13.8" height="15" viewBox="0 0 13.8 15" style="position:absolute;left:0;top:0"><path d="M3.1 6.0 L10.5 6.0 L6.8 9.9 Z" fill="#a6a6a6"/></svg></div></div>
<div style="position:absolute;left:714.80px;top:395.97px;width:55.10px;height:19.10px;box-sizing:border-box;background:#fff;border:1px solid #aeaeae;border-right-color:#c3d5ec;border-bottom-color:#c3d5ec;border-radius:2.5px;box-shadow:0 0 0 1.5px #e9eef7"></div>
<div style="position:absolute;left:771.70px;top:395.97px;width:70.50px;height:19.10px;box-sizing:border-box;background:#fff;border:1px solid #aeaeae;border-right-color:#c3d5ec;border-bottom-color:#c3d5ec;border-radius:2.5px;box-shadow:0 0 0 1.5px #e9eef7"></div>
<div style="position:absolute;left:844.00px;top:395.97px;width:72.10px;height:19.10px;box-sizing:border-box;background:#e0ffff;border:1px solid #a6a6a6;border-radius:2.5px;box-shadow:0 0 0 1.3px #e9eef7;overflow:hidden"><div style="position:absolute;right:0;top:1px;width:13.8px;bottom:1px;background:#e8ecf4"><svg width="13.8" height="15" viewBox="0 0 13.8 15" style="position:absolute;left:0;top:0"><path d="M3.1 6.0 L10.5 6.0 L6.8 9.9 Z" fill="#a6a6a6"/></svg></div></div>
<div style="position:absolute;left:916.10px;top:395.97px;width:51.90px;height:19.10px;box-sizing:border-box;background:#e0ffff;border:1px solid #a6a6a6;border-radius:2.5px;box-shadow:0 0 0 1.3px #e9eef7;overflow:hidden"><div style="position:absolute;right:0;top:1px;width:13.8px;bottom:1px;background:#e8ecf4"><svg width="13.8" height="15" viewBox="0 0 13.8 15" style="position:absolute;left:0;top:0"><path d="M3.1 6.0 L10.5 6.0 L6.8 9.9 Z" fill="#a6a6a6"/></svg></div></div>
<div style="position:absolute;left:970.20px;top:395.97px;width:55.00px;height:19.10px;box-sizing:border-box;background:#e0ffff;border:1px solid #a6a6a6;border-radius:2.5px;box-shadow:0 0 0 1.3px #e9eef7;overflow:hidden"><div style="position:absolute;right:0;top:1px;width:13.8px;bottom:1px;background:#e8ecf4"><svg width="13.8" height="15" viewBox="0 0 13.8 15" style="position:absolute;left:0;top:0"><path d="M3.1 6.0 L10.5 6.0 L6.8 9.9 Z" fill="#a6a6a6"/></svg></div></div>
<div style="position:absolute;left:1027.20px;top:395.97px;width:67.00px;height:19.10px;box-sizing:border-box;background:#e0ffff;border:1px solid #a6a6a6;border-radius:2.5px;box-shadow:0 0 0 1.3px #e9eef7;overflow:hidden"><div style="position:absolute;right:0;top:1px;width:13.8px;bottom:1px;background:#e8ecf4"><svg width="13.8" height="15" viewBox="0 0 13.8 15" style="position:absolute;left:0;top:0"><path d="M3.1 6.0 L10.5 6.0 L6.8 9.9 Z" fill="#a6a6a6"/></svg></div></div>
<div style="position:absolute;left:1096.00px;top:395.97px;width:75.80px;height:19.10px;box-sizing:border-box;background:#e0ffff;border:1px solid #a6a6a6;border-radius:2.5px;box-shadow:0 0 0 1.3px #e9eef7;overflow:hidden"><div style="position:absolute;right:0;top:1px;width:13.8px;bottom:1px;background:#e8ecf4"><svg width="13.8" height="15" viewBox="0 0 13.8 15" style="position:absolute;left:0;top:0"><path d="M3.1 6.0 L10.5 6.0 L6.8 9.9 Z" fill="#a6a6a6"/></svg></div></div>
<div style="position:absolute;left:1173.70px;top:395.97px;width:64.00px;height:19.10px;box-sizing:border-box;background:#fff;border:1px solid #aeaeae;border-right-color:#c3d5ec;border-bottom-color:#c3d5ec;border-radius:2.5px;box-shadow:0 0 0 1.5px #e9eef7"></div>
<div style="position:absolute;left:1239.80px;top:395.97px;width:90.10px;height:19.10px;box-sizing:border-box;background:#fff;border:1px solid #aeaeae;border-right-color:#c3d5ec;border-bottom-color:#c3d5ec;border-radius:2.5px;box-shadow:0 0 0 1.5px #e9eef7"></div>
<div style="position:absolute;left:1332.20px;top:395.97px;width:75.50px;height:19.10px;box-sizing:border-box;background:#fff;border:1px solid #a6a6a6;border-radius:2.5px;box-shadow:0 0 0 1.3px #e9eef7;overflow:hidden"><div style="position:absolute;right:0;top:1px;width:13.8px;bottom:1px;background:#e8ecf4"><svg width="13.8" height="15" viewBox="0 0 13.8 15" style="position:absolute;left:0;top:0"><path d="M3.1 6.0 L10.5 6.0 L6.8 9.9 Z" fill="#a6a6a6"/></svg></div></div>
<div style="position:absolute;left:1409.70px;top:395.97px;width:54.10px;height:19.10px;box-sizing:border-box;background:#fff;border:1px solid #a6a6a6;border-radius:2.5px;box-shadow:0 0 0 1.3px #e9eef7;overflow:hidden"><div style="position:absolute;right:0;top:1px;width:13.8px;bottom:1px;background:#e8ecf4"><svg width="13.8" height="15" viewBox="0 0 13.8 15" style="position:absolute;left:0;top:0"><path d="M3.1 6.0 L10.5 6.0 L6.8 9.9 Z" fill="#a6a6a6"/></svg></div></div>
<div style="position:absolute;left:1465.90px;top:395.97px;width:54.30px;height:19.10px;box-sizing:border-box;background:#fff;border:1px solid #a6a6a6;border-radius:2.5px;box-shadow:0 0 0 1.3px #e9eef7;overflow:hidden"><div style="position:absolute;right:0;top:1px;width:13.8px;bottom:1px;background:#e8ecf4"><svg width="13.8" height="15" viewBox="0 0 13.8 15" style="position:absolute;left:0;top:0"><path d="M3.1 6.0 L10.5 6.0 L6.8 9.9 Z" fill="#a6a6a6"/></svg></div></div>
<div style="position:absolute;left:30.30px;top:417.30px;width:38.60px;height:19.10px;box-sizing:border-box;background:#fff;border:1px solid #aeaeae;border-right-color:#c3d5ec;border-bottom-color:#c3d5ec;border-radius:2.5px;box-shadow:0 0 0 1.5px #e9eef7;clip-path:inset(-2px -2px -2px -0.3px)"></div>
<div style="position:absolute;left:70.80px;top:417.30px;width:31.10px;height:19.10px;box-sizing:border-box;background:#fff;border:1px solid #aeaeae;border-right-color:#c3d5ec;border-bottom-color:#c3d5ec;border-radius:2.5px;box-shadow:0 0 0 1.5px #e9eef7"></div>
<div style="position:absolute;left:103.70px;top:417.30px;width:33.20px;height:19.10px;box-sizing:border-box;background:#fff;border:1px solid #aeaeae;border-right-color:#c3d5ec;border-bottom-color:#c3d5ec;border-radius:2.5px;box-shadow:0 0 0 1.5px #e9eef7"></div>
<div style="position:absolute;left:138.90px;top:417.30px;width:51.10px;height:19.10px;box-sizing:border-box;background:#fff;border:1px solid #a6a6a6;border-radius:2.5px;box-shadow:0 0 0 1.3px #e9eef7;overflow:hidden"><div style="position:absolute;right:0;top:1px;width:13.8px;bottom:1px;background:#e8ecf4"><svg width="13.8" height="15" viewBox="0 0 13.8 15" style="position:absolute;left:0;top:0"><path d="M3.1 6.0 L10.5 6.0 L6.8 9.9 Z" fill="#a6a6a6"/></svg></div></div>
<div style="position:absolute;left:191.70px;top:417.30px;width:74.60px;height:19.10px;box-sizing:border-box;background:#fff;border:1px solid #a6a6a6;border-radius:2.5px;box-shadow:0 0 0 1.3px #e9eef7;overflow:hidden"><div style="position:absolute;right:0;top:1px;width:13.8px;bottom:1px;background:#e8ecf4"><svg width="13.8" height="15" viewBox="0 0 13.8 15" style="position:absolute;left:0;top:0"><path d="M3.1 6.0 L10.5 6.0 L6.8 9.9 Z" fill="#a6a6a6"/></svg></div></div>
<div style="position:absolute;left:269.70px;top:417.30px;width:74.10px;height:19.10px;box-sizing:border-box;background:#fff;border:1px solid #a6a6a6;border-radius:2.5px;box-shadow:0 0 0 1.3px #e9eef7;overflow:hidden"><div style="position:absolute;right:0;top:1px;width:13.8px;bottom:1px;background:#e8ecf4"><svg width="13.8" height="15" viewBox="0 0 13.8 15" style="position:absolute;left:0;top:0"><path d="M3.1 6.0 L10.5 6.0 L6.8 9.9 Z" fill="#a6a6a6"/></svg></div></div>
<div style="position:absolute;left:345.90px;top:417.30px;width:74.10px;height:19.10px;box-sizing:border-box;background:#fff;border:1px solid #a6a6a6;border-radius:2.5px;box-shadow:0 0 0 1.3px #e9eef7;overflow:hidden"><div style="position:absolute;right:0;top:1px;width:13.8px;bottom:1px;background:#e8ecf4"><svg width="13.8" height="15" viewBox="0 0 13.8 15" style="position:absolute;left:0;top:0"><path d="M3.1 6.0 L10.5 6.0 L6.8 9.9 Z" fill="#a6a6a6"/></svg></div></div>
<div style="position:absolute;left:421.70px;top:417.30px;width:82.10px;height:19.10px;box-sizing:border-box;background:#fff;border:1px solid #a6a6a6;border-radius:2.5px;box-shadow:0 0 0 1.3px #e9eef7;overflow:hidden"><div style="position:absolute;right:0;top:1px;width:13.8px;bottom:1px;background:#e8ecf4"><svg width="13.8" height="15" viewBox="0 0 13.8 15" style="position:absolute;left:0;top:0"><path d="M3.1 6.0 L10.5 6.0 L6.8 9.9 Z" fill="#a6a6a6"/></svg></div></div>
<div style="position:absolute;left:506.90px;top:417.30px;width:85.10px;height:19.10px;box-sizing:border-box;background:#e0ffff;border:1px solid #a6a6a6;border-radius:2.5px;box-shadow:0 0 0 1.3px #e9eef7;overflow:hidden"><div style="position:absolute;right:0;top:1px;width:13.8px;bottom:1px;background:#e8ecf4"><svg width="13.8" height="15" viewBox="0 0 13.8 15" style="position:absolute;left:0;top:0"><path d="M3.1 6.0 L10.5 6.0 L6.8 9.9 Z" fill="#a6a6a6"/></svg></div></div>
<div style="position:absolute;left:592.00px;top:417.30px;width:53.20px;height:19.10px;box-sizing:border-box;background:#e0ffff;border:1px solid #a6a6a6;border-radius:2.5px;box-shadow:0 0 0 1.3px #e9eef7;overflow:hidden"><div style="position:absolute;right:0;top:1px;width:13.8px;bottom:1px;background:#e8ecf4"><svg width="13.8" height="15" viewBox="0 0 13.8 15" style="position:absolute;left:0;top:0"><path d="M3.1 6.0 L10.5 6.0 L6.8 9.9 Z" fill="#a6a6a6"/></svg></div></div>
<div style="position:absolute;left:646.90px;top:417.30px;width:66.90px;height:19.10px;box-sizing:border-box;background:#e0ffff;border:1px solid #a6a6a6;border-radius:2.5px;box-shadow:0 0 0 1.3px #e9eef7;overflow:hidden"><div style="position:absolute;right:0;top:1px;width:13.8px;bottom:1px;background:#e8ecf4"><svg width="13.8" height="15" viewBox="0 0 13.8 15" style="position:absolute;left:0;top:0"><path d="M3.1 6.0 L10.5 6.0 L6.8 9.9 Z" fill="#a6a6a6"/></svg></div></div>
<div style="position:absolute;left:714.80px;top:417.30px;width:55.10px;height:19.10px;box-sizing:border-box;background:#fff;border:1px solid #aeaeae;border-right-color:#c3d5ec;border-bottom-color:#c3d5ec;border-radius:2.5px;box-shadow:0 0 0 1.5px #e9eef7"></div>
<div style="position:absolute;left:771.70px;top:417.30px;width:70.50px;height:19.10px;box-sizing:border-box;background:#fff;border:1px solid #aeaeae;border-right-color:#c3d5ec;border-bottom-color:#c3d5ec;border-radius:2.5px;box-shadow:0 0 0 1.5px #e9eef7"></div>
<div style="position:absolute;left:844.00px;top:417.30px;width:72.10px;height:19.10px;box-sizing:border-box;background:#e0ffff;border:1px solid #a6a6a6;border-radius:2.5px;box-shadow:0 0 0 1.3px #e9eef7;overflow:hidden"><div style="position:absolute;right:0;top:1px;width:13.8px;bottom:1px;background:#e8ecf4"><svg width="13.8" height="15" viewBox="0 0 13.8 15" style="position:absolute;left:0;top:0"><path d="M3.1 6.0 L10.5 6.0 L6.8 9.9 Z" fill="#a6a6a6"/></svg></div></div>
<div style="position:absolute;left:916.10px;top:417.30px;width:51.90px;height:19.10px;box-sizing:border-box;background:#e0ffff;border:1px solid #a6a6a6;border-radius:2.5px;box-shadow:0 0 0 1.3px #e9eef7;overflow:hidden"><div style="position:absolute;right:0;top:1px;width:13.8px;bottom:1px;background:#e8ecf4"><svg width="13.8" height="15" viewBox="0 0 13.8 15" style="position:absolute;left:0;top:0"><path d="M3.1 6.0 L10.5 6.0 L6.8 9.9 Z" fill="#a6a6a6"/></svg></div></div>
<div style="position:absolute;left:970.20px;top:417.30px;width:55.00px;height:19.10px;box-sizing:border-box;background:#e0ffff;border:1px solid #a6a6a6;border-radius:2.5px;box-shadow:0 0 0 1.3px #e9eef7;overflow:hidden"><div style="position:absolute;right:0;top:1px;width:13.8px;bottom:1px;background:#e8ecf4"><svg width="13.8" height="15" viewBox="0 0 13.8 15" style="position:absolute;left:0;top:0"><path d="M3.1 6.0 L10.5 6.0 L6.8 9.9 Z" fill="#a6a6a6"/></svg></div></div>
<div style="position:absolute;left:1027.20px;top:417.30px;width:67.00px;height:19.10px;box-sizing:border-box;background:#e0ffff;border:1px solid #a6a6a6;border-radius:2.5px;box-shadow:0 0 0 1.3px #e9eef7;overflow:hidden"><div style="position:absolute;right:0;top:1px;width:13.8px;bottom:1px;background:#e8ecf4"><svg width="13.8" height="15" viewBox="0 0 13.8 15" style="position:absolute;left:0;top:0"><path d="M3.1 6.0 L10.5 6.0 L6.8 9.9 Z" fill="#a6a6a6"/></svg></div></div>
<div style="position:absolute;left:1096.00px;top:417.30px;width:75.80px;height:19.10px;box-sizing:border-box;background:#e0ffff;border:1px solid #a6a6a6;border-radius:2.5px;box-shadow:0 0 0 1.3px #e9eef7;overflow:hidden"><div style="position:absolute;right:0;top:1px;width:13.8px;bottom:1px;background:#e8ecf4"><svg width="13.8" height="15" viewBox="0 0 13.8 15" style="position:absolute;left:0;top:0"><path d="M3.1 6.0 L10.5 6.0 L6.8 9.9 Z" fill="#a6a6a6"/></svg></div></div>
<div style="position:absolute;left:1173.70px;top:417.30px;width:64.00px;height:19.10px;box-sizing:border-box;background:#fff;border:1px solid #aeaeae;border-right-color:#c3d5ec;border-bottom-color:#c3d5ec;border-radius:2.5px;box-shadow:0 0 0 1.5px #e9eef7"></div>
<div style="position:absolute;left:1239.80px;top:417.30px;width:90.10px;height:19.10px;box-sizing:border-box;background:#fff;border:1px solid #aeaeae;border-right-color:#c3d5ec;border-bottom-color:#c3d5ec;border-radius:2.5px;box-shadow:0 0 0 1.5px #e9eef7"></div>
<div style="position:absolute;left:1332.20px;top:417.30px;width:75.50px;height:19.10px;box-sizing:border-box;background:#fff;border:1px solid #a6a6a6;border-radius:2.5px;box-shadow:0 0 0 1.3px #e9eef7;overflow:hidden"><div style="position:absolute;right:0;top:1px;width:13.8px;bottom:1px;background:#e8ecf4"><svg width="13.8" height="15" viewBox="0 0 13.8 15" style="position:absolute;left:0;top:0"><path d="M3.1 6.0 L10.5 6.0 L6.8 9.9 Z" fill="#a6a6a6"/></svg></div></div>
<div style="position:absolute;left:1409.70px;top:417.30px;width:54.10px;height:19.10px;box-sizing:border-box;background:#fff;border:1px solid #a6a6a6;border-radius:2.5px;box-shadow:0 0 0 1.3px #e9eef7;overflow:hidden"><div style="position:absolute;right:0;top:1px;width:13.8px;bottom:1px;background:#e8ecf4"><svg width="13.8" height="15" viewBox="0 0 13.8 15" style="position:absolute;left:0;top:0"><path d="M3.1 6.0 L10.5 6.0 L6.8 9.9 Z" fill="#a6a6a6"/></svg></div></div>
<div style="position:absolute;left:1465.90px;top:417.30px;width:54.30px;height:19.10px;box-sizing:border-box;background:#fff;border:1px solid #a6a6a6;border-radius:2.5px;box-shadow:0 0 0 1.3px #e9eef7;overflow:hidden"><div style="position:absolute;right:0;top:1px;width:13.8px;bottom:1px;background:#e8ecf4"><svg width="13.8" height="15" viewBox="0 0 13.8 15" style="position:absolute;left:0;top:0"><path d="M3.1 6.0 L10.5 6.0 L6.8 9.9 Z" fill="#a6a6a6"/></svg></div></div>
<div style="position:absolute;left:30.30px;top:438.63px;width:38.60px;height:19.10px;box-sizing:border-box;background:#fff;border:1px solid #aeaeae;border-right-color:#c3d5ec;border-bottom-color:#c3d5ec;border-radius:2.5px;box-shadow:0 0 0 1.5px #e9eef7;clip-path:inset(-2px -2px -2px -0.3px)"></div>
<div style="position:absolute;left:70.80px;top:438.63px;width:31.10px;height:19.10px;box-sizing:border-box;background:#fff;border:1px solid #aeaeae;border-right-color:#c3d5ec;border-bottom-color:#c3d5ec;border-radius:2.5px;box-shadow:0 0 0 1.5px #e9eef7"></div>
<div style="position:absolute;left:103.70px;top:438.63px;width:33.20px;height:19.10px;box-sizing:border-box;background:#fff;border:1px solid #aeaeae;border-right-color:#c3d5ec;border-bottom-color:#c3d5ec;border-radius:2.5px;box-shadow:0 0 0 1.5px #e9eef7"></div>
<div style="position:absolute;left:138.90px;top:438.63px;width:51.10px;height:19.10px;box-sizing:border-box;background:#fff;border:1px solid #a6a6a6;border-radius:2.5px;box-shadow:0 0 0 1.3px #e9eef7;overflow:hidden"><div style="position:absolute;right:0;top:1px;width:13.8px;bottom:1px;background:#e8ecf4"><svg width="13.8" height="15" viewBox="0 0 13.8 15" style="position:absolute;left:0;top:0"><path d="M3.1 6.0 L10.5 6.0 L6.8 9.9 Z" fill="#a6a6a6"/></svg></div></div>
<div style="position:absolute;left:191.70px;top:438.63px;width:74.60px;height:19.10px;box-sizing:border-box;background:#fff;border:1px solid #a6a6a6;border-radius:2.5px;box-shadow:0 0 0 1.3px #e9eef7;overflow:hidden"><div style="position:absolute;right:0;top:1px;width:13.8px;bottom:1px;background:#e8ecf4"><svg width="13.8" height="15" viewBox="0 0 13.8 15" style="position:absolute;left:0;top:0"><path d="M3.1 6.0 L10.5 6.0 L6.8 9.9 Z" fill="#a6a6a6"/></svg></div></div>
<div style="position:absolute;left:269.70px;top:438.63px;width:74.10px;height:19.10px;box-sizing:border-box;background:#fff;border:1px solid #a6a6a6;border-radius:2.5px;box-shadow:0 0 0 1.3px #e9eef7;overflow:hidden"><div style="position:absolute;right:0;top:1px;width:13.8px;bottom:1px;background:#e8ecf4"><svg width="13.8" height="15" viewBox="0 0 13.8 15" style="position:absolute;left:0;top:0"><path d="M3.1 6.0 L10.5 6.0 L6.8 9.9 Z" fill="#a6a6a6"/></svg></div></div>
<div style="position:absolute;left:345.90px;top:438.63px;width:74.10px;height:19.10px;box-sizing:border-box;background:#fff;border:1px solid #a6a6a6;border-radius:2.5px;box-shadow:0 0 0 1.3px #e9eef7;overflow:hidden"><div style="position:absolute;right:0;top:1px;width:13.8px;bottom:1px;background:#e8ecf4"><svg width="13.8" height="15" viewBox="0 0 13.8 15" style="position:absolute;left:0;top:0"><path d="M3.1 6.0 L10.5 6.0 L6.8 9.9 Z" fill="#a6a6a6"/></svg></div></div>
<div style="position:absolute;left:421.70px;top:438.63px;width:82.10px;height:19.10px;box-sizing:border-box;background:#fff;border:1px solid #a6a6a6;border-radius:2.5px;box-shadow:0 0 0 1.3px #e9eef7;overflow:hidden"><div style="position:absolute;right:0;top:1px;width:13.8px;bottom:1px;background:#e8ecf4"><svg width="13.8" height="15" viewBox="0 0 13.8 15" style="position:absolute;left:0;top:0"><path d="M3.1 6.0 L10.5 6.0 L6.8 9.9 Z" fill="#a6a6a6"/></svg></div></div>
<div style="position:absolute;left:506.90px;top:438.63px;width:85.10px;height:19.10px;box-sizing:border-box;background:#e0ffff;border:1px solid #a6a6a6;border-radius:2.5px;box-shadow:0 0 0 1.3px #e9eef7;overflow:hidden"><div style="position:absolute;right:0;top:1px;width:13.8px;bottom:1px;background:#e8ecf4"><svg width="13.8" height="15" viewBox="0 0 13.8 15" style="position:absolute;left:0;top:0"><path d="M3.1 6.0 L10.5 6.0 L6.8 9.9 Z" fill="#a6a6a6"/></svg></div></div>
<div style="position:absolute;left:592.00px;top:438.63px;width:53.20px;height:19.10px;box-sizing:border-box;background:#e0ffff;border:1px solid #a6a6a6;border-radius:2.5px;box-shadow:0 0 0 1.3px #e9eef7;overflow:hidden"><div style="position:absolute;right:0;top:1px;width:13.8px;bottom:1px;background:#e8ecf4"><svg width="13.8" height="15" viewBox="0 0 13.8 15" style="position:absolute;left:0;top:0"><path d="M3.1 6.0 L10.5 6.0 L6.8 9.9 Z" fill="#a6a6a6"/></svg></div></div>
<div style="position:absolute;left:646.90px;top:438.63px;width:66.90px;height:19.10px;box-sizing:border-box;background:#e0ffff;border:1px solid #a6a6a6;border-radius:2.5px;box-shadow:0 0 0 1.3px #e9eef7;overflow:hidden"><div style="position:absolute;right:0;top:1px;width:13.8px;bottom:1px;background:#e8ecf4"><svg width="13.8" height="15" viewBox="0 0 13.8 15" style="position:absolute;left:0;top:0"><path d="M3.1 6.0 L10.5 6.0 L6.8 9.9 Z" fill="#a6a6a6"/></svg></div></div>
<div style="position:absolute;left:714.80px;top:438.63px;width:55.10px;height:19.10px;box-sizing:border-box;background:#fff;border:1px solid #aeaeae;border-right-color:#c3d5ec;border-bottom-color:#c3d5ec;border-radius:2.5px;box-shadow:0 0 0 1.5px #e9eef7"></div>
<div style="position:absolute;left:771.70px;top:438.63px;width:70.50px;height:19.10px;box-sizing:border-box;background:#fff;border:1px solid #aeaeae;border-right-color:#c3d5ec;border-bottom-color:#c3d5ec;border-radius:2.5px;box-shadow:0 0 0 1.5px #e9eef7"></div>
<div style="position:absolute;left:844.00px;top:438.63px;width:72.10px;height:19.10px;box-sizing:border-box;background:#e0ffff;border:1px solid #a6a6a6;border-radius:2.5px;box-shadow:0 0 0 1.3px #e9eef7;overflow:hidden"><div style="position:absolute;right:0;top:1px;width:13.8px;bottom:1px;background:#e8ecf4"><svg width="13.8" height="15" viewBox="0 0 13.8 15" style="position:absolute;left:0;top:0"><path d="M3.1 6.0 L10.5 6.0 L6.8 9.9 Z" fill="#a6a6a6"/></svg></div></div>
<div style="position:absolute;left:916.10px;top:438.63px;width:51.90px;height:19.10px;box-sizing:border-box;background:#e0ffff;border:1px solid #a6a6a6;border-radius:2.5px;box-shadow:0 0 0 1.3px #e9eef7;overflow:hidden"><div style="position:absolute;right:0;top:1px;width:13.8px;bottom:1px;background:#e8ecf4"><svg width="13.8" height="15" viewBox="0 0 13.8 15" style="position:absolute;left:0;top:0"><path d="M3.1 6.0 L10.5 6.0 L6.8 9.9 Z" fill="#a6a6a6"/></svg></div></div>
<div style="position:absolute;left:970.20px;top:438.63px;width:55.00px;height:19.10px;box-sizing:border-box;background:#e0ffff;border:1px solid #a6a6a6;border-radius:2.5px;box-shadow:0 0 0 1.3px #e9eef7;overflow:hidden"><div style="position:absolute;right:0;top:1px;width:13.8px;bottom:1px;background:#e8ecf4"><svg width="13.8" height="15" viewBox="0 0 13.8 15" style="position:absolute;left:0;top:0"><path d="M3.1 6.0 L10.5 6.0 L6.8 9.9 Z" fill="#a6a6a6"/></svg></div></div>
<div style="position:absolute;left:1027.20px;top:438.63px;width:67.00px;height:19.10px;box-sizing:border-box;background:#e0ffff;border:1px solid #a6a6a6;border-radius:2.5px;box-shadow:0 0 0 1.3px #e9eef7;overflow:hidden"><div style="position:absolute;right:0;top:1px;width:13.8px;bottom:1px;background:#e8ecf4"><svg width="13.8" height="15" viewBox="0 0 13.8 15" style="position:absolute;left:0;top:0"><path d="M3.1 6.0 L10.5 6.0 L6.8 9.9 Z" fill="#a6a6a6"/></svg></div></div>
<div style="position:absolute;left:1096.00px;top:438.63px;width:75.80px;height:19.10px;box-sizing:border-box;background:#e0ffff;border:1px solid #a6a6a6;border-radius:2.5px;box-shadow:0 0 0 1.3px #e9eef7;overflow:hidden"><div style="position:absolute;right:0;top:1px;width:13.8px;bottom:1px;background:#e8ecf4"><svg width="13.8" height="15" viewBox="0 0 13.8 15" style="position:absolute;left:0;top:0"><path d="M3.1 6.0 L10.5 6.0 L6.8 9.9 Z" fill="#a6a6a6"/></svg></div></div>
<div style="position:absolute;left:1173.70px;top:438.63px;width:64.00px;height:19.10px;box-sizing:border-box;background:#fff;border:1px solid #aeaeae;border-right-color:#c3d5ec;border-bottom-color:#c3d5ec;border-radius:2.5px;box-shadow:0 0 0 1.5px #e9eef7"></div>
<div style="position:absolute;left:1239.80px;top:438.63px;width:90.10px;height:19.10px;box-sizing:border-box;background:#fff;border:1px solid #aeaeae;border-right-color:#c3d5ec;border-bottom-color:#c3d5ec;border-radius:2.5px;box-shadow:0 0 0 1.5px #e9eef7"></div>
<div style="position:absolute;left:1332.20px;top:438.63px;width:75.50px;height:19.10px;box-sizing:border-box;background:#fff;border:1px solid #a6a6a6;border-radius:2.5px;box-shadow:0 0 0 1.3px #e9eef7;overflow:hidden"><div style="position:absolute;right:0;top:1px;width:13.8px;bottom:1px;background:#e8ecf4"><svg width="13.8" height="15" viewBox="0 0 13.8 15" style="position:absolute;left:0;top:0"><path d="M3.1 6.0 L10.5 6.0 L6.8 9.9 Z" fill="#a6a6a6"/></svg></div></div>
<div style="position:absolute;left:1409.70px;top:438.63px;width:54.10px;height:19.10px;box-sizing:border-box;background:#fff;border:1px solid #a6a6a6;border-radius:2.5px;box-shadow:0 0 0 1.3px #e9eef7;overflow:hidden"><div style="position:absolute;right:0;top:1px;width:13.8px;bottom:1px;background:#e8ecf4"><svg width="13.8" height="15" viewBox="0 0 13.8 15" style="position:absolute;left:0;top:0"><path d="M3.1 6.0 L10.5 6.0 L6.8 9.9 Z" fill="#a6a6a6"/></svg></div></div>
<div style="position:absolute;left:1465.90px;top:438.63px;width:54.30px;height:19.10px;box-sizing:border-box;background:#fff;border:1px solid #a6a6a6;border-radius:2.5px;box-shadow:0 0 0 1.3px #e9eef7;overflow:hidden"><div style="position:absolute;right:0;top:1px;width:13.8px;bottom:1px;background:#e8ecf4"><svg width="13.8" height="15" viewBox="0 0 13.8 15" style="position:absolute;left:0;top:0"><path d="M3.1 6.0 L10.5 6.0 L6.8 9.9 Z" fill="#a6a6a6"/></svg></div></div>
<div style="position:absolute;left:30.30px;top:459.97px;width:38.60px;height:19.10px;box-sizing:border-box;background:#fff;border:1px solid #aeaeae;border-right-color:#c3d5ec;border-bottom-color:#c3d5ec;border-radius:2.5px;box-shadow:0 0 0 1.5px #e9eef7;clip-path:inset(-2px -2px -2px -0.3px)"></div>
<div style="position:absolute;left:70.80px;top:459.97px;width:31.10px;height:19.10px;box-sizing:border-box;background:#fff;border:1px solid #aeaeae;border-right-color:#c3d5ec;border-bottom-color:#c3d5ec;border-radius:2.5px;box-shadow:0 0 0 1.5px #e9eef7"></div>
<div style="position:absolute;left:103.70px;top:459.97px;width:33.20px;height:19.10px;box-sizing:border-box;background:#fff;border:1px solid #aeaeae;border-right-color:#c3d5ec;border-bottom-color:#c3d5ec;border-radius:2.5px;box-shadow:0 0 0 1.5px #e9eef7"></div>
<div style="position:absolute;left:138.90px;top:459.97px;width:51.10px;height:19.10px;box-sizing:border-box;background:#fff;border:1px solid #a6a6a6;border-radius:2.5px;box-shadow:0 0 0 1.3px #e9eef7;overflow:hidden"><div style="position:absolute;right:0;top:1px;width:13.8px;bottom:1px;background:#e8ecf4"><svg width="13.8" height="15" viewBox="0 0 13.8 15" style="position:absolute;left:0;top:0"><path d="M3.1 6.0 L10.5 6.0 L6.8 9.9 Z" fill="#a6a6a6"/></svg></div></div>
<div style="position:absolute;left:191.70px;top:459.97px;width:74.60px;height:19.10px;box-sizing:border-box;background:#fff;border:1px solid #a6a6a6;border-radius:2.5px;box-shadow:0 0 0 1.3px #e9eef7;overflow:hidden"><div style="position:absolute;right:0;top:1px;width:13.8px;bottom:1px;background:#e8ecf4"><svg width="13.8" height="15" viewBox="0 0 13.8 15" style="position:absolute;left:0;top:0"><path d="M3.1 6.0 L10.5 6.0 L6.8 9.9 Z" fill="#a6a6a6"/></svg></div></div>
<div style="position:absolute;left:269.70px;top:459.97px;width:74.10px;height:19.10px;box-sizing:border-box;background:#fff;border:1px solid #a6a6a6;border-radius:2.5px;box-shadow:0 0 0 1.3px #e9eef7;overflow:hidden"><div style="position:absolute;right:0;top:1px;width:13.8px;bottom:1px;background:#e8ecf4"><svg width="13.8" height="15" viewBox="0 0 13.8 15" style="position:absolute;left:0;top:0"><path d="M3.1 6.0 L10.5 6.0 L6.8 9.9 Z" fill="#a6a6a6"/></svg></div></div>
<div style="position:absolute;left:345.90px;top:459.97px;width:74.10px;height:19.10px;box-sizing:border-box;background:#fff;border:1px solid #a6a6a6;border-radius:2.5px;box-shadow:0 0 0 1.3px #e9eef7;overflow:hidden"><div style="position:absolute;right:0;top:1px;width:13.8px;bottom:1px;background:#e8ecf4"><svg width="13.8" height="15" viewBox="0 0 13.8 15" style="position:absolute;left:0;top:0"><path d="M3.1 6.0 L10.5 6.0 L6.8 9.9 Z" fill="#a6a6a6"/></svg></div></div>
<div style="position:absolute;left:421.70px;top:459.97px;width:82.10px;height:19.10px;box-sizing:border-box;background:#fff;border:1px solid #a6a6a6;border-radius:2.5px;box-shadow:0 0 0 1.3px #e9eef7;overflow:hidden"><div style="position:absolute;right:0;top:1px;width:13.8px;bottom:1px;background:#e8ecf4"><svg width="13.8" height="15" viewBox="0 0 13.8 15" style="position:absolute;left:0;top:0"><path d="M3.1 6.0 L10.5 6.0 L6.8 9.9 Z" fill="#a6a6a6"/></svg></div></div>
<div style="position:absolute;left:506.90px;top:459.97px;width:85.10px;height:19.10px;box-sizing:border-box;background:#e0ffff;border:1px solid #a6a6a6;border-radius:2.5px;box-shadow:0 0 0 1.3px #e9eef7;overflow:hidden"><div style="position:absolute;right:0;top:1px;width:13.8px;bottom:1px;background:#e8ecf4"><svg width="13.8" height="15" viewBox="0 0 13.8 15" style="position:absolute;left:0;top:0"><path d="M3.1 6.0 L10.5 6.0 L6.8 9.9 Z" fill="#a6a6a6"/></svg></div></div>
<div style="position:absolute;left:592.00px;top:459.97px;width:53.20px;height:19.10px;box-sizing:border-box;background:#e0ffff;border:1px solid #a6a6a6;border-radius:2.5px;box-shadow:0 0 0 1.3px #e9eef7;overflow:hidden"><div style="position:absolute;right:0;top:1px;width:13.8px;bottom:1px;background:#e8ecf4"><svg width="13.8" height="15" viewBox="0 0 13.8 15" style="position:absolute;left:0;top:0"><path d="M3.1 6.0 L10.5 6.0 L6.8 9.9 Z" fill="#a6a6a6"/></svg></div></div>
<div style="position:absolute;left:646.90px;top:459.97px;width:66.90px;height:19.10px;box-sizing:border-box;background:#e0ffff;border:1px solid #a6a6a6;border-radius:2.5px;box-shadow:0 0 0 1.3px #e9eef7;overflow:hidden"><div style="position:absolute;right:0;top:1px;width:13.8px;bottom:1px;background:#e8ecf4"><svg width="13.8" height="15" viewBox="0 0 13.8 15" style="position:absolute;left:0;top:0"><path d="M3.1 6.0 L10.5 6.0 L6.8 9.9 Z" fill="#a6a6a6"/></svg></div></div>
<div style="position:absolute;left:714.80px;top:459.97px;width:55.10px;height:19.10px;box-sizing:border-box;background:#fff;border:1px solid #aeaeae;border-right-color:#c3d5ec;border-bottom-color:#c3d5ec;border-radius:2.5px;box-shadow:0 0 0 1.5px #e9eef7"></div>
<div style="position:absolute;left:771.70px;top:459.97px;width:70.50px;height:19.10px;box-sizing:border-box;background:#fff;border:1px solid #aeaeae;border-right-color:#c3d5ec;border-bottom-color:#c3d5ec;border-radius:2.5px;box-shadow:0 0 0 1.5px #e9eef7"></div>
<div style="position:absolute;left:844.00px;top:459.97px;width:72.10px;height:19.10px;box-sizing:border-box;background:#e0ffff;border:1px solid #a6a6a6;border-radius:2.5px;box-shadow:0 0 0 1.3px #e9eef7;overflow:hidden"><div style="position:absolute;right:0;top:1px;width:13.8px;bottom:1px;background:#e8ecf4"><svg width="13.8" height="15" viewBox="0 0 13.8 15" style="position:absolute;left:0;top:0"><path d="M3.1 6.0 L10.5 6.0 L6.8 9.9 Z" fill="#a6a6a6"/></svg></div></div>
<div style="position:absolute;left:916.10px;top:459.97px;width:51.90px;height:19.10px;box-sizing:border-box;background:#e0ffff;border:1px solid #a6a6a6;border-radius:2.5px;box-shadow:0 0 0 1.3px #e9eef7;overflow:hidden"><div style="position:absolute;right:0;top:1px;width:13.8px;bottom:1px;background:#e8ecf4"><svg width="13.8" height="15" viewBox="0 0 13.8 15" style="position:absolute;left:0;top:0"><path d="M3.1 6.0 L10.5 6.0 L6.8 9.9 Z" fill="#a6a6a6"/></svg></div></div>
<div style="position:absolute;left:970.20px;top:459.97px;width:55.00px;height:19.10px;box-sizing:border-box;background:#e0ffff;border:1px solid #a6a6a6;border-radius:2.5px;box-shadow:0 0 0 1.3px #e9eef7;overflow:hidden"><div style="position:absolute;right:0;top:1px;width:13.8px;bottom:1px;background:#e8ecf4"><svg width="13.8" height="15" viewBox="0 0 13.8 15" style="position:absolute;left:0;top:0"><path d="M3.1 6.0 L10.5 6.0 L6.8 9.9 Z" fill="#a6a6a6"/></svg></div></div>
<div style="position:absolute;left:1027.20px;top:459.97px;width:67.00px;height:19.10px;box-sizing:border-box;background:#e0ffff;border:1px solid #a6a6a6;border-radius:2.5px;box-shadow:0 0 0 1.3px #e9eef7;overflow:hidden"><div style="position:absolute;right:0;top:1px;width:13.8px;bottom:1px;background:#e8ecf4"><svg width="13.8" height="15" viewBox="0 0 13.8 15" style="position:absolute;left:0;top:0"><path d="M3.1 6.0 L10.5 6.0 L6.8 9.9 Z" fill="#a6a6a6"/></svg></div></div>
<div style="position:absolute;left:1096.00px;top:459.97px;width:75.80px;height:19.10px;box-sizing:border-box;background:#e0ffff;border:1px solid #a6a6a6;border-radius:2.5px;box-shadow:0 0 0 1.3px #e9eef7;overflow:hidden"><div style="position:absolute;right:0;top:1px;width:13.8px;bottom:1px;background:#e8ecf4"><svg width="13.8" height="15" viewBox="0 0 13.8 15" style="position:absolute;left:0;top:0"><path d="M3.1 6.0 L10.5 6.0 L6.8 9.9 Z" fill="#a6a6a6"/></svg></div></div>
<div style="position:absolute;left:1173.70px;top:459.97px;width:64.00px;height:19.10px;box-sizing:border-box;background:#fff;border:1px solid #aeaeae;border-right-color:#c3d5ec;border-bottom-color:#c3d5ec;border-radius:2.5px;box-shadow:0 0 0 1.5px #e9eef7"></div>
<div style="position:absolute;left:1239.80px;top:459.97px;width:90.10px;height:19.10px;box-sizing:border-box;background:#fff;border:1px solid #aeaeae;border-right-color:#c3d5ec;border-bottom-color:#c3d5ec;border-radius:2.5px;box-shadow:0 0 0 1.5px #e9eef7"></div>
<div style="position:absolute;left:1332.20px;top:459.97px;width:75.50px;height:19.10px;box-sizing:border-box;background:#fff;border:1px solid #a6a6a6;border-radius:2.5px;box-shadow:0 0 0 1.3px #e9eef7;overflow:hidden"><div style="position:absolute;right:0;top:1px;width:13.8px;bottom:1px;background:#e8ecf4"><svg width="13.8" height="15" viewBox="0 0 13.8 15" style="position:absolute;left:0;top:0"><path d="M3.1 6.0 L10.5 6.0 L6.8 9.9 Z" fill="#a6a6a6"/></svg></div></div>
<div style="position:absolute;left:1409.70px;top:459.97px;width:54.10px;height:19.10px;box-sizing:border-box;background:#fff;border:1px solid #a6a6a6;border-radius:2.5px;box-shadow:0 0 0 1.3px #e9eef7;overflow:hidden"><div style="position:absolute;right:0;top:1px;width:13.8px;bottom:1px;background:#e8ecf4"><svg width="13.8" height="15" viewBox="0 0 13.8 15" style="position:absolute;left:0;top:0"><path d="M3.1 6.0 L10.5 6.0 L6.8 9.9 Z" fill="#a6a6a6"/></svg></div></div>
<div style="position:absolute;left:1465.90px;top:459.97px;width:54.30px;height:19.10px;box-sizing:border-box;background:#fff;border:1px solid #a6a6a6;border-radius:2.5px;box-shadow:0 0 0 1.3px #e9eef7;overflow:hidden"><div style="position:absolute;right:0;top:1px;width:13.8px;bottom:1px;background:#e8ecf4"><svg width="13.8" height="15" viewBox="0 0 13.8 15" style="position:absolute;left:0;top:0"><path d="M3.1 6.0 L10.5 6.0 L6.8 9.9 Z" fill="#a6a6a6"/></svg></div></div>
<div style="position:absolute;left:33.00px;top:165.00px;width:1.10px;height:11.20px;background:#000"></div>
<div class="t s" style="left:426.30px;top:160.79px;font-size:9.33px;color:#000;letter-spacing:-0.128px;">Nenhum</div>
<div class="t s" style="left:511.20px;top:160.79px;font-size:9.33px;color:#000;">0-Normal</div>
<div class="t s" style="left:596.50px;top:160.79px;font-size:9.33px;color:#000;">1-Sim</div>
<div class="t s" style="left:651.00px;top:160.79px;font-size:9.33px;color:#000;">0-Original</div>
<div class="t s" style="left:848.00px;top:160.79px;font-size:9.33px;color:#000;">0-Nao</div>
<div class="t s" style="left:920.30px;top:160.79px;font-size:9.33px;color:#000;">N-Nao</div>
<div class="t s" style="left:974.50px;top:160.79px;font-size:9.33px;color:#000;">N-Nao</div>
<div class="t s" style="left:1031.50px;top:160.79px;font-size:9.33px;color:#000;">N-Nao</div>
<div class="t s" style="left:1100.00px;top:160.79px;font-size:9.33px;color:#000;">0-Nao Part...</div>
<div class="t s" style="left:1414.20px;top:161.56px;font-size:10px;color:#000;letter-spacing:-0.015px;">Nao</div>
<div class="t s" style="left:1470.40px;top:161.56px;font-size:10px;color:#000;letter-spacing:-0.015px;">Nao</div>
<div class="t s" style="left:35.00px;top:486.32px;font-size:10.67px;color:#000;letter-spacing:-0.214px;">Empresa</div>
<div style="position:absolute;left:77.80px;top:485.00px;width:423.50px;height:20.30px;box-sizing:border-box;background:#fff;border:1.4px solid #bfd1ea;border-radius:3px;box-shadow:0 0 0 0.8px #dfe7f3"></div>
<div class="t s" style="left:522.50px;top:490.32px;font-size:10.67px;color:#000080;letter-spacing:0.041px;">* Obs: Empresa de grande porte = Ativo superior a 240 milhões ou Faturamento superior a 300 milhões no ano.</div>
<div style="position:absolute;left:868.80px;top:480.50px;width:1.00px;height:11.70px;background:#1a1a8a"></div>
<div style="position:absolute;left:3.00px;top:570.00px;width:91.20px;height:21.20px;background:#cad8ec;border-radius:0 0 4px 4px"></div>
<div class="t s" style="left:11.30px;top:570.32px;font-size:10.67px;color:#333;letter-spacing:-0.122px;">Relacionamento</div>
<div style="position:absolute;left:97.20px;top:570.00px;width:72.00px;height:21.20px;background:#cad8ec;border-radius:0 0 4px 4px"></div>
<div class="t s" style="left:104.70px;top:570.32px;font-size:10.67px;color:#333;letter-spacing:0.065px;">Qualificacao</div>
<div style="position:absolute;left:172.20px;top:570.00px;width:66.00px;height:21.20px;background:#cad8ec;border-radius:0 0 4px 4px"></div>
<div class="t s" style="left:179.70px;top:570.32px;font-size:10.67px;color:#333;letter-spacing:-0.026px;">Signatarios</div>
<div style="position:absolute;left:240.80px;top:570.00px;width:103.40px;height:21.20px;background:#cad8ec;border-radius:0 0 4px 4px"></div>
<div class="t s" style="left:248.30px;top:570.32px;font-size:10.67px;color:#333;letter-spacing:-0.050px;">Partes Relaciona...</div>
<div style="position:absolute;left:347.20px;top:570.00px;width:102.80px;height:21.20px;background:#cad8ec;border-radius:0 0 4px 4px"></div>
<div class="t s" style="left:355.30px;top:570.32px;font-size:10.67px;color:#333;letter-spacing:-0.117px;">Rendimentos Diri...</div>
<div style="position:absolute;left:453.00px;top:570.00px;width:75.00px;height:21.20px;background:#cad8ec;border-radius:0 0 4px 4px"></div>
<div class="t s" style="left:460.00px;top:570.32px;font-size:10.67px;color:#333;letter-spacing:-0.105px;">Plano Contas</div>
<div style="position:absolute;left:531.30px;top:570.00px;width:102.00px;height:21.20px;background:#cad8ec;border-radius:0 0 4px 4px"></div>
<div class="t s" style="left:539.20px;top:570.32px;font-size:10.67px;color:#333;letter-spacing:0.165px;">Associacao Con...</div>
<div style="position:absolute;left:637.00px;top:570.00px;width:83.50px;height:21.20px;background:#90b4da;border-radius:0 0 4px 4px;box-shadow:inset -1px -1px 0 #6f93c4"></div>
<div class="t s" style="left:644.50px;top:570.32px;font-size:10.67px;color:#000;letter-spacing:-0.160px;">Controle Filiais</div>
<div style="position:absolute;left:723.50px;top:570.00px;width:64.80px;height:21.20px;background:#cad8ec;border-radius:0 0 4px 4px"></div>
<div class="t s" style="left:728.30px;top:570.32px;font-size:10.67px;color:#333;letter-spacing:-0.065px;">Parametros</div>
<div style="position:absolute;left:791.30px;top:570.00px;width:60.80px;height:21.20px;background:#cad8ec;border-radius:0 0 4px 4px"></div>
<div class="t s" style="left:798.70px;top:570.32px;font-size:10.67px;color:#333;letter-spacing:0.029px;">Consorcio</div>
<div style="position:absolute;left:855.10px;top:570.00px;width:102.10px;height:21.20px;background:#cad8ec;border-radius:0 0 4px 4px"></div>
<div class="t s" style="left:862.50px;top:570.32px;font-size:10.67px;color:#333;letter-spacing:-0.059px;">Composicao Custo</div>
<div style="position:absolute;left:960.00px;top:570.00px;width:82.00px;height:21.20px;background:#cad8ec;border-radius:0 0 4px 4px"></div>
<div class="t s" style="left:967.50px;top:570.32px;font-size:10.67px;color:#333;letter-spacing:0.008px;">Bloco/Registro</div>
<div style="position:absolute;left:1045.00px;top:570.00px;width:103.00px;height:21.20px;background:#cad8ec;border-radius:0 0 4px 4px"></div>
<div class="t s" style="left:1055.30px;top:570.32px;font-size:10.67px;color:#333;letter-spacing:0.108px;">Controle de Ver...</div>
<div style="position:absolute;left:1151.20px;top:570.00px;width:90.80px;height:21.20px;background:#cad8ec;border-radius:0 0 4px 4px"></div>
<div class="t s" style="left:1158.30px;top:570.32px;font-size:10.67px;color:#333;letter-spacing:-0.204px;">UN Medida Sped</div>
<div style="position:absolute;left:1245.00px;top:570.00px;width:77.00px;height:21.20px;background:#cad8ec;border-radius:0 0 4px 4px"></div>
<div class="t s" style="left:1252.50px;top:570.32px;font-size:10.67px;color:#333;letter-spacing:-0.137px;">Conta Padrao</div>
<div style="position:absolute;left:1325.30px;top:570.00px;width:101.90px;height:21.20px;background:#cad8ec;border-radius:0 0 4px 4px"></div>
<div class="t s" style="left:1333.30px;top:570.32px;font-size:10.67px;color:#333;letter-spacing:0.035px;">Descrição Regis...</div>
<div style="position:absolute;left:1430.00px;top:570.00px;width:60.20px;height:21.20px;background:#cad8ec;border-radius:0 0 4px 4px"></div>
<div class="t s" style="left:1437.30px;top:570.32px;font-size:10.67px;color:#333;letter-spacing:0.027px;">Balancete</div>
<div style="position:absolute;left:1492.90px;top:570.00px;width:57.10px;height:21.20px;background:#cad8ec;border-radius:0 0 4px 4px"></div>
<div class="t s" style="left:1501.00px;top:570.32px;font-size:10.67px;color:#333;letter-spacing:-0.133px;">Relatorio</div>
<div style="position:absolute;left:6.00px;top:111.00px;width:1525.00px;height:72.00px;box-sizing:border-box;border:5px solid #ed1c24"></div>
<div style="position:absolute;left:634.20px;top:562.00px;width:90.00px;height:34.80px;box-sizing:border-box;border:5px solid #ed1c24"></div>
</body></html>
